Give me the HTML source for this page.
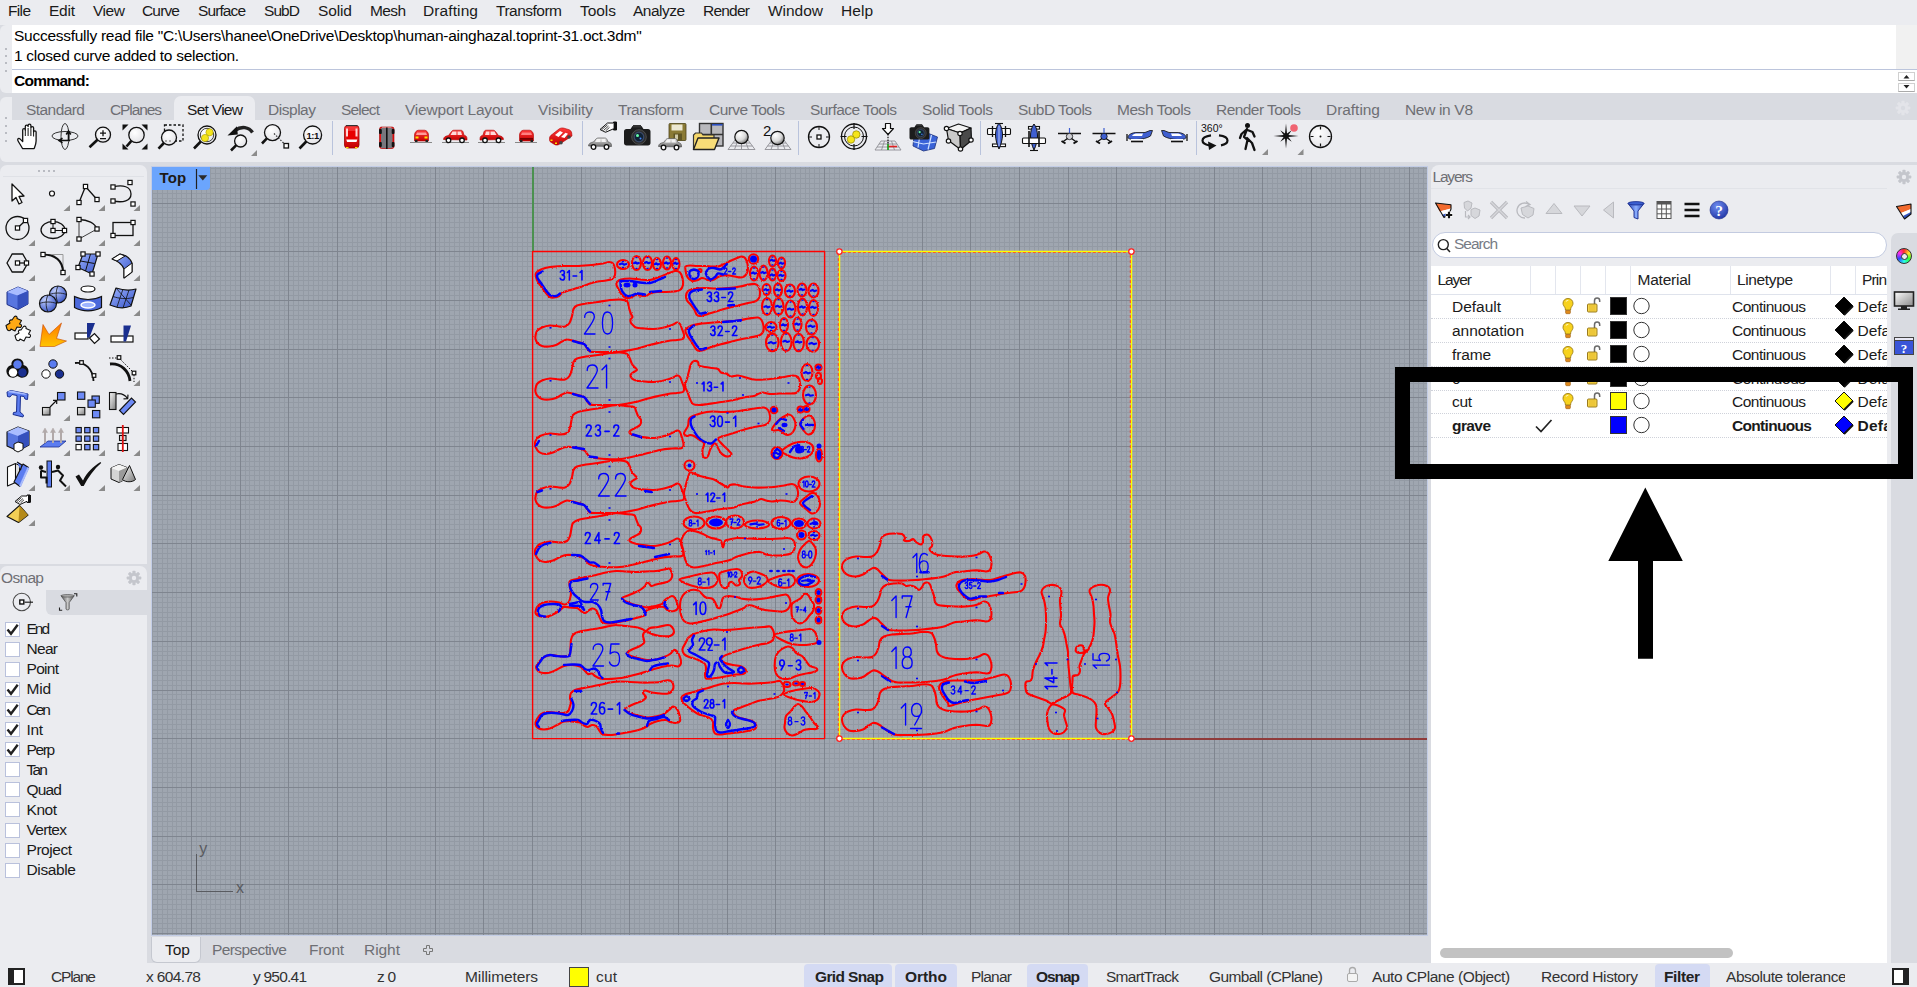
<!DOCTYPE html>
<html><head><meta charset="utf-8"><title>Rhino</title>
<style>
html,body{margin:0;padding:0}
body{width:1917px;height:987px;overflow:hidden;position:relative;background:#d9dbe1;font-family:"Liberation Sans",sans-serif}
.t{position:absolute;white-space:nowrap;display:block}
.b{position:absolute;display:block}
svg{position:absolute;display:block;overflow:visible}
</style></head><body>

<div class="b" style="left:0px;top:0px;width:1917px;height:25px;background:#ebecf0;"></div>
<span class="t" style="left:8.0px;top:2.9px;font-size:15.5px;line-height:15.5px;letter-spacing:-0.66px;color:#1a1a1a;">File</span>
<span class="t" style="left:49.0px;top:2.9px;font-size:15.5px;line-height:15.5px;letter-spacing:-0.24px;color:#1a1a1a;">Edit</span>
<span class="t" style="left:93.0px;top:2.9px;font-size:15.5px;line-height:15.5px;letter-spacing:-0.44px;color:#1a1a1a;">View</span>
<span class="t" style="left:142.0px;top:2.9px;font-size:15.5px;line-height:15.5px;letter-spacing:-0.84px;color:#1a1a1a;">Curve</span>
<span class="t" style="left:198.0px;top:2.9px;font-size:15.5px;line-height:15.5px;letter-spacing:-0.90px;color:#1a1a1a;">Surface</span>
<span class="t" style="left:264.0px;top:2.9px;font-size:15.5px;line-height:15.5px;letter-spacing:-0.92px;color:#1a1a1a;">SubD</span>
<span class="t" style="left:318.0px;top:2.9px;font-size:15.5px;line-height:15.5px;letter-spacing:-0.12px;color:#1a1a1a;">Solid</span>
<span class="t" style="left:370.0px;top:2.9px;font-size:15.5px;line-height:15.5px;letter-spacing:-0.63px;color:#1a1a1a;">Mesh</span>
<span class="t" style="left:423.0px;top:2.9px;font-size:15.5px;line-height:15.5px;letter-spacing:0.10px;color:#1a1a1a;">Drafting</span>
<span class="t" style="left:496.0px;top:2.9px;font-size:15.5px;line-height:15.5px;letter-spacing:-0.51px;color:#1a1a1a;">Transform</span>
<span class="t" style="left:580.0px;top:2.9px;font-size:15.5px;line-height:15.5px;letter-spacing:-0.05px;color:#1a1a1a;">Tools</span>
<span class="t" style="left:633.0px;top:2.9px;font-size:15.5px;line-height:15.5px;letter-spacing:-0.52px;color:#1a1a1a;">Analyze</span>
<span class="t" style="left:703.0px;top:2.9px;font-size:15.5px;line-height:15.5px;letter-spacing:-0.77px;color:#1a1a1a;">Render</span>
<span class="t" style="left:768.0px;top:2.9px;font-size:15.5px;line-height:15.5px;letter-spacing:-0.03px;color:#1a1a1a;">Window</span>
<span class="t" style="left:841.0px;top:2.9px;font-size:15.5px;line-height:15.5px;letter-spacing:0.04px;color:#1a1a1a;">Help</span>
<div class="b" style="left:0px;top:25px;width:12px;height:68px;background:#ebecf0;border-radius:6px 0 0 6px"></div>
<div class="b" style="left:12px;top:25px;width:1884px;height:44px;background:#fff;"></div>
<div class="b" style="left:1896px;top:25px;width:21px;height:44px;background:#f1f1f1;"></div>
<div class="b" style="left:12px;top:69px;width:1905px;height:1px;background:#bcc5dc;"></div>
<div class="b" style="left:12px;top:70px;width:1905px;height:23px;background:#fff;"></div>
<span class="t" style="left:14.0px;top:27.9px;font-size:15.5px;line-height:15.5px;letter-spacing:-0.27px;color:#000;">Successfully read file "C:\Users\hanee\OneDrive\Desktop\human-ainghazal.toprint-31.oct.3dm"</span>
<span class="t" style="left:14.0px;top:47.9px;font-size:15.5px;line-height:15.5px;letter-spacing:-0.28px;color:#000;">1 closed curve added to selection.</span>
<span class="t" style="left:14.0px;top:72.9px;font-size:15.5px;line-height:15.5px;letter-spacing:-0.71px;color:#000;font-weight:bold;">Command:</span>
<div class="b" style="left:5px;top:48px;width:2px;height:2px;background:#a9abb3;border-radius:2px"></div>
<div class="b" style="left:5px;top:55px;width:2px;height:2px;background:#a9abb3;border-radius:2px"></div>
<div class="b" style="left:5px;top:62px;width:2px;height:2px;background:#a9abb3;border-radius:2px"></div>
<div class="b" style="left:5px;top:70px;width:2px;height:2px;background:#a9abb3;border-radius:2px"></div>
<div class="b" style="left:1897.5px;top:72px;width:17px;height:9px;background:#fff;border:1px solid #d0d0d0;border-bottom-color:#aaa;box-sizing:border-box"></div>
<div class="b" style="left:1897.5px;top:82.5px;width:17px;height:9px;background:#fff;border:1px solid #d0d0d0;border-bottom-color:#aaa;box-sizing:border-box"></div>
<svg style="left:1898px;top:72px" width="17" height="20"><path d="M5.5 6.5L8.5 3L11.5 6.5Z M5.5 13L8.5 16.5L11.5 13Z" fill="#222"/></svg>
<div class="b" style="left:0px;top:95px;width:1917px;height:72px;background:#d9dbe1;"></div>
<div class="b" style="left:12px;top:120px;width:1905px;height:42px;background:#ebecf0;"></div>
<div class="b" style="left:0px;top:97px;width:12px;height:65px;background:#ebecf0;border-radius:6px 0 0 6px"></div>
<div class="b" style="left:174px;top:96px;width:81px;height:26px;background:#ebecf0;border-radius:7px 7px 0 0"></div>
<span class="t" style="left:26.0px;top:101.9px;font-size:15.5px;line-height:15.5px;letter-spacing:-0.56px;color:#6e6f74;">Standard</span>
<span class="t" style="left:110.0px;top:101.9px;font-size:15.5px;line-height:15.5px;letter-spacing:-1.10px;color:#6e6f74;">CPlanes</span>
<span class="t" style="left:187.0px;top:101.9px;font-size:15.5px;line-height:15.5px;letter-spacing:-0.70px;color:#1a1a1a;">Set View</span>
<span class="t" style="left:268.0px;top:101.9px;font-size:15.5px;line-height:15.5px;letter-spacing:-0.47px;color:#6e6f74;">Display</span>
<span class="t" style="left:341.0px;top:101.9px;font-size:15.5px;line-height:15.5px;letter-spacing:-0.82px;color:#6e6f74;">Select</span>
<span class="t" style="left:405.0px;top:101.9px;font-size:15.5px;line-height:15.5px;letter-spacing:-0.20px;color:#6e6f74;">Viewport Layout</span>
<span class="t" style="left:538.0px;top:101.9px;font-size:15.5px;line-height:15.5px;letter-spacing:-0.08px;color:#6e6f74;">Visibility</span>
<span class="t" style="left:618.0px;top:101.9px;font-size:15.5px;line-height:15.5px;letter-spacing:-0.51px;color:#6e6f74;">Transform</span>
<span class="t" style="left:709.0px;top:101.9px;font-size:15.5px;line-height:15.5px;letter-spacing:-0.56px;color:#6e6f74;">Curve Tools</span>
<span class="t" style="left:810.0px;top:101.9px;font-size:15.5px;line-height:15.5px;letter-spacing:-0.55px;color:#6e6f74;">Surface Tools</span>
<span class="t" style="left:922.0px;top:101.9px;font-size:15.5px;line-height:15.5px;letter-spacing:-0.37px;color:#6e6f74;">Solid Tools</span>
<span class="t" style="left:1018.0px;top:101.9px;font-size:15.5px;line-height:15.5px;letter-spacing:-0.55px;color:#6e6f74;">SubD Tools</span>
<span class="t" style="left:1117.0px;top:101.9px;font-size:15.5px;line-height:15.5px;letter-spacing:-0.46px;color:#6e6f74;">Mesh Tools</span>
<span class="t" style="left:1216.0px;top:101.9px;font-size:15.5px;line-height:15.5px;letter-spacing:-0.55px;color:#6e6f74;">Render Tools</span>
<span class="t" style="left:1326.0px;top:101.9px;font-size:15.5px;line-height:15.5px;letter-spacing:-0.04px;color:#6e6f74;">Drafting</span>
<span class="t" style="left:1405.0px;top:101.9px;font-size:15.5px;line-height:15.5px;letter-spacing:-0.33px;color:#6e6f74;">New in V8</span>
<div class="b" style="left:5px;top:117px;width:2px;height:2px;background:#a9abb3;border-radius:2px"></div>
<div class="b" style="left:5px;top:125px;width:2px;height:2px;background:#a9abb3;border-radius:2px"></div>
<div class="b" style="left:5px;top:132px;width:2px;height:2px;background:#a9abb3;border-radius:2px"></div>
<div class="b" style="left:5px;top:140px;width:2px;height:2px;background:#a9abb3;border-radius:2px"></div>
<div class="b" style="left:332px;top:121px;width:1px;height:34px;background:#b9c3dc;"></div>
<div class="b" style="left:582px;top:121px;width:1px;height:34px;background:#b9c3dc;"></div>
<div class="b" style="left:798px;top:121px;width:1px;height:34px;background:#b9c3dc;"></div>
<div class="b" style="left:980px;top:121px;width:1px;height:34px;background:#b9c3dc;"></div>
<div class="b" style="left:1196px;top:121px;width:1px;height:34px;background:#b9c3dc;"></div>
<svg style="left:0;top:118px" width="1400" height="42" viewBox="0 118 1400 42">
<defs><radialGradient id="gsph" cx=".35" cy=".3" r=".75"><stop offset="0" stop-color="#fff"/><stop offset=".6" stop-color="#d8d8d8"/><stop offset="1" stop-color="#6f6f6f"/></radialGradient><linearGradient id="gred" x1="0" y1="0" x2="0" y2="1"><stop offset="0" stop-color="#ff3b3b"/><stop offset="1" stop-color="#c40000"/></linearGradient><linearGradient id="ggray" x1="0" y1="0" x2="0" y2="1"><stop offset="0" stop-color="#e4e4e4"/><stop offset="1" stop-color="#6d6d6d"/></linearGradient><radialGradient id="glens" cx=".4" cy=".35" r=".7"><stop offset="0" stop-color="#fff"/><stop offset="1" stop-color="#e2e2e6"/></radialGradient></defs>
<path d="M22.500 148.500c-1.500-3-3.800-6-4.700-8.300-.5-1.400 1-2.300 2.200-1.300l2.700 2.700v-11.500c0-2 2.600-2 2.600 0v-3.500c0-2 2.800-2 2.800 0v-1c0-2 2.800-2 2.800 0v2.500c0-2 2.700-2 2.700 0v4c0-1.700 2.500-1.700 2.500 0v9c0 3-1 5-2 7.500z" fill="#fff" stroke="#111" stroke-width="1.300" stroke-linejoin="round"/><path d="M25.300 130v6M28.100 128v8M30.900 128.500v7.500M33.600 131v5.500" stroke="#111" stroke-width="1"/>
<g fill="none" stroke="#333" stroke-width="1"><ellipse cx="65" cy="136" rx="13" ry="4.500"/><ellipse cx="65" cy="136.500" rx="4" ry="13"/></g><path d="M68.500 141v-9M66.200 134.500l2.300-3.500 2.300 3.500M70 140.500h-10M62.500 138.200l-3.500 2.300 3.500 2.300" fill="none" stroke="#111" stroke-width="1.600"/>
<path d="M97.5 139.8L89.5 147.3" stroke="#111" stroke-width="2.600" stroke-linecap="butt"/>
<circle cx="103.0" cy="134.7" r="7.5" fill="url(#glens)" stroke="#111" stroke-width="1.300"/>
<path d="M100 133.200h6M103 130.200v6M100 138.600h6" stroke="#111" stroke-width="1.300"/>
<path d="M131.4 140.8L126.5 146.5" stroke="#111" stroke-width="2.600" stroke-linecap="butt"/>
<circle cx="136.5" cy="135.0" r="7.7" fill="url(#glens)" stroke="#111" stroke-width="1.300"/>

<path d="M122.500 124.500h6l-6 6zM147.500 124.500v6l-6-6zM122.500 149.500v-6l6 6zM147.500 149.500h-6l6-6z" fill="#111"/>
<rect x="164.500" y="125" width="18.500" height="16" fill="none" stroke="#111" stroke-width="1.300" stroke-dasharray="2.500 2"/>
<path d="M163.9 143.0L158.5 148.7" stroke="#111" stroke-width="2.600" stroke-linecap="butt"/>
<circle cx="169.0" cy="137.5" r="7.5" fill="url(#glens)" stroke="#111" stroke-width="1.300"/>

<path d="M165 141h8" stroke="#666" stroke-width="1" stroke-dasharray="2 2"/>
<path d="M200.8 141.5L194.0 148.5" stroke="#111" stroke-width="2.600" stroke-linecap="butt"/>
<circle cx="207.0" cy="135.0" r="9.0" fill="url(#glens)" stroke="#111" stroke-width="1.300"/>
<circle cx="207" cy="135" r="6.700" fill="none" stroke="#111" stroke-width=".8"/><circle cx="209.500" cy="132.300" r="3.600" fill="#f5e51b" stroke="#a89b00" stroke-width=".6"/><circle cx="205" cy="138" r="3.600" fill="#f5e51b" stroke="#a89b00" stroke-width=".6"/>
<path d="M236.3 145.2L231.0 150.5" stroke="#111" stroke-width="2.600" stroke-linecap="butt"/>
<circle cx="240.6" cy="141.0" r="6.0" fill="url(#glens)" stroke="#111" stroke-width="1.300"/>

<path d="M252.500 132.500c-3.500-5.500-11-7-17.500-2" fill="none" stroke="#222" stroke-width="3.400"/><path d="M227.500 135.500l9.500-9.300.8 8.300z" fill="#111"/><path d="M257 150v6h-6z" fill="#8c8c8c"/>
<path d="M266.9 138.4L262.0 143.5" stroke="#111" stroke-width="2.600" stroke-linecap="butt"/>
<circle cx="272.5" cy="132.6" r="8.0" fill="url(#glens)" stroke="#111" stroke-width="1.300"/>

<path d="M274 133.500l10 10" stroke="#333" stroke-width="1.200" stroke-dasharray="1.500 1.500"/><rect x="284" y="143.500" width="4.500" height="4.500" fill="#fff" stroke="#111" stroke-width="1.300"/>
<path d="M306.3 141.5L299.5 148.5" stroke="#111" stroke-width="2.600" stroke-linecap="butt"/>
<circle cx="312.6" cy="135.0" r="9.0" fill="url(#glens)" stroke="#111" stroke-width="1.300"/>
<text x="312.600" y="139" text-anchor="middle" font-family="Liberation Sans" font-weight="bold" font-size="9.500" fill="#111" letter-spacing="-.5">1:1</text>
<rect x="344.500" y="125.500" width="14.500" height="22.500" rx="3" fill="url(#gred)" stroke="#a00000" stroke-width=".8"/><path d="M346 131h11.500l-1 9h-9.500z" fill="#e80000"/><path d="M346.300 139.500h11l-.8 2.500h-9.400z" fill="#fff"/><path d="M346 128.500h2v8h-2zM355.500 128.500h2v8h-2z" fill="#ffd5d5"/><rect x="346" y="147" width="2.500" height="1.300" fill="#ffe000"/><rect x="355" y="147" width="2.500" height="1.300" fill="#ffe000"/><rect x="346" y="125" width="11.500" height="1.200" fill="#333"/>
<rect x="379.500" y="127" width="14.500" height="21.500" rx="2" fill="#e81010" stroke="#a00000" stroke-width=".6"/><rect x="382" y="127.500" width="9.500" height="20.500" fill="url(#ggray)"/><rect x="381" y="128" width="11.500" height="20" fill="#77777d"/><rect x="386" y="127.500" width="1.600" height="21.500" fill="#111"/><rect x="379" y="129" width="2.800" height="5" rx="1" fill="#111"/><rect x="391.700" y="129" width="2.800" height="5" rx="1" fill="#111"/><rect x="379" y="142" width="2.800" height="5" rx="1" fill="#111"/><rect x="391.700" y="142" width="2.800" height="5" rx="1" fill="#111"/>
<path d="M410 142.500h22" stroke="#888" stroke-width="1"/><path d="M414.500 141v-6c0-2.500 2-4.800 4-4.800h6c2 0 4 2.300 4 4.800v6z" fill="url(#gred)" stroke="#b00000" stroke-width=".6"/><path d="M417 132.500h9l1 2.500h-11z" fill="#ff9a9a"/><rect x="415.500" y="136.500" width="3" height="2" fill="#ffe000"/><rect x="424.500" y="136.500" width="3" height="2" fill="#ffe000"/><rect x="415" y="140" width="2.500" height="2" fill="#222"/><rect x="425.500" y="140" width="2.500" height="2" fill="#222"/>
<g transform="translate(443 0)"><path d="M-1 142.500h27" stroke="#888" stroke-width="1"/><path d="M.5 139.500c0-2.500 2-3.500 5-4l3-4c.7-1 1.500-1.300 3-1.300h6c1.500 0 2 .5 2.500 1.500l1 3.500c2 .3 3 1.500 3 3.500v1.300z" fill="url(#gred)" stroke="#b00000" stroke-width=".6"/><path d="M9.500 131.500h4v3.500h-6zM14.500 131.500h3.500l1 3.500h-4.500z" fill="#ffd9d9"/><circle cx="5.500" cy="140.300" r="2.300" fill="#fff" stroke="#111" stroke-width="1.300"/><circle cx="19" cy="140.300" r="2.300" fill="#fff" stroke="#111" stroke-width="1.300"/></g>
<g transform="translate(504 0) scale(-1 1)"><path d="M-1 142.500h27" stroke="#888" stroke-width="1"/><path d="M.5 139.500c0-2.500 2-3.500 5-4l3-4c.7-1 1.500-1.300 3-1.300h6c1.500 0 2 .5 2.500 1.500l1 3.500c2 .3 3 1.500 3 3.500v1.300z" fill="url(#gred)" stroke="#b00000" stroke-width=".6"/><path d="M9.500 131.500h4v3.500h-6zM14.500 131.500h3.500l1 3.500h-4.500z" fill="#ffd9d9"/><circle cx="5.500" cy="140.300" r="2.300" fill="#fff" stroke="#111" stroke-width="1.300"/><circle cx="19" cy="140.300" r="2.300" fill="#fff" stroke="#111" stroke-width="1.300"/></g>
<path d="M515 142.500h22" stroke="#888" stroke-width="1"/><path d="M519.500 141v-6c0-2.500 2-4.800 4-4.800h6c2 0 4 2.300 4 4.800v6z" fill="url(#gred)" stroke="#b00000" stroke-width=".6"/><path d="M522 132.500h9l1 2.500h-11z" fill="#ff8080"/><rect x="520" y="138" width="13" height="1.800" fill="#700"/><rect x="520" y="140" width="2.500" height="2" fill="#222"/><rect x="530.500" y="140" width="2.500" height="2" fill="#222"/>
<path d="M549.500 138.500c0-2 1-3 2.500-4l7-5.500c1.500-1 3-1.300 5-.8l5 1.500c1.500.5 2.500 1.800 2.700 3.300l.3 3-13 8.500c-1.500.8-3 .8-4.500 0l-4-2.500c-.8-.5-1-1.500-1-3.500z" fill="url(#gred)" stroke="#b00000" stroke-width=".6"/><path d="M555 135l5-4 3 1.500-4.500 4.500zM561 137l4.500-4.300 2.500 1-3.500 4.300z" fill="#fff"/><circle cx="561" cy="142.800" r="1.800" fill="#444"/><circle cx="569" cy="137" r="1.800" fill="#444"/><rect x="550.500" y="139.500" width="2" height="1.500" fill="#ffe000"/><rect x="555" y="142.500" width="2" height="1.500" fill="#ffe000"/>
<g transform="translate(588 138)"><path d="M.5 8c0-2.500 2-3.500 5-4l2.500-3c.7-.8 1.500-1 3-1h5.500c1.500 0 2 .5 2.500 1.500l1 2.500c2.500.3 3.500 1.500 3.500 3.500v1z" fill="url(#ggray)" stroke="#444" stroke-width=".6"/><path d="M9 1h3.500v3h-5.500zM13.500 1h3.500l1 3h-4.500z" fill="#f2f2f2"/><circle cx="5.500" cy="9" r="2.300" fill="#fff" stroke="#111" stroke-width="1.300"/><circle cx="18.500" cy="9" r="2.300" fill="#fff" stroke="#111" stroke-width="1.300"/></g>
<path d="M600 129.500l7.500-6.500h6v-1h3v8h-3v-1.200l-8 3.500z" fill="#fff" stroke="#111" stroke-width="1"/><path d="M601.500 129.800l6-5M603.500 130.500l5-4.500M605.500 131l4-3.700M614 122v7.500" stroke="#111" stroke-width=".8"/><rect x="614" y="122" width="3" height="8" fill="#111"/>
<g transform="translate(624 125.5) scale(1)"><path d="M0 6c0-1.500 1-2.500 2.500-2.500h4l2-3h9l2 3h4.500c1.500 0 2.500 1 2.500 2.500v11.500c0 1.500-1 2.500-2.500 2.500h-21.500c-1.500 0-2.500-1-2.500-2.500z" fill="#1c1c1c"/><rect x="9" y="-.5" width="8" height="2.500" fill="#333"/><circle cx="15" cy="11.500" r="7.300" fill="#2e2e2e" stroke="#555" stroke-width=".8"/><circle cx="15" cy="11.500" r="4.800" fill="#123" stroke="#3b4a6a" stroke-width="1.200"/><circle cx="13.500" cy="10" r="1.500" fill="#6fa"/><circle cx="16.500" cy="13" r="1" fill="#48f"/></g>
<rect x="669" y="123.500" width="17" height="17" rx="1" fill="#8a7a35" stroke="#4b4216" stroke-width=".8"/><rect x="671.500" y="124.500" width="11" height="6" fill="#ece8d2"/><rect x="673.500" y="133.500" width="8.500" height="7" fill="#5e5424"/><rect x="675" y="134.500" width="3" height="5" fill="#cfc9a6"/>
<g transform="translate(658 138.5)"><path d="M.5 8c0-2.500 2-3.500 5-4l2.500-3c.7-.8 1.500-1 3-1h5.500c1.500 0 2 .5 2.500 1.500l1 2.500c2.500.3 3.500 1.500 3.500 3.500v1z" fill="url(#ggray)" stroke="#444" stroke-width=".6"/><path d="M9 1h3.500v3h-5.500zM13.500 1h3.500l1 3h-4.500z" fill="#f2f2f2"/><circle cx="5.500" cy="9" r="2.300" fill="#fff" stroke="#111" stroke-width="1.300"/><circle cx="18.500" cy="9" r="2.300" fill="#fff" stroke="#111" stroke-width="1.300"/></g>
<rect x="699.500" y="123.500" width="23.500" height="22.500" fill="#b9b9bd" stroke="#333" stroke-width="1.400"/><path d="M711.300 123.500v22.500M699.500 134.500h23.500" stroke="#333" stroke-width="1.600"/><rect x="712" y="124" width="10.500" height="1.600" fill="#2b4fc0"/><path d="M693.500 149.500v-14.500l2-2h6l1.500 2h11v3" fill="#f5d76a" stroke="#333" stroke-width="1.200"/><path d="M693.500 149.500l4.500-11.500h21l-4.500 11.500z" fill="#f7dc78" stroke="#222" stroke-width="1.400" stroke-linejoin="round"/>
<g fill="none" stroke="#8e8e94" stroke-width=".9"><path d="M735 140L728 149.500H755L748 140Z"/><path d="M733 143h17M730.5 146h22"/><path d="M738 140L734.5 149.500M741.5 140V149.500M745 140L748.5 149.500"/></g>
<circle cx="741.5" cy="137" r="6.700" fill="url(#gsph)" stroke="#111" stroke-width="1.200"/>
<g fill="none" stroke="#8e8e94" stroke-width=".9"><path d="M772 140L765 149.500H791L784 140Z"/><path d="M770 143h16M767.5 146h21"/><path d="M774.5 140L771 149.500M778 140V149.500M781.5 140L785 149.500"/></g>
<circle cx="777.5" cy="138" r="6.700" fill="url(#gsph)" stroke="#111" stroke-width="1.200"/>
<text x="763" y="135.500" font-family="Liberation Sans" font-size="15" fill="#111">2</text>
<g fill="none" stroke="#111" stroke-width="1.300"><circle cx="819" cy="137" r="10.500"/><path d="M819 126.500v3.500M819 144v3.500M808.500 137h3.500M826 137h3.500" stroke-width="1"/><rect x="817" y="135" width="4" height="4" fill="#fff"/></g>
<g fill="none" stroke="#111" stroke-width="1.300"><circle cx="854" cy="136.500" r="12.500"/><circle cx="854" cy="136.500" r="9.500" stroke-width="1"/><path d="M854 123v6M854 144v6M840.500 136.500h6M861.500 136.500h6" stroke-width="1.200"/></g><circle cx="856.300" cy="134.500" r="3.700" fill="#f5e51b" stroke="#8f8400" stroke-width=".7"/><circle cx="851" cy="139.500" r="3.700" fill="#f5e51b" stroke="#8f8400" stroke-width=".7"/>
<g fill="none" stroke="#8e8e94" stroke-width=".9"><path d="M881 141L875 150H901L895 141Z"/><path d="M879 144h18M877 147h22M884.500 141L881.500 150M888 141V150M891.500 141L894.500 150"/></g><path d="M888 146.500h9" stroke="#e02020" stroke-width="1.600"/><path d="M888 144v6" stroke="#18a018" stroke-width="1.600"/><path d="M888 134v10" stroke="#111" stroke-width="1.200" stroke-dasharray="1.500 1.200"/><path d="M885.500 123.500h5v5h3l-5.500 6-5.500-6h3z" fill="#fff" stroke="#111" stroke-width="1.200" stroke-linejoin="round"/>
<path d="M914 136l12-3.500 11.500 4.500-3 11.500-11 2.500-10.500-5z" fill="#3a63d8" stroke="#1b2f7a" stroke-width=".8"/><path d="M920 134.500l-2 13M931.500 135l-3.500 14.500M912.500 141.500l11 2.500 12.500-2" fill="none" stroke="#cfe0ff" stroke-width="1.200"/>
<g transform="translate(909.5 124.5) scale(0.75)"><path d="M0 6c0-1.500 1-2.500 2.500-2.500h4l2-3h9l2 3h4.500c1.500 0 2.500 1 2.500 2.500v11.500c0 1.500-1 2.500-2.500 2.500h-21.500c-1.500 0-2.500-1-2.500-2.500z" fill="#1c1c1c"/><rect x="9" y="-.5" width="8" height="2.500" fill="#333"/><circle cx="15" cy="11.500" r="7.300" fill="#2e2e2e" stroke="#555" stroke-width=".8"/><circle cx="15" cy="11.500" r="4.800" fill="#123" stroke="#3b4a6a" stroke-width="1.200"/><circle cx="13.500" cy="10" r="1.500" fill="#6fa"/><circle cx="16.500" cy="13" r="1" fill="#48f"/></g>
<path d="M946.500 128.500l12-4.500 12.500 4-11 5z" fill="#f2f2f2" stroke="#111" stroke-width="1.200" stroke-linejoin="round"/><path d="M946.500 128.500l13.500 4.500.5 16.500-12-9z" fill="#c9c9c9" stroke="#111" stroke-width="1.200" stroke-linejoin="round"/><path d="M960 133l11-5 .5 12.500-11 9z" fill="#4a4a4a" stroke="#111" stroke-width="1.200" stroke-linejoin="round"/><g fill="#fff" stroke="#111" stroke-width="1.200"><circle cx="946.500" cy="128.500" r="2.200"/><circle cx="960" cy="133.500" r="2.200"/><circle cx="948.500" cy="141" r="2.200"/><circle cx="960.500" cy="149" r="2.200"/><circle cx="971" cy="140" r="2.200"/></g>
<g stroke="#111" stroke-width="1.100" fill="#fff"><rect x="987.500" y="128.500" width="23" height="6" rx="1"/><rect x="992.500" y="144" width="13" height="2.600"/><path d="M995 123.500h8" /><path d="M992.500 126v11M1005.500 126v11" stroke-width="1.300"/></g><path d="M999 123c2.500 3 3.500 8 3.500 12s-1.500 10-3.500 14c-2-4-3.500-10-3.500-14s1-9 3.500-12z" fill="#3f5fd0" stroke="#111" stroke-width="1"/><path d="M999 126v20" stroke="#b8c8ff" stroke-width="1"/>
<g stroke="#111" stroke-width="1.100" fill="#fff"><rect x="1028.500" y="126.500" width="11" height="2.600"/><path d="M1030 150.500h8" /></g><path d="M1034 124c2.500 3 3.500 8 3.500 12s-1.500 10-3.500 14c-2-4-3.500-10-3.500-14s1-9 3.500-12z" fill="#3f5fd0" stroke="#111" stroke-width="1"/><rect x="1022.500" y="138" width="23" height="5.500" rx="1" fill="#fff" stroke="#111" stroke-width="1.100"/><path d="M1029 131v16M1039 131v16" stroke="#111" stroke-width="1.600"/>
<path d="M1058 133.500h23" stroke="#111" stroke-width="1.500"/><path d="M1069.5 128v5" stroke="#3f5fd0" stroke-width="1.200"/><circle cx="1069.5" cy="136.500" r="3.200" fill="#cfcfd4" stroke="#111" stroke-width=".8"/><path d="M1067.5 138.500l-5 3.500M1071.5 138.500l5 3.500" stroke="#111" stroke-width="1.400"/><path d="M1061.5 141l4 2.500M1077.5 141l-4 2.500" stroke="#111" stroke-width="2"/>
<path d="M1092.5 133.500h23" stroke="#111" stroke-width="1.500"/><path d="M1104 128v5" stroke="#3f5fd0" stroke-width="1.200"/><circle cx="1104" cy="136.500" r="3.200" fill="#3f5fd0" stroke="#111" stroke-width=".8"/><path d="M1102 138.500l-5 3.500M1106 138.500l5 3.500" stroke="#111" stroke-width="1.400"/><path d="M1096 141l4 2.500M1112 141l-4 2.500" stroke="#111" stroke-width="2"/>
<g transform="translate(1126 0)"><path d="M1 134v7" stroke="#111" stroke-width="1.300"/><path d="M2 137.500c0-3 4-5 9-5h8l5-2h2.500l-2 5.500c-3 2-9 3.500-14 3.500s-8.500-.5-8.500-2z" fill="#3f5fd0" stroke="#111" stroke-width=".8"/><path d="M6 136c1-2 3-2.500 6-2.500h5l-1 2.500z" fill="#fff"/><path d="M5 141.500h12" stroke="#111" stroke-width="1.600"/><path d="M5 139.500h12" stroke="#fff" stroke-width="1"/></g>
<g transform="translate(1188 0) scale(-1 1)"><path d="M1 134v7" stroke="#111" stroke-width="1.300"/><path d="M2 137.500c0-3 4-5 9-5h8l5-2h2.500l-2 5.500c-3 2-9 3.500-14 3.500s-8.500-.5-8.500-2z" fill="#3f5fd0" stroke="#111" stroke-width=".8"/><path d="M6 136c1-2 3-2.500 6-2.500h5l-1 2.500z" fill="#fff"/><path d="M5 141.500h12" stroke="#111" stroke-width="1.600"/><path d="M5 139.500h12" stroke="#fff" stroke-width="1"/></g>
<text x="1201" y="131.500" font-family="Liberation Sans" font-size="10.500" fill="#111">360°</text><path d="M1219 135.300c5 .5 8.500 2.500 8.500 5.200 0 2-2.500 4-6.500 4.800M1211 135.300c-5 .7-8.500 2.700-8.500 5.200 0 2.300 3 4.200 7 5" fill="none" stroke="#111" stroke-width="2.200"/><path d="M1208 141.500l8.500 4-7.500 4.500z" fill="#111"/>
<circle cx="1247.500" cy="125.500" r="2.500" fill="#111"/><path d="M1247 129l-3 8 3.500 3-2 9M1247 138l5 5 2.500 7M1247.500 130l5 2 2 4.500M1246 130l-4.500 4-1.500 4" fill="none" stroke="#111" stroke-width="2.300" stroke-linecap="round" stroke-linejoin="round"/><path d="M1268 149v6h-6z" fill="#8c8c8c"/>
<path d="M1286.0 123.5L1287.0 133.6L1291.7 130.3L1288.4 135.0L1298.5 136.0L1288.4 137.0L1291.7 141.7L1287.0 138.4L1286.0 148.5L1285.0 138.4L1280.3 141.7L1283.6 137.0L1273.5 136.0L1283.6 135.0L1280.3 130.3L1285.0 133.6Z" fill="#111"/>
<circle cx="1294" cy="128" r="3.800" fill="#f06472"/><path d="M1303.500 149v6h-6z" fill="#8c8c8c"/>
<circle cx="1320.500" cy="136.500" r="11" fill="url(#glens)" stroke="#111" stroke-width="1.300"/><path d="M1320.500 126.500v3M1320.500 143.500v3M1310.500 136.500h3M1327.500 136.500h3" stroke="#111" stroke-width="1.200"/><circle cx="1320.500" cy="136.500" r="1" fill="#111"/>
</svg>
<svg style="left:1895.4px;top:100px" width="16" height="16" viewBox="-8 -8 16 16"><g fill="#e3e4e9"><rect x="-1.600" y="-7.300" width="3.200" height="14.600" rx=".8" transform="rotate(0)"/><rect x="-1.600" y="-7.300" width="3.200" height="14.600" rx=".8" transform="rotate(45)"/><rect x="-1.600" y="-7.300" width="3.200" height="14.600" rx=".8" transform="rotate(90)"/><rect x="-1.600" y="-7.300" width="3.200" height="14.600" rx=".8" transform="rotate(135)"/><circle r="5"/></g><circle r="2.200" fill="#d9dbe1"/></svg>
<div class="b" style="left:0px;top:165px;width:147px;height:399px;background:#ebecf0;border-radius:7px 7px 0 0"></div>
<div class="b" style="left:38px;top:170px;width:2px;height:2px;background:#a9abb3;border-radius:2px"></div>
<div class="b" style="left:43px;top:170px;width:2px;height:2px;background:#a9abb3;border-radius:2px"></div>
<div class="b" style="left:48px;top:170px;width:2px;height:2px;background:#a9abb3;border-radius:2px"></div>
<div class="b" style="left:53px;top:170px;width:2px;height:2px;background:#a9abb3;border-radius:2px"></div>
<svg style="left:0;top:165px" width="148" height="400" viewBox="0 165 148 400">
<defs><linearGradient id="lb" x1="0" y1="0" x2="1" y2="1"><stop offset="0" stop-color="#9db4ff"/><stop offset="1" stop-color="#3552c8"/></linearGradient><radialGradient id="lsph" cx=".35" cy=".3" r=".8"><stop offset="0" stop-color="#c4d2ff"/><stop offset="1" stop-color="#2f4cc0"/></radialGradient><linearGradient id="lor" x1="0" y1="0" x2="0" y2="1"><stop offset="0" stop-color="#ff7a00"/><stop offset="1" stop-color="#ffc400"/></linearGradient><linearGradient id="lgr" x1="0" y1="0" x2="1" y2="1"><stop offset="0" stop-color="#fafafa"/><stop offset="1" stop-color="#7c7c7c"/></linearGradient></defs>
<path d="M3 176.500h141" stroke="#dfe1e6" stroke-width="1"/>
<path d="M12 184v17l4-3.500 3 6.500 3-1.500-3-6 5-.500z" fill="#fff" stroke="#111" stroke-width="1.300" stroke-linejoin="round"/>
<circle cx="52" cy="193.500" r="2.500" fill="#fff" stroke="#111" stroke-width="1.200"/>
<path d="M70 211v-6l-6.500 6z" fill="#8a8a8a"/>
<path d="M79 202.500L85.500 186.500L97 199.500" fill="none" stroke="#111" stroke-width="1.300"/>
<rect x="76.9" y="200.4" width="4.2" height="4.2" fill="#fff" stroke="#111" stroke-width="1.200"/>
<rect x="83.4" y="184.4" width="4.2" height="4.2" fill="#fff" stroke="#111" stroke-width="1.200"/>
<rect x="94.9" y="197.4" width="4.2" height="4.2" fill="#fff" stroke="#111" stroke-width="1.200"/>
<path d="M105 211v-6l-6.500 6z" fill="#8a8a8a"/>
<path d="M113 187c10-3 18 0 18 7s-8 9-18 7" fill="none" stroke="#111" stroke-width="1.300"/>
<rect x="110.9" y="184.9" width="4.2" height="4.2" fill="#fff" stroke="#111" stroke-width="1.200"/>
<rect x="127.9" y="180.4" width="4.2" height="4.2" fill="#fff" stroke="#111" stroke-width="1.200"/>
<rect x="110.9" y="198.9" width="4.2" height="4.2" fill="#fff" stroke="#111" stroke-width="1.200"/>
<rect x="130.9" y="201.9" width="4.2" height="4.2" fill="#fff" stroke="#111" stroke-width="1.200"/>
<path d="M140 211v-6l-6.500 6z" fill="#8a8a8a"/>
<circle cx="17.500" cy="228" r="11.500" fill="none" stroke="#111" stroke-width="1.300"/><path d="M17.500 228L25.500 220.500" fill="none" stroke="#111" stroke-width="1.300"/>
<rect x="15.4" y="225.9" width="4.2" height="4.2" fill="#fff" stroke="#111" stroke-width="1.200"/>
<rect x="23.4" y="218.4" width="4.2" height="4.2" fill="#fff" stroke="#111" stroke-width="1.200"/>
<path d="M35 246v-6l-6.500 6z" fill="#8a8a8a"/>
<ellipse cx="53" cy="230" rx="12" ry="8.500" fill="none" stroke="#111" stroke-width="1.300"/><path d="M53 221.500V230.500H64.500" stroke="#111" stroke-width="1" fill="none"/>
<rect x="50.9" y="219.4" width="4.2" height="4.2" fill="#fff" stroke="#111" stroke-width="1.200"/>
<rect x="50.9" y="228.4" width="4.2" height="4.2" fill="#fff" stroke="#111" stroke-width="1.200"/>
<rect x="62.4" y="228.4" width="4.2" height="4.2" fill="#fff" stroke="#111" stroke-width="1.200"/>
<path d="M70 246v-6l-6.500 6z" fill="#8a8a8a"/>
<path d="M79 219.500c9 0 16 4 18 9.500" fill="none" stroke="#111" stroke-width="1.300"/><path d="M79 219.500V239L97 229" stroke="#111" stroke-width=".8" fill="none"/>
<rect x="76.9" y="217.4" width="4.2" height="4.2" fill="#fff" stroke="#111" stroke-width="1.200"/>
<rect x="76.9" y="236.9" width="4.2" height="4.2" fill="#fff" stroke="#111" stroke-width="1.200"/>
<rect x="94.9" y="226.9" width="4.2" height="4.2" fill="#fff" stroke="#111" stroke-width="1.200"/>
<path d="M105 246v-6l-6.500 6z" fill="#8a8a8a"/>
<rect x="113" y="222.500" width="20" height="13" fill="none" stroke="#111" stroke-width="1.300"/>
<rect x="130.9" y="220.4" width="4.2" height="4.2" fill="#fff" stroke="#111" stroke-width="1.200"/>
<rect x="110.9" y="233.4" width="4.2" height="4.2" fill="#fff" stroke="#111" stroke-width="1.200"/>
<path d="M140 246v-6l-6.500 6z" fill="#8a8a8a"/>
<path d="M7 263l5.200-9h10.500l5.200 9-5.200 9h-10.500z" fill="none" stroke="#111" stroke-width="1.300"/><path d="M17.500 263h9" fill="none" stroke="#111" stroke-width="1.300"/>
<rect x="15.4" y="260.9" width="4.2" height="4.2" fill="#fff" stroke="#111" stroke-width="1.200"/>
<rect x="24.4" y="260.9" width="4.2" height="4.2" fill="#fff" stroke="#111" stroke-width="1.200"/>
<path d="M35 281v-6l-6.500 6z" fill="#8a8a8a"/>
<path d="M43 254.500h20v18" stroke="#999" stroke-width="1" fill="none"/><path d="M43 254.500c12 0 20 6 20 18" fill="none" stroke="#111" stroke-width="2.200"/>
<rect x="40.9" y="252.4" width="4.2" height="4.2" fill="#fff" stroke="#111" stroke-width="1.200"/>
<rect x="60.9" y="270.4" width="4.2" height="4.2" fill="#fff" stroke="#111" stroke-width="1.200"/>
<path d="M70 281v-6l-6.500 6z" fill="#8a8a8a"/>
<path d="M83 254h15l-6 20-14-6.500z" fill="url(#lb)" stroke="#111" stroke-width="1.200"/><path d="M90.500 254l-5 17M80.500 261l14 2.500" stroke="#111" stroke-width="1"/>
<rect x="80.9" y="251.9" width="4.2" height="4.2" fill="#fff" stroke="#111" stroke-width="1.200"/>
<rect x="95.9" y="251.9" width="4.2" height="4.2" fill="#fff" stroke="#111" stroke-width="1.200"/>
<rect x="89.9" y="271.9" width="4.2" height="4.2" fill="#fff" stroke="#111" stroke-width="1.200"/>
<rect x="75.9" y="265.4" width="4.2" height="4.2" fill="#fff" stroke="#111" stroke-width="1.200"/>
<path d="M105 281v-6l-6.500 6z" fill="#8a8a8a"/>
<path d="M112 259l8-5c6 1 10 4 12 9v9l-8 6v-9c-2-5-6-8-12-10z" fill="url(#lb)" stroke="#111" stroke-width="1.200" stroke-linejoin="round"/><path d="M112 259l8-5 5 2-8 5zM124 269l8-6v9l-8 6z" fill="#fff" stroke="#111" stroke-width="1"/>
<path d="M140 281v-6l-6.500 6z" fill="#8a8a8a"/>
<path d="M7 292l11-5 10 4v13l-10 5.500-11-5z" fill="#5876e0" stroke="#1d2f85" stroke-width="1"/><path d="M7 292l11-5 10 4-10.500 4.500z" fill="#a9bcff"/><path d="M17.500 295.500L28 291v13l-10.500 5.500z" fill="#3550bd"/>
<path d="M35 316v-6l-6.500 6z" fill="#8a8a8a"/>
<circle cx="58" cy="294.500" r="8.500" fill="url(#lsph)" stroke="#111" stroke-width="1.200"/><circle cx="48" cy="303.500" r="8.500" fill="url(#lsph)" stroke="#111" stroke-width="1.200"/><path d="M49.500 294.500c5-2 12-2 17 0M58 286c-2.500 5-2.500 12 0 17M39.500 303.500c5-2 12-2 17 0M48 295c-2.500 5-2.500 12 0 17" fill="none" stroke="#111" stroke-width=".8"/>
<path d="M70 316v-6l-6.500 6z" fill="#8a8a8a"/>
<ellipse cx="88" cy="289" rx="7" ry="3" fill="#fff" stroke="#111" stroke-width="1.200"/><path d="M74.500 296.500c8 4 19 4 27 0v11c-8 4.500-19 4.500-27 0z" fill="#4b69dc" stroke="#111" stroke-width="1.200"/><ellipse cx="88" cy="305" rx="7" ry="3" fill="#9db4ff" stroke="#fff" stroke-width="1.500"/>
<path d="M105 316v-6l-6.500 6z" fill="#8a8a8a"/>
<path d="M110 305l6-17c6 2 13 3 20 1l-5 17c-7 3-14 2-21-1z" fill="url(#lb)" stroke="#111" stroke-width="1.200" stroke-linejoin="round"/><path d="M113 296.500c6 2 13 3 20 1M123 289l-6 18M129 290l-6 18M116 288l15 17" fill="none" stroke="#111" stroke-width=".8"/>
<path d="M140 316v-6l-6.500 6z" fill="#8a8a8a"/>
<path d="M6 325.500l4-2.500c-1.500-2 0-3.500 2-3l2.500-3.500c2-1 3 .5 2.500 2l4.500 2-2 3.500c2 0 3 2 1 3.500l-3.500-.500-2 4-4-2c-.500 2-3 2.500-4 0z" fill="#ffa914" stroke="#111" stroke-width="1.100" stroke-linejoin="round"/><path d="M15 335.500l4-2.500c-1.500-2 0-3.500 2-3l2.500-3.500c2-1 3 .5 2.500 2l4.500 2-2 3.500c2 0 3 2 1 3.500l-3.500-.500-2 4-4-2c-.500 2-3 2.500-4 0z" fill="#fff" stroke="#111" stroke-width="1.100" stroke-linejoin="round"/>
<path d="M35 351v-6l-6.500 6z" fill="#8a8a8a"/>
<path d="M40 346.500l3-22 6 10 12.500-11.500-5 15.500 10 2.500-12 5.500z" fill="url(#lor)" stroke="#c84800" stroke-width=".6" stroke-linejoin="round"/>
<rect x="75" y="333" width="13" height="6" fill="#fff" stroke="#111" stroke-width="1.200"/><path d="M89.500 338l5-4.500 5 5.500-5 4.500z" fill="#fff" stroke="#111" stroke-width="1.200"/><path d="M87 323h8l-5.500 14.500h-2.500z" fill="#1a2f8f"/>
<rect x="111" y="336" width="22" height="6" fill="#fff" stroke="#111" stroke-width="1.200"/><path d="M123.500 325.500h7.500l-5 16h-2.500z" fill="#1a2f8f"/>
<path d="M17.500 358.500c4 0 6.500 3 6 6.500 3.500 1 5.500 4 5 7-.5 4-4 6.500-8 5.500l-3-1.500-3 1.500c-4 1-7.500-1.500-8-5.500-.5-3 1.500-6 5-7-.500-3.500 2-6.500 6-6.500z" fill="#111"/><circle cx="17.500" cy="364.500" r="4.200" fill="#5b7cf0"/><circle cx="13" cy="372.500" r="4.200" fill="#fff"/><circle cx="22.500" cy="372.500" r="4.200" fill="#1a2f8f"/>
<path d="M35 386v-6l-6.500 6z" fill="#8a8a8a"/>
<circle cx="53" cy="364" r="4.200" fill="#5b7cf0" stroke="#111" stroke-width="1"/><circle cx="46" cy="374" r="4.200" fill="#fff" stroke="#111" stroke-width="1"/><circle cx="59.500" cy="374" r="4.200" fill="#1a2f8f" stroke="#111" stroke-width="1"/>
<path d="M75 363c10-1.500 18 6 18.500 18" fill="none" stroke="#111" stroke-width="1.800"/>
<rect x="79.7" y="360.7" width="3.6" height="3.6" fill="#fff" stroke="#111" stroke-width="1.200"/>
<rect x="92.2" y="373.7" width="3.6" height="3.6" fill="#fff" stroke="#111" stroke-width="1.200"/>
<path d="M110 364c11-1 19 7 20 17" fill="none" stroke="#111" stroke-width="2.800"/><path d="M109 358h10l15 15v9" fill="none" stroke="#111" stroke-width="1" stroke-dasharray="1.500 1.500"/>
<rect x="117.2" y="355.7" width="3.6" height="3.6" fill="#fff" stroke="#111" stroke-width="1.200"/>
<rect x="132.2" y="371.2" width="3.6" height="3.6" fill="#fff" stroke="#111" stroke-width="1.200"/>
<path d="M140 386v-6l-6.500 6z" fill="#8a8a8a"/>
<path d="M7 392l4-1.500 17 3.500-.500 5.500-2.500-.500-1-2.500-3.500-.500-.5 16 3.500 3-.500 2-10-2.500.5-2 3-.500.500-16.500-5-1-2 2.500-2.500-.500z" fill="#5b7cf0" stroke="#1a2f8f" stroke-width="1" stroke-linejoin="round"/><path d="M7 392l4-1.500 17 3.500-3 .8z" fill="#a9bcff"/>
<rect x="42.500" y="407.500" width="7.500" height="7.500" fill="url(#lgr)" stroke="#111" stroke-width="1.100"/><rect x="57.500" y="392.500" width="7.500" height="7.500" fill="#6d8af5" stroke="#111" stroke-width="1.100"/><path d="M50 407l6.500-6.500M53 400.300h3.700v3.700" fill="none" stroke="#111" stroke-width="1.200"/>
<path d="M70 421v-6l-6.500 6z" fill="#8a8a8a"/>
<rect x="77.5" y="392" width="7.300" height="7.300" fill="#6d8af5" stroke="#111" stroke-width="1.100"/>
<rect x="92" y="396" width="7.300" height="7.300" fill="#6d8af5" stroke="#111" stroke-width="1.100"/>
<rect x="88" y="400" width="7.300" height="7.300" fill="#6d8af5" stroke="#111" stroke-width="1.100"/>
<rect x="77.5" y="407.5" width="7.300" height="7.300" fill="url(#lgr)" stroke="#111" stroke-width="1.100"/>
<rect x="92.5" y="410.5" width="7.300" height="7.300" fill="#6d8af5" stroke="#111" stroke-width="1.100"/>
<rect x="109.500" y="392.500" width="6.500" height="17" fill="url(#lgr)" stroke="#111" stroke-width="1.100"/><path d="M119.500 410.500l12-12.500 4 4-12 12.500z" fill="#6d8af5" stroke="#111" stroke-width="1.100"/><path d="M116 394c5-1 9 1 11.500 4.500M123.500 398.800l4.200-.2.300-4" fill="none" stroke="#111" stroke-width="1.200"/>
<path d="M7 432l11-5 11 4v14l-11 6-11-5z" fill="#5876e0" stroke="#111" stroke-width="1.100" stroke-linejoin="round"/><path d="M7 432l11-5 11 4-11 5z" fill="#a9bcff"/><path d="M18 436l11-5v14l-11 6z" fill="#3550bd"/><path d="M14 444l4-2 5 1.500v6l-5 2.500-4-2z" fill="#fff" stroke="#111" stroke-width="1"/>
<path d="M35 456v-6l-6.500 6z" fill="#8a8a8a"/>
<path d="M40 447l8-6h18l-7 6z" fill="#5b7cf0" stroke="#1a2f8f" stroke-width=".8"/><g stroke="#b1a9a9" stroke-width="2" fill="#b1a9a9"><path d="M45 443v-12M53 443v-12M61 443v-12"/><path d="M42.500 432.500l2.500-4.500 2.500 4.500zM50.500 432.500l2.500-4.500 2.500 4.500zM58.500 432.500l2.500-4.500 2.500 4.500z" stroke-width=".5"/></g>
<path d="M70 456v-6l-6.500 6z" fill="#8a8a8a"/>
<rect x="76" y="427.5" width="5.300" height="5.300" fill="#6d8af5" stroke="#111" stroke-width="1.100"/>
<rect x="76" y="436" width="5.300" height="5.300" fill="#6d8af5" stroke="#111" stroke-width="1.100"/>
<rect x="76" y="444.5" width="5.300" height="5.300" fill="#fff" stroke="#111" stroke-width="1.100"/>
<rect x="84.7" y="427.5" width="5.300" height="5.300" fill="#6d8af5" stroke="#111" stroke-width="1.100"/>
<rect x="84.7" y="436" width="5.300" height="5.300" fill="#6d8af5" stroke="#111" stroke-width="1.100"/>
<rect x="84.7" y="444.5" width="5.300" height="5.300" fill="#6d8af5" stroke="#111" stroke-width="1.100"/>
<rect x="93.4" y="427.5" width="5.300" height="5.300" fill="#6d8af5" stroke="#111" stroke-width="1.100"/>
<rect x="93.4" y="436" width="5.300" height="5.300" fill="#6d8af5" stroke="#111" stroke-width="1.100"/>
<rect x="93.4" y="444.5" width="5.300" height="5.300" fill="#6d8af5" stroke="#111" stroke-width="1.100"/>
<path d="M105 456v-6l-6.500 6z" fill="#8a8a8a"/>
<rect x="117" y="427.500" width="11.500" height="5.500" fill="#fff" stroke="#111" stroke-width="1.100"/><rect x="119.500" y="435.500" width="6.500" height="5" fill="#ddd" stroke="#111" stroke-width="1.100"/><rect x="118" y="443.500" width="9.500" height="7" fill="#fff" stroke="#111" stroke-width="1.100"/><path d="M122.800 425v27" stroke="#e01010" stroke-width="1.800"/>
<path d="M140 456v-6l-6.500 6z" fill="#8a8a8a"/>
<path d="M7.500 467l8-3.500v19l-8 3.500z" fill="#fff" stroke="#111" stroke-width="1.100" stroke-linejoin="round"/><path d="M15.500 463.500l4 2v19.500l-4 -2.500z" fill="#ddd" stroke="#111" stroke-width="1"/><path d="M17 462l5 3-1.500 5M14 482l6 4.500 8.500-19-5.500-3.500z" fill="#5b7cf0" stroke="#111" stroke-width="1.100" stroke-linejoin="round"/><path d="M20 486.500l8.500-19" stroke="#a9bcff" stroke-width="2"/>
<path d="M35 491v-6l-6.500 6z" fill="#8a8a8a"/>
<rect x="47" y="461" width="4.500" height="26" fill="#5b7cf0" stroke="#111" stroke-width="1"/><circle cx="41" cy="467.500" r="2.200" fill="#111"/><circle cx="58" cy="467" r="2.200" fill="#111"/><path d="M40.500 470.500l5.500 1.500M41 471v6.500h5.500v6M52 472l6-1.500 5 5-3 5 6 6" fill="none" stroke="#111" stroke-width="2" stroke-linejoin="round"/>
<path d="M70 491v-6l-6.500 6z" fill="#8a8a8a"/>
<path d="M75.500 476.500l3.500-2 4 6c4-8 10-14 17.500-18.500l.7 1c-7 6-13 14-17.500 23h-2.500z" fill="#111"/>
<path d="M105 491v-6l-6.500 6z" fill="#8a8a8a"/>
<path d="M111 468l8-3.500 8 3v11l-8 4-8-3.500z" fill="#d4d4d4" stroke="#111" stroke-width="1"/><path d="M111 468l8-3.500 8 3-8 3.500z" fill="#f4f4f4"/><path d="M119 471l8-3.500v11l-8 4z" fill="#9a9a9a"/><path d="M129.500 465.500l6 14c-3 3-10 3-13 0z" fill="url(#lgr)" stroke="#111" stroke-width="1"/>
<path d="M140 491v-6l-6.500 6z" fill="#8a8a8a"/>
<path d="M7 516.500l12.500-11 8.500 9.500-9.500 7.500z" fill="#f2cf55" stroke="#111" stroke-width="1.100" stroke-linejoin="round"/><path d="M19.500 505.500l8.500 9.500-9.500 7.500z" fill="#b48a1a"/><path d="M15 501.500l6.500-5.500h5.500v-1h3v7.500h-3v-1.200l-7 3.200z" fill="#fff" stroke="#111" stroke-width="1"/><path d="M16.500 502l5-4.500M18.500 502.500l4.500-4M20.500 503l3.500-3.200" stroke="#111" stroke-width=".8"/><rect x="28" y="495" width="3" height="7.500" fill="#111"/>
<path d="M35 526v-6l-6.500 6z" fill="#8a8a8a"/>
</svg>
<div class="b" style="left:0px;top:566px;width:147px;height:398px;background:#ebecf0;border-radius:7px 7px 0 0"></div>
<div class="b" style="left:46px;top:590px;width:101px;height:25px;background:#d9dbe1;border-radius:0 0 0 6px"></div>
<span class="t" style="left:1.0px;top:569.9px;font-size:15.5px;line-height:15.5px;letter-spacing:-0.67px;color:#6e6f74;">Osnap</span>
<div class="b" style="left:4.5px;top:622px;width:15px;height:15px;background:#fff;border:1px solid #b9c1dc;box-sizing:border-box"></div>
<svg style="left:4.5px;top:622px" width="15" height="15"><path d="M2.5 7.5L6 11.8L12.7 2.8" fill="none" stroke="#222" stroke-width="2.4"/></svg>
<span class="t" style="left:26.5px;top:621.3px;font-size:15.5px;line-height:15.5px;letter-spacing:-2.04px;color:#1a1a1a;">End</span>
<div class="b" style="left:4.5px;top:642.05px;width:15px;height:15px;background:#fff;border:1px solid #b9c1dc;box-sizing:border-box"></div>
<span class="t" style="left:26.5px;top:641.3px;font-size:15.5px;line-height:15.5px;letter-spacing:-0.70px;color:#1a1a1a;">Near</span>
<div class="b" style="left:4.5px;top:662.1px;width:15px;height:15px;background:#fff;border:1px solid #b9c1dc;box-sizing:border-box"></div>
<span class="t" style="left:26.5px;top:661.4px;font-size:15.5px;line-height:15.5px;letter-spacing:-0.71px;color:#1a1a1a;">Point</span>
<div class="b" style="left:4.5px;top:682.15px;width:15px;height:15px;background:#fff;border:1px solid #b9c1dc;box-sizing:border-box"></div>
<svg style="left:4.5px;top:682.15px" width="15" height="15"><path d="M2.5 7.5L6 11.8L12.7 2.8" fill="none" stroke="#222" stroke-width="2.4"/></svg>
<span class="t" style="left:26.5px;top:681.4px;font-size:15.5px;line-height:15.5px;letter-spacing:-0.24px;color:#1a1a1a;">Mid</span>
<div class="b" style="left:4.5px;top:702.2px;width:15px;height:15px;background:#fff;border:1px solid #b9c1dc;box-sizing:border-box"></div>
<svg style="left:4.5px;top:702.2px" width="15" height="15"><path d="M2.5 7.5L6 11.8L12.7 2.8" fill="none" stroke="#222" stroke-width="2.4"/></svg>
<span class="t" style="left:26.5px;top:701.5px;font-size:15.5px;line-height:15.5px;letter-spacing:-1.97px;color:#1a1a1a;">Cen</span>
<div class="b" style="left:4.5px;top:722.25px;width:15px;height:15px;background:#fff;border:1px solid #b9c1dc;box-sizing:border-box"></div>
<svg style="left:4.5px;top:722.25px" width="15" height="15"><path d="M2.5 7.5L6 11.8L12.7 2.8" fill="none" stroke="#222" stroke-width="2.4"/></svg>
<span class="t" style="left:26.5px;top:721.5px;font-size:15.5px;line-height:15.5px;letter-spacing:-0.37px;color:#1a1a1a;">Int</span>
<div class="b" style="left:4.5px;top:742.3px;width:15px;height:15px;background:#fff;border:1px solid #b9c1dc;box-sizing:border-box"></div>
<svg style="left:4.5px;top:742.3px" width="15" height="15"><path d="M2.5 7.5L6 11.8L12.7 2.8" fill="none" stroke="#222" stroke-width="2.4"/></svg>
<span class="t" style="left:26.5px;top:741.6px;font-size:15.5px;line-height:15.5px;letter-spacing:-1.41px;color:#1a1a1a;">Perp</span>
<div class="b" style="left:4.5px;top:762.35px;width:15px;height:15px;background:#fff;border:1px solid #b9c1dc;box-sizing:border-box"></div>
<span class="t" style="left:26.5px;top:761.6px;font-size:15.5px;line-height:15.5px;letter-spacing:-1.75px;color:#1a1a1a;">Tan</span>
<div class="b" style="left:4.5px;top:782.4px;width:15px;height:15px;background:#fff;border:1px solid #b9c1dc;box-sizing:border-box"></div>
<span class="t" style="left:26.5px;top:781.7px;font-size:15.5px;line-height:15.5px;letter-spacing:-0.81px;color:#1a1a1a;">Quad</span>
<div class="b" style="left:4.5px;top:802.45px;width:15px;height:15px;background:#fff;border:1px solid #b9c1dc;box-sizing:border-box"></div>
<span class="t" style="left:26.5px;top:801.7px;font-size:15.5px;line-height:15.5px;letter-spacing:-0.46px;color:#1a1a1a;">Knot</span>
<div class="b" style="left:4.5px;top:822.5px;width:15px;height:15px;background:#fff;border:1px solid #b9c1dc;box-sizing:border-box"></div>
<span class="t" style="left:26.5px;top:821.8px;font-size:15.5px;line-height:15.5px;letter-spacing:-0.69px;color:#1a1a1a;">Vertex</span>
<div class="b" style="left:4.5px;top:842.55px;width:15px;height:15px;background:#fff;border:1px solid #b9c1dc;box-sizing:border-box"></div>
<span class="t" style="left:26.5px;top:841.8px;font-size:15.5px;line-height:15.5px;letter-spacing:-0.46px;color:#1a1a1a;">Project</span>
<div class="b" style="left:4.5px;top:862.6px;width:15px;height:15px;background:#fff;border:1px solid #b9c1dc;box-sizing:border-box"></div>
<span class="t" style="left:26.5px;top:861.9px;font-size:15.5px;line-height:15.5px;letter-spacing:-0.37px;color:#1a1a1a;">Disable</span>
<svg style="left:0px;top:590px" width="90" height="25"><defs><linearGradient id="ofun" x1="0" x2="1"><stop offset="0" stop-color="#555"/><stop offset=".5" stop-color="#c9c9c9"/><stop offset="1" stop-color="#555"/></linearGradient></defs><circle cx="21.800" cy="12" r="8.700" fill="none" stroke="#4a4a4a" stroke-width="1.100"/><rect x="19.800" y="10" width="4" height="4" fill="#fff" stroke="#111" stroke-width="1.400"/><path d="M24.500 12.200h8.500" stroke="#222" stroke-width="1.200"/><path d="M61 5.800h13.200l-5 6.800v6.400c0 1.200-3.200 1.200-3.200 0v-6.400z" fill="url(#ofun)" stroke="#444" stroke-width=".7" stroke-linejoin="round"/><ellipse cx="67.600" cy="5.800" rx="6.600" ry="1.300" fill="#aaa" stroke="#444" stroke-width=".6"/><path d="M59.500 17.500v2.700h2.700M74 3.800h2.800v2.800" fill="none" stroke="#222" stroke-width="1.100"/></svg>
<svg style="left:126px;top:570px" width="16" height="16" viewBox="-8 -8 16 16"><g fill="#c4c6cc"><rect x="-1.600" y="-7.300" width="3.200" height="14.600" rx=".8" transform="rotate(0)"/><rect x="-1.600" y="-7.300" width="3.200" height="14.600" rx=".8" transform="rotate(45)"/><rect x="-1.600" y="-7.300" width="3.200" height="14.600" rx=".8" transform="rotate(90)"/><rect x="-1.600" y="-7.300" width="3.200" height="14.600" rx=".8" transform="rotate(135)"/><circle r="5"/></g><circle r="2.200" fill="#ebecf0"/></svg>
<div class="b" style="left:151px;top:166px;width:1277px;height:770px;background:#c3cde6"></div>
<svg style="left:0;top:0" width="1917" height="987" viewBox="0 0 1917 987">
<rect x="152" y="167" width="1275" height="768" fill="#9fa6b0"/>
<g shape-rendering="crispEdges" fill="none" stroke-width="1">
<path stroke="#939aa4" d="M152.5 167V935M157.5 167V935M162.5 167V935M167.5 167V935M172.5 167V935M176.5 167V935M181.5 167V935M186.5 167V935M196.5 167V935M201.5 167V935M206.5 167V935M210.5 167V935M215.5 167V935M220.5 167V935M225.5 167V935M230.5 167V935M235.5 167V935M245.5 167V935M249.5 167V935M254.5 167V935M259.5 167V935M264.5 167V935M269.5 167V935M274.5 167V935M279.5 167V935M284.5 167V935M293.5 167V935M298.5 167V935M303.5 167V935M308.5 167V935M313.5 167V935M318.5 167V935M322.5 167V935M327.5 167V935M332.5 167V935M342.5 167V935M347.5 167V935M352.5 167V935M357.5 167V935M361.5 167V935M366.5 167V935M371.5 167V935M376.5 167V935M381.5 167V935M391.5 167V935M396.5 167V935M400.5 167V935M405.5 167V935M410.5 167V935M415.5 167V935M420.5 167V935M425.5 167V935M430.5 167V935M439.5 167V935M444.5 167V935M449.5 167V935M454.5 167V935M459.5 167V935M464.5 167V935M469.5 167V935M473.5 167V935M478.5 167V935M488.5 167V935M493.5 167V935M498.5 167V935M503.5 167V935M508.5 167V935M512.5 167V935M517.5 167V935M522.5 167V935M527.5 167V935M537.5 167V935M542.5 167V935M547.5 167V935M551.5 167V935M556.5 167V935M561.5 167V935M566.5 167V935M571.5 167V935M576.5 167V935M585.5 167V935M590.5 167V935M595.5 167V935M600.5 167V935M605.5 167V935M610.5 167V935M615.5 167V935M620.5 167V935M624.5 167V935M634.5 167V935M639.5 167V935M644.5 167V935M649.5 167V935M654.5 167V935M659.5 167V935M663.5 167V935M668.5 167V935M673.5 167V935M683.5 167V935M688.5 167V935M693.5 167V935M697.5 167V935M702.5 167V935M707.5 167V935M712.5 167V935M717.5 167V935M722.5 167V935M732.5 167V935M736.5 167V935M741.5 167V935M746.5 167V935M751.5 167V935M756.5 167V935M761.5 167V935M766.5 167V935M771.5 167V935M780.5 167V935M785.5 167V935M790.5 167V935M795.5 167V935M800.5 167V935M805.5 167V935M809.5 167V935M814.5 167V935M819.5 167V935M829.5 167V935M834.5 167V935M839.5 167V935M844.5 167V935M848.5 167V935M853.5 167V935M858.5 167V935M863.5 167V935M868.5 167V935M878.5 167V935M883.5 167V935M887.5 167V935M892.5 167V935M897.5 167V935M902.5 167V935M907.5 167V935M912.5 167V935M917.5 167V935M926.5 167V935M931.5 167V935M936.5 167V935M941.5 167V935M946.5 167V935M951.5 167V935M956.5 167V935M960.5 167V935M965.5 167V935M975.5 167V935M980.5 167V935M985.5 167V935M990.5 167V935M995.5 167V935M999.5 167V935M1004.5 167V935M1009.5 167V935M1014.5 167V935M1024.5 167V935M1029.5 167V935M1034.5 167V935M1038.5 167V935M1043.5 167V935M1048.5 167V935M1053.5 167V935M1058.5 167V935M1063.5 167V935M1072.5 167V935M1077.5 167V935M1082.5 167V935M1087.5 167V935M1092.5 167V935M1097.5 167V935M1102.5 167V935M1107.5 167V935M1111.5 167V935M1121.5 167V935M1126.5 167V935M1131.5 167V935M1136.5 167V935M1141.5 167V935M1146.5 167V935M1150.5 167V935M1155.5 167V935M1160.5 167V935M1170.5 167V935M1175.5 167V935M1180.5 167V935M1184.5 167V935M1189.5 167V935M1194.5 167V935M1199.5 167V935M1204.5 167V935M1209.5 167V935M1219.5 167V935M1223.5 167V935M1228.5 167V935M1233.5 167V935M1238.5 167V935M1243.5 167V935M1248.5 167V935M1253.5 167V935M1258.5 167V935M1267.5 167V935M1272.5 167V935M1277.5 167V935M1282.5 167V935M1287.5 167V935M1292.5 167V935M1296.5 167V935M1301.5 167V935M1306.5 167V935M1316.5 167V935M1321.5 167V935M1326.5 167V935M1331.5 167V935M1335.5 167V935M1340.5 167V935M1345.5 167V935M1350.5 167V935M1355.5 167V935M1365.5 167V935M1370.5 167V935M1374.5 167V935M1379.5 167V935M1384.5 167V935M1389.5 167V935M1394.5 167V935M1399.5 167V935M1404.5 167V935M1413.5 167V935M1418.5 167V935M1423.5 167V935M152 168.5H1427M152 173.5H1427M152 178.5H1427M152 183.5H1427M152 188.5H1427M152 193.5H1427M152 198.5H1427M152 207.5H1427M152 212.5H1427M152 217.5H1427M152 222.5H1427M152 227.5H1427M152 232.5H1427M152 237.5H1427M152 242.5H1427M152 246.5H1427M152 256.5H1427M152 261.5H1427M152 266.5H1427M152 271.5H1427M152 276.5H1427M152 280.5H1427M152 285.5H1427M152 290.5H1427M152 295.5H1427M152 305.5H1427M152 310.5H1427M152 315.5H1427M152 319.5H1427M152 324.5H1427M152 329.5H1427M152 334.5H1427M152 339.5H1427M152 344.5H1427M152 354.5H1427M152 358.5H1427M152 363.5H1427M152 368.5H1427M152 373.5H1427M152 378.5H1427M152 383.5H1427M152 388.5H1427M152 392.5H1427M152 402.5H1427M152 407.5H1427M152 412.5H1427M152 417.5H1427M152 422.5H1427M152 427.5H1427M152 431.5H1427M152 436.5H1427M152 441.5H1427M152 451.5H1427M152 456.5H1427M152 461.5H1427M152 466.5H1427M152 470.5H1427M152 475.5H1427M152 480.5H1427M152 485.5H1427M152 490.5H1427M152 500.5H1427M152 504.5H1427M152 509.5H1427M152 514.5H1427M152 519.5H1427M152 524.5H1427M152 529.5H1427M152 534.5H1427M152 539.5H1427M152 548.5H1427M152 553.5H1427M152 558.5H1427M152 563.5H1427M152 568.5H1427M152 573.5H1427M152 578.5H1427M152 582.5H1427M152 587.5H1427M152 597.5H1427M152 602.5H1427M152 607.5H1427M152 612.5H1427M152 617.5H1427M152 621.5H1427M152 626.5H1427M152 631.5H1427M152 636.5H1427M152 646.5H1427M152 651.5H1427M152 655.5H1427M152 660.5H1427M152 665.5H1427M152 670.5H1427M152 675.5H1427M152 680.5H1427M152 685.5H1427M152 694.5H1427M152 699.5H1427M152 704.5H1427M152 709.5H1427M152 714.5H1427M152 719.5H1427M152 724.5H1427M152 729.5H1427M152 733.5H1427M152 743.5H1427M152 748.5H1427M152 753.5H1427M152 758.5H1427M152 763.5H1427M152 767.5H1427M152 772.5H1427M152 777.5H1427M152 782.5H1427M152 792.5H1427M152 797.5H1427M152 802.5H1427M152 806.5H1427M152 811.5H1427M152 816.5H1427M152 821.5H1427M152 826.5H1427M152 831.5H1427M152 841.5H1427M152 845.5H1427M152 850.5H1427M152 855.5H1427M152 860.5H1427M152 865.5H1427M152 870.5H1427M152 875.5H1427M152 879.5H1427M152 889.5H1427M152 894.5H1427M152 899.5H1427M152 904.5H1427M152 909.5H1427M152 914.5H1427M152 918.5H1427M152 923.5H1427M152 928.5H1427"/>
<path stroke="#7f858f" d="M191.5 167V935M240.5 167V935M288.5 167V935M337.5 167V935M386.5 167V935M435.5 167V935M483.5 167V935M532.5 167V935M581.5 167V935M629.5 167V935M678.5 167V935M727.5 167V935M775.5 167V935M824.5 167V935M873.5 167V935M922.5 167V935M970.5 167V935M1019.5 167V935M1068.5 167V935M1116.5 167V935M1165.5 167V935M1214.5 167V935M1262.5 167V935M1311.5 167V935M1360.5 167V935M1409.5 167V935M152 203.5H1427M152 251.5H1427M152 300.5H1427M152 349.5H1427M152 397.5H1427M152 446.5H1427M152 495.5H1427M152 543.5H1427M152 592.5H1427M152 641.5H1427M152 690.5H1427M152 738.5H1427M152 787.5H1427M152 836.5H1427M152 884.5H1427M152 933.5H1427"/>
<path stroke="#4b9150" stroke-width="2" d="M533 167V251"/>
<path stroke="#8f3b3b" stroke-width="2" d="M1134 739H1427"/>
</g>
<g fill="none" stroke-linejoin="round" stroke-linecap="round">
<filter id="rough" x="520" y="240" width="620" height="510" filterUnits="userSpaceOnUse"><feTurbulence type="fractalNoise" baseFrequency="0.8" numOctaves="1" seed="4"/><feDisplacementMap in="SourceGraphic" scale="2.4" xChannelSelector="R" yChannelSelector="G"/></filter>
<g stroke="#ff0000" stroke-width="2.1" filter="url(#rough)">
<path d="M536 273C536.8 271.8 538.7 270.5 541 269.5C543.3 268.5 546.3 267.6 550 267C553.7 266.4 558.3 266.2 563 266C567.7 265.8 573.2 266.2 578 266C582.8 265.8 587.8 265.4 592 265C596.2 264.6 600.2 264 603 263.5C605.8 263 607.3 262 609 262C610.7 262 612 262.3 613 263.5C614 264.7 614.7 267.1 615 269C615.3 270.9 615.5 273.3 615 275C614.5 276.7 613.5 278.1 612 279C610.5 279.9 608.3 280.1 606 280.5C603.7 280.9 600.7 281 598 281.5C595.3 282 592.7 282.7 590 283.5C587.3 284.3 584.7 285.6 582 286.5C579.3 287.4 576.5 288.2 574 289C571.5 289.8 569 290.3 567 291C565 291.7 563.3 292.2 562 293C560.7 293.8 560.3 295.2 559 296C557.7 296.8 555.5 297.3 554 297.5C552.5 297.7 551.3 297.8 550 297C548.7 296.2 547.3 294.5 546 293C544.7 291.5 543.3 289.8 542 288C540.7 286.2 539 283.8 538 282C537 280.2 536.3 278.5 536 277C535.7 275.5 535.2 274.2 536 273Z"/>
<path d="M617 282C617.8 281.1 618.8 280.1 621 279.5C623.2 278.9 626.8 278.5 630 278.5C633.2 278.5 636.7 279.2 640 279.5C643.3 279.8 646.8 280.4 650 280C653.2 279.6 656 278.1 659 277C662 275.9 665.3 274.5 668 273.5C670.7 272.5 673 271.2 675 271C677 270.8 678.8 271.3 680 272.5C681.2 273.7 682 275.9 682.5 278C683 280.1 683.4 283 683 285C682.6 287 681.5 288.9 680 290C678.5 291.1 676.5 291.2 674 291.5C671.5 291.8 667.8 291.9 665 292C662.2 292.1 659.5 291.8 657 292C654.5 292.2 651.8 292.8 650 293.5C648.2 294.2 647.7 295.7 646 296C644.3 296.3 641.7 295.7 640 295.5C638.3 295.3 637.5 294.7 636 295C634.5 295.3 632.7 297 631 297.5C629.3 298 627.5 298.4 626 298C624.5 297.6 623.2 296.3 622 295C620.8 293.7 619.9 291.7 619 290C618.1 288.3 616.8 286.3 616.5 285C616.2 283.7 616.2 282.9 617 282Z"/>
<path d="M685.5 266.5C686.2 265.8 688.1 265.6 690 265.5C691.9 265.4 694.5 265.9 697 266C699.5 266.1 702.5 265.9 705 266C707.5 266.1 709.8 266.4 712 266.5C714.2 266.6 716.2 266.8 718 266.5C719.8 266.2 721 265.4 723 264.5C725 263.6 727.7 262.1 730 261C732.3 259.9 735 258.8 737 258C739 257.2 740.7 256.5 742 256.5C743.3 256.5 744.2 257.1 745 258C745.8 258.9 746.5 260.3 747 262C747.5 263.7 748 266.2 748 268C748 269.8 747.7 271.6 747 273C746.3 274.4 745.2 275.8 744 276.5C742.8 277.2 741.5 277.5 740 277.5C738.5 277.5 736.8 276.8 735 276.5C733.2 276.2 731 275.7 729 275.5C727 275.3 724.8 275.2 723 275.5C721.2 275.8 719.5 276.3 718 277C716.5 277.7 715.3 278.9 714 279.5C712.7 280.1 711.3 280.6 710 280.5C708.7 280.4 707.3 279.4 706 279C704.7 278.6 703.3 277.8 702 278C700.7 278.2 699.5 279.5 698 280C696.5 280.5 694.5 281.2 693 281C691.5 280.8 690.1 280 689 279C687.9 278 687.1 276.5 686.5 275C685.9 273.5 685.7 271.4 685.5 270C685.3 268.6 684.8 267.2 685.5 266.5Z"/>
<path d="M688 291C689.3 289.8 691.3 289.5 694 289C696.7 288.5 700.3 288.1 704 288C707.7 287.9 712 288.5 716 288.5C720 288.5 724 288.3 728 288C732 287.7 736.5 287.1 740 286.5C743.5 285.9 746.5 284.9 749 284.5C751.5 284.1 753.4 283.7 755 284C756.6 284.3 757.7 285.2 758.5 286.5C759.3 287.8 759.9 290.1 760 292C760.1 293.9 759.8 296.4 759 298C758.2 299.6 756.8 300.7 755 301.5C753.2 302.3 750.5 302.4 748 303C745.5 303.6 742.7 304.3 740 305C737.3 305.7 734.7 306.3 732 307C729.3 307.7 726.7 308.2 724 309C721.3 309.8 718.7 310.7 716 311.5C713.3 312.3 710.5 313.2 708 314C705.5 314.8 702.8 315.8 701 316C699.2 316.2 698.1 316 697 315C695.9 314 695.5 311.7 694.5 310C693.5 308.3 692.2 306.6 691 305C689.8 303.4 687.8 302 687 300.5C686.2 299 685.8 297.6 686 296C686.2 294.4 686.7 292.2 688 291Z"/>
<path d="M535.5 389C535.8 387.7 535.9 385.4 537 384C538.1 382.6 539.8 381.4 542 380.5C544.2 379.6 547.2 378.7 550 378.5C552.8 378.3 556.5 379.3 559 379.5C561.5 379.7 563.2 380.1 565 379.5C566.8 378.9 568.3 377.8 569.5 376C570.7 374.2 571.3 371.3 572 369C572.7 366.7 572.7 363.8 573.5 362C574.3 360.2 574.9 359.4 577 358.5C579.1 357.6 582.5 357.1 586 356.5C589.5 355.9 594 355.6 598 355C602 354.4 606.3 353.4 610 353C613.7 352.6 617.2 352.3 620 352.5C622.8 352.7 625.3 352.9 627 354C628.7 355.1 629.2 357.3 630 359C630.8 360.7 631.2 362.6 632 364C632.8 365.4 634.2 366.5 635 367.5C635.8 368.5 637.3 369.2 637 370C636.7 370.8 634.1 371.7 633 372.5C631.9 373.3 630.7 374 630.5 375C630.3 376 631.1 377.6 632 378.5C632.9 379.4 634 380 636 380.5C638 381 641 381.2 644 381.5C647 381.8 650.7 382.2 654 382C657.3 381.8 661 381.2 664 380.5C667 379.8 669.8 378.8 672 378C674.2 377.2 675.7 375.7 677 375.5C678.3 375.3 679.2 375.9 680 377C680.8 378.1 681.3 380.2 682 382C682.7 383.8 683.8 386.3 684 388C684.2 389.7 684.2 391.2 683 392C681.8 392.8 679.5 392.7 677 393C674.5 393.3 671.2 393.5 668 394C664.8 394.5 661.3 395.2 658 396C654.7 396.8 651.3 397.6 648 398.5C644.7 399.4 641.3 400.7 638 401.5C634.7 402.3 631.3 402.9 628 403.5C624.7 404.1 621.3 404.8 618 405C614.7 405.2 611.3 405 608 405C604.7 405 601 405.1 598 405C595 404.9 591.8 405.2 590 404.5C588.2 403.8 588 402.2 587 401C586 399.8 585.5 398 584 397C582.5 396 580 395.6 578 395C576 394.4 573.8 393.9 572 393.5C570.2 393.1 568.7 392.3 567 392.5C565.3 392.7 563.8 393.6 562 394.5C560.2 395.4 558.2 397.2 556 398C553.8 398.8 551.3 399.3 549 399.5C546.7 399.7 543.9 399.6 542 399C540.1 398.4 538.6 397.2 537.5 396C536.4 394.8 535.8 393.2 535.5 392C535.2 390.8 535.2 390.3 535.5 389Z"/>
<path d="M535.5 497C535.8 495.7 535.9 493.4 537 492C538.1 490.6 539.8 489.4 542 488.5C544.2 487.6 547.2 486.7 550 486.5C552.8 486.3 556.5 487.3 559 487.5C561.5 487.7 563.2 488.1 565 487.5C566.8 486.9 568.3 485.8 569.5 484C570.7 482.2 571.3 479.3 572 477C572.7 474.7 572.7 471.8 573.5 470C574.3 468.2 574.9 467.4 577 466.5C579.1 465.6 582.5 465.1 586 464.5C589.5 463.9 594 463.6 598 463C602 462.4 606.3 461.4 610 461C613.7 460.6 617.2 460.3 620 460.5C622.8 460.7 625.3 460.9 627 462C628.7 463.1 629.2 465.3 630 467C630.8 468.7 631.2 470.6 632 472C632.8 473.4 634.2 474.5 635 475.5C635.8 476.5 637.3 477.2 637 478C636.7 478.8 634.1 479.7 633 480.5C631.9 481.3 630.7 482 630.5 483C630.3 484 631.1 485.6 632 486.5C632.9 487.4 634 488 636 488.5C638 489 641 489.2 644 489.5C647 489.8 650.7 490.2 654 490C657.3 489.8 661 489.2 664 488.5C667 487.8 669.8 486.8 672 486C674.2 485.2 675.7 483.7 677 483.5C678.3 483.3 679.2 483.9 680 485C680.8 486.1 681.3 488.2 682 490C682.7 491.8 683.8 494.3 684 496C684.2 497.7 684.2 499.2 683 500C681.8 500.8 679.5 500.7 677 501C674.5 501.3 671.2 501.5 668 502C664.8 502.5 661.3 503.2 658 504C654.7 504.8 651.3 505.6 648 506.5C644.7 507.4 641.3 508.7 638 509.5C634.7 510.3 631.3 510.9 628 511.5C624.7 512.1 621.3 512.8 618 513C614.7 513.2 611.3 513 608 513C604.7 513 601 513.1 598 513C595 512.9 591.8 513.2 590 512.5C588.2 511.8 588 510.2 587 509C586 507.8 585.5 506 584 505C582.5 504 580 503.6 578 503C576 502.4 573.8 501.9 572 501.5C570.2 501.1 568.7 500.3 567 500.5C565.3 500.7 563.8 501.6 562 502.5C560.2 503.4 558.2 505.2 556 506C553.8 506.8 551.3 507.3 549 507.5C546.7 507.7 543.9 507.6 542 507C540.1 506.4 538.6 505.2 537.5 504C536.4 502.8 535.8 501.2 535.5 500C535.2 498.8 535.2 498.3 535.5 497Z"/>
<path d="M535.5 336C535.8 334.7 535.9 332.4 537 331C538.1 329.6 539.8 328.4 542 327.5C544.2 326.6 547.2 325.7 550 325.5C552.8 325.3 556.5 326.3 559 326.5C561.5 326.7 563.2 327.1 565 326.5C566.8 325.9 568.3 324.8 569.5 323C570.7 321.2 571.3 318.3 572 316C572.7 313.7 572.7 310.8 573.5 309C574.3 307.2 574.9 306.4 577 305.5C579.1 304.6 582.5 304.1 586 303.5C589.5 302.9 594 302.6 598 302C602 301.4 606.3 300.4 610 300C613.7 299.6 617.2 299.3 620 299.5C622.8 299.7 625.5 299.6 627 301C628.5 302.4 628.3 305.8 629 308C629.7 310.2 630.4 312.5 631 314C631.6 315.5 632.6 316.1 632.5 317C632.4 317.9 630.8 318.5 630.5 319.5C630.2 320.5 630.4 321.9 631 323C631.6 324.1 633.2 325.2 634 326C634.8 326.8 634.3 327.1 636 327.5C637.7 327.9 641 328.2 644 328.5C647 328.8 650.7 329.2 654 329C657.3 328.8 661 328.2 664 327.5C667 326.8 669.8 325.8 672 325C674.2 324.2 675.7 322.7 677 322.5C678.3 322.3 679.2 322.9 680 324C680.8 325.1 681.3 327.2 682 329C682.7 330.8 683.8 333.3 684 335C684.2 336.7 684.2 338.2 683 339C681.8 339.8 679.5 339.7 677 340C674.5 340.3 671.2 340.5 668 341C664.8 341.5 661.3 342.2 658 343C654.7 343.8 651.3 344.6 648 345.5C644.7 346.4 641.3 347.7 638 348.5C634.7 349.3 631.3 349.9 628 350.5C624.7 351.1 621.3 351.8 618 352C614.7 352.2 611.3 352 608 352C604.7 352 601 352.1 598 352C595 351.9 591.8 352.2 590 351.5C588.2 350.8 588 349.2 587 348C586 346.8 585.5 345 584 344C582.5 343 580 342.6 578 342C576 341.4 573.8 340.9 572 340.5C570.2 340.1 568.7 339.3 567 339.5C565.3 339.7 563.8 340.6 562 341.5C560.2 342.4 558.2 344.2 556 345C553.8 345.8 551.3 346.3 549 346.5C546.7 346.7 543.9 346.6 542 346C540.1 345.4 538.6 344.2 537.5 343C536.4 341.8 535.8 340.2 535.5 339C535.2 337.8 535.2 337.3 535.5 336Z"/>
<path d="M535 444C535 443 534.7 442.3 535.5 441C536.3 439.7 537.6 437.2 540 436C542.4 434.8 546.7 433.8 550 433.5C553.3 433.2 557.2 434.6 560 434.5C562.8 434.4 565.3 434.1 567 433C568.7 431.9 569.2 430.2 570 428C570.8 425.8 571 422.2 571.5 420C572 417.8 571.9 416.3 573 415C574.1 413.7 575.5 412.8 578 412C580.5 411.2 584.3 410.7 588 410C591.7 409.3 596.3 408.7 600 408C603.7 407.3 607.3 406.5 610 406C612.7 405.5 613.5 405 616 405C618.5 405 622 405.7 625 406C628 406.3 632.2 406.2 634 407C635.8 407.8 635.3 409.5 636 411C636.7 412.5 637.2 414.5 638 416C638.8 417.5 640.7 418.5 641 420C641.3 421.5 641 423.7 640 425C639 426.3 636.7 427 635 428C633.3 429 630.8 430.1 630 431C629.2 431.9 629.2 432.8 630 433.5C630.8 434.2 633 434.9 635 435.5C637 436.1 639.5 436.6 642 437C644.5 437.4 647.3 437.9 650 438C652.7 438.1 655.3 437.9 658 437.5C660.7 437.1 663.7 436.2 666 435.5C668.3 434.8 670.2 433.8 672 433C673.8 432.2 675.7 430.7 677 430.5C678.3 430.3 679.2 430.8 680 432C680.8 433.2 681.4 436 682 438C682.6 440 683.5 442.3 683.5 444C683.5 445.7 683.9 447.2 682 448C680.1 448.8 675.7 448.2 672 448.5C668.3 448.8 665.3 448.9 660 450C654.7 451.1 646.7 453.5 640 455C633.3 456.5 625.8 458.3 620 459C614.2 459.7 609.2 459.2 605 459C600.8 458.8 597.7 458.5 595 458C592.3 457.5 590.7 457.2 589 456C587.3 454.8 586.5 452.2 585 451C583.5 449.8 582.2 449.2 580 448.5C577.8 447.8 574.3 447.2 572 447C569.7 446.8 568 446.7 566 447C564 447.3 562.2 448.1 560 449C557.8 449.9 555.5 451.7 553 452.5C550.5 453.3 547.3 454.1 545 454C542.7 453.9 540.6 453.2 539 452C537.4 450.8 536.2 448.3 535.5 447C534.8 445.7 535 445 535 444Z"/>
<path d="M535 552C535 551 534.7 550.3 535.5 549C536.3 547.7 537.6 545.2 540 544C542.4 542.8 546.7 541.8 550 541.5C553.3 541.2 557.2 542.6 560 542.5C562.8 542.4 565.3 542.1 567 541C568.7 539.9 569.2 538.2 570 536C570.8 533.8 571 530.2 571.5 528C572 525.8 571.9 524.3 573 523C574.1 521.7 575.5 520.8 578 520C580.5 519.2 584.3 518.7 588 518C591.7 517.3 596.3 516.7 600 516C603.7 515.3 607.3 514.5 610 514C612.7 513.5 613.5 513 616 513C618.5 513 622 513.7 625 514C628 514.3 632.2 514.2 634 515C635.8 515.8 635.3 517.5 636 519C636.7 520.5 637.2 522.5 638 524C638.8 525.5 640.7 526.5 641 528C641.3 529.5 641 531.7 640 533C639 534.3 636.7 535 635 536C633.3 537 630.8 538.1 630 539C629.2 539.9 629.2 540.8 630 541.5C630.8 542.2 633 542.9 635 543.5C637 544.1 639.5 544.6 642 545C644.5 545.4 647.3 545.9 650 546C652.7 546.1 655.3 545.9 658 545.5C660.7 545.1 663.7 544.2 666 543.5C668.3 542.8 670.2 541.8 672 541C673.8 540.2 675.7 538.7 677 538.5C678.3 538.3 679.2 538.8 680 540C680.8 541.2 681.4 544 682 546C682.6 548 683.5 550.3 683.5 552C683.5 553.7 683.9 555.2 682 556C680.1 556.8 675.7 556.2 672 556.5C668.3 556.8 665.3 556.9 660 558C654.7 559.1 646.7 561.5 640 563C633.3 564.5 625.8 566.3 620 567C614.2 567.7 609.2 567.2 605 567C600.8 566.8 597.7 566.5 595 566C592.3 565.5 590.7 565.2 589 564C587.3 562.8 586.5 560.2 585 559C583.5 557.8 582.2 557.2 580 556.5C577.8 555.8 574.3 555.2 572 555C569.7 554.8 568 554.7 566 555C564 555.3 562.2 556.1 560 557C557.8 557.9 555.5 559.7 553 560.5C550.5 561.3 547.3 562.1 545 562C542.7 561.9 540.6 561.2 539 560C537.4 558.8 536.2 556.3 535.5 555C534.8 553.7 535 553 535 552Z"/>
<path d="M685.5 330C686.2 328.2 689.2 326.6 692 325.5C694.8 324.4 698.3 324 702 323.5C705.7 323 710 322.8 714 322.5C718 322.2 722 321.8 726 321.5C730 321.2 734.2 321 738 320.5C741.8 320 745.7 319 749 318.5C752.3 318 755.9 317.2 758 317.5C760.1 317.8 760.6 318.6 761.5 320C762.4 321.4 763.2 324 763.5 326C763.8 328 763.8 330.4 763 332C762.2 333.6 761.2 334.6 759 335.5C756.8 336.4 753.2 336.8 750 337.5C746.8 338.2 743.3 338.8 740 339.5C736.7 340.2 733.3 341.2 730 342C726.7 342.8 723.3 343.6 720 344.5C716.7 345.4 713 346.5 710 347.5C707 348.5 704.2 350.1 702 350.5C699.8 350.9 698.3 350.8 697 350C695.7 349.2 695 347.5 694 346C693 344.5 692.1 342.7 691 341C689.9 339.3 688.4 337.8 687.5 336C686.6 334.2 684.8 331.8 685.5 330Z"/>
<path d="M694 361C695.2 360.7 697.2 361.2 698 362C698.8 362.8 697.8 364.7 699 365.5C700.2 366.3 702.8 366.6 705 367C707.2 367.4 709.8 367.7 712 368C714.2 368.3 716.5 368.2 718 369C719.5 369.8 719.5 371.7 721 372.5C722.5 373.3 725.3 373.3 727 374C728.7 374.7 729.2 376.2 731 376.5C732.8 376.8 735.5 375.3 738 375.5C740.5 375.7 743.3 376.8 746 377.5C748.7 378.2 751 379.2 754 379.5C757 379.8 760.7 379.7 764 379.5C767.3 379.3 770.7 378.9 774 378.5C777.3 378.1 780.8 377.5 784 377C787.2 376.5 790.7 375.5 793 375.5C795.3 375.5 796.8 375.8 798 377C799.2 378.2 799.8 381 800 383C800.2 385 800.2 387.3 799.5 389C798.8 390.7 797.9 392.2 796 393C794.1 393.8 790.7 393.4 788 393.5C785.3 393.6 783 393.4 780 393.5C777 393.6 772.8 394.2 770 394C767.2 393.8 765 392.5 763 392.5C761 392.5 759.5 393.4 758 394C756.5 394.6 756 395.5 754 396C752 396.5 748.7 396.5 746 397C743.3 397.5 741 398.3 738 399C735 399.7 731.3 400.4 728 401C724.7 401.6 721.3 402 718 402.5C714.7 403 711.2 403.6 708 404C704.8 404.4 701.5 405 699 405C696.5 405 694.5 405 693 404C691.5 403 690.9 401 690 399C689.1 397 688.3 394.2 687.5 392C686.7 389.8 685.1 388.2 685 386C684.9 383.8 686.3 381.5 687 379C687.7 376.5 688.3 373.5 689 371C689.7 368.5 690.2 365.7 691 364C691.8 362.3 692.8 361.3 694 361Z"/>
<path d="M772 429C772.5 427.6 775.2 424 777 422C778.8 420 781 418.2 783 417C785 415.8 787.2 414.3 789 414.5C790.8 414.7 792.4 416.2 793.5 418C794.6 419.8 795.6 422.7 795.5 425C795.4 427.3 794.2 430.3 793 432C791.8 433.7 789.7 434.8 788 435C786.3 435.2 784.5 433.8 783 433C781.5 432.2 780.5 430.4 779 430C777.5 429.6 775.2 430.7 774 430.5C772.8 430.3 771.5 430.4 772 429Z"/>
<path d="M800 424C800 421.8 802.5 419.4 804 418C805.5 416.6 807.5 415.5 809 415.5C810.5 415.5 812 416.4 813 418C814 419.6 815 422.7 815 425C815 427.3 814.2 430.4 813 432C811.8 433.6 809.5 434.7 808 434.5C806.5 434.3 805.3 432.8 804 431C802.7 429.2 800 426.2 800 424Z"/>
<path d="M684 433C684.2 431.3 687.2 428.3 688 426C688.8 423.7 688.2 420.7 689 419C689.8 417.3 690.8 417 693 416C695.2 415 698.8 413.8 702 413C705.2 412.2 708.5 411.7 712 411.5C715.5 411.3 719.3 412 723 412C726.7 412 730.3 411.8 734 411.5C737.7 411.2 741.5 410.5 745 410C748.5 409.5 751.8 408.9 755 408.5C758.2 408.1 761.8 407.2 764 407.5C766.2 407.8 767 408.6 768 410C769 411.4 769.8 414 770 416C770.2 418 769.8 420.5 769 422C768.2 423.5 767 424.2 765 425C763 425.8 759.8 425.9 757 426.5C754.2 427.1 750.8 427.8 748 428.5C745.2 429.2 742.7 430.2 740 431C737.3 431.8 734.7 432.7 732 433.5C729.3 434.3 726.3 435.2 724 436C721.7 436.8 718.5 437.3 718 438.5C717.5 439.7 719.8 441.6 721 443C722.2 444.4 723.7 445.7 725 447C726.3 448.3 727.9 449.8 729 451C730.1 452.2 731.5 453.1 731.5 454C731.5 454.9 730.1 456 729 456.3C727.9 456.6 726.3 456.6 725 456C723.7 455.4 722.2 454.3 721 453C719.8 451.7 718.9 449.6 718 448C717.1 446.4 716.3 444.1 715.5 443.5C714.7 442.9 713.9 443.4 713 444.5C712.1 445.6 710.8 448.1 710 450C709.2 451.9 708.8 454.7 708 456C707.2 457.3 705.8 458 705 458C704.2 458 703.4 457.3 703 456C702.6 454.7 702.3 452.2 702.5 450C702.7 447.8 704.8 444.8 704 443C703.2 441.2 699.7 440.2 698 439C696.3 437.8 695.3 436.7 694 436C692.7 435.3 691.2 435 690 435C688.8 435 688 436.3 687 436C686 435.7 683.8 434.7 684 433Z"/>
<path d="M690 472.5C691.1 471.6 692.3 472.9 694 473.5C695.7 474.1 697.7 475.2 700 476C702.3 476.8 705.7 477.4 708 478C710.3 478.6 712.2 478.8 714 479.5C715.8 480.2 717.2 481.4 719 482.5C720.8 483.6 723.5 485.2 725 486C726.5 486.8 727.2 487.7 728 487.5C728.8 487.3 728.7 485.5 730 485C731.3 484.5 733.7 484.2 736 484.5C738.3 484.8 741 486 744 486.5C747 487 750.7 487.3 754 487.5C757.3 487.7 760.7 487.6 764 487.5C767.3 487.4 770.7 487.3 774 487C777.3 486.7 781 486 784 485.5C787 485 790 483.9 792 484C794 484.1 795 484.7 796 486C797 487.3 797.8 489.9 798 492C798.2 494.1 797.8 496.8 797 498.5C796.2 500.2 794.7 501.6 793 502C791.3 502.4 789.2 501.2 787 501C784.8 500.8 782.5 500.4 780 500.5C777.5 500.6 774.3 501.5 772 501.5C769.7 501.5 767.8 500.9 766 500.5C764.2 500.1 762.8 498.8 761 499C759.2 499.2 757.2 500.8 755 501.5C752.8 502.2 750.5 502.4 748 503C745.5 503.6 742.3 504.2 740 505C737.7 505.8 736.3 506.9 734 507.5C731.7 508.1 728.7 508.2 726 508.5C723.3 508.8 720.7 509.1 718 509.5C715.3 509.9 712.7 510.5 710 511C707.3 511.5 704.5 512.2 702 512.5C699.5 512.8 697 513.4 695 513C693 512.6 691.3 511.5 690 510C688.7 508.5 687.8 506 687 504C686.2 502 685.5 499.8 685 498C684.5 496.2 683.9 495 684 493C684.1 491 684.9 488.3 685.5 486C686.1 483.7 686.8 481.2 687.5 479C688.2 476.8 688.9 473.4 690 472.5Z"/>
<path d="M782 451C782.2 449.5 785.7 447.4 788 446C790.3 444.6 793 443.2 796 442.5C799 441.8 803.3 441.6 806 442C808.7 442.4 810.8 443.5 812 445C813.2 446.5 813.5 449.2 813 451C812.5 452.8 811 454.8 809 456C807 457.2 803.7 458.2 801 458.5C798.3 458.8 795.3 458.1 793 457.5C790.7 456.9 788.8 456.1 787 455C785.2 453.9 781.8 452.5 782 451Z"/>
<path d="M800 503C800 501 804 498.7 806 497C808 495.3 810.2 493.3 812 493C813.8 492.7 815.7 493.3 817 495C818.3 496.7 819.8 500.5 820 503C820.2 505.5 819.3 508.2 818 510C816.7 511.8 814 513.7 812 513.5C810 513.3 808 510.8 806 509C804 507.2 800 505 800 503Z"/>
<path d="M687 531.5C688.2 530.6 688.5 530.5 690 530.5C691.5 530.5 693.8 530.9 696 531.5C698.2 532.1 700.7 533 703 534C705.3 535 707.8 536.7 710 537.5C712.2 538.3 714.2 538.4 716 539C717.8 539.6 719.8 539.6 721 541C722.2 542.4 722.3 547.5 723 547.5C723.7 547.5 724 542.3 725 541C726 539.7 727 540 729 539.5C731 539 733.5 538.2 737 538C740.5 537.8 745.3 538.3 750 538.5C754.7 538.7 760 539 765 539C770 539 776.2 538.7 780 538.5C783.8 538.3 785.8 537.8 788 538C790.2 538.2 791.8 538.8 793 540C794.2 541.2 794.8 543.3 795 545C795.2 546.7 794.7 548.6 794 550C793.3 551.4 792.7 552.7 791 553.5C789.3 554.3 786.8 554.7 784 555C781.2 555.3 777 555.6 774 555.5C771 555.4 768.3 555.1 766 554.5C763.7 553.9 762.3 552.3 760 552C757.7 551.7 754.7 552.1 752 552.5C749.3 552.9 746.7 553.8 744 554.5C741.3 555.2 738.3 556.1 736 557C733.7 557.9 732 559.2 730 560C728 560.8 726.7 560.9 724 561.5C721.3 562.1 717.3 562.8 714 563.5C710.7 564.2 707.3 565.3 704 566C700.7 566.7 696.7 567.7 694 567.5C691.3 567.3 689.5 566.4 688 565C686.5 563.6 685.8 561.3 685 559C684.2 556.7 683.7 553.7 683 551C682.3 548.3 681 545.5 681 543C681 540.5 682 537.9 683 536C684 534.1 685.8 532.4 687 531.5Z"/>
<path d="M800 550C801 547.8 802.5 546.5 804 545C805.5 543.5 807.5 541.2 809 541C810.5 540.8 811.8 542.5 813 544C814.2 545.5 815.7 547.7 816 550C816.3 552.3 815.8 555.5 815 558C814.2 560.5 812.5 563.4 811 565C809.5 566.6 807.7 567.5 806 567.5C804.3 567.5 802.3 566.6 801 565C799.7 563.4 798.2 560.5 798 558C797.8 555.5 799 552.2 800 550Z"/>
<path d="M535.5 612C535.7 610.8 535.9 608.5 537 607C538.1 605.5 539.8 603.9 542 603C544.2 602.1 547.2 601.6 550 601.5C552.8 601.4 556.7 602 559 602.5C561.3 603 562.5 604.4 564 604.5C565.5 604.6 567 603.9 568 603C569 602.1 569.5 600.8 570 599C570.5 597.2 571.1 594.3 571 592C570.9 589.7 569.7 586.8 569.5 585C569.3 583.2 568.8 582 570 581C571.2 580 574.3 579.7 577 579C579.7 578.3 582.8 577.7 586 577C589.2 576.3 592.7 575.8 596 575C599.3 574.2 602.7 573.2 606 572.5C609.3 571.8 612.7 571.2 616 571C619.3 570.8 622.7 571.3 626 571.5C629.3 571.7 632.7 572 636 572C639.3 572 642.7 571.7 646 571.5C649.3 571.3 653 571.3 656 571C659 570.7 661.8 569.9 664 569.5C666.2 569.1 667.8 568.1 669 568.5C670.2 568.9 671 570.6 671.5 572C672 573.4 672.4 575.5 672 577C671.6 578.5 670.5 580 669 581C667.5 582 665.2 582.4 663 583C660.8 583.6 657.9 584 656 584.5C654.1 585 652.6 586.1 651.5 586C650.4 585.9 650.2 584.6 649.5 584C648.8 583.4 647.8 582.2 647 582.5C646.2 582.8 646.2 584.8 645 586C643.8 587.2 641.8 588.8 640 590C638.2 591.2 636 592.1 634 593C632 593.9 630 594.7 628 595.5C626 596.3 622.5 597.1 622 598C621.5 598.9 623.3 600 625 601C626.7 602 629.5 603.2 632 604C634.5 604.8 637.5 605.4 640 606C642.5 606.6 644.5 607.5 647 607.5C649.5 607.5 652.5 606.6 655 606C657.5 605.4 660.5 604.8 662 604C663.5 603.2 663 602 664 601C665 600 666.7 598.8 668 598C669.3 597.2 670.8 596 672 596C673.2 596 674.2 596.8 675 598C675.8 599.2 676.5 601.3 677 603C677.5 604.7 678.5 606.7 678 608C677.5 609.3 675.7 610.6 674 611C672.3 611.4 669.7 611.2 668 610.5C666.3 609.8 665.7 607.6 664 607C662.3 606.4 660.3 606.7 658 607C655.7 607.3 652 608.3 650 609C648 609.7 646.8 610 646 611C645.2 612 646 614 645 615C644 616 642.2 616.3 640 617C637.8 617.7 634.7 618.3 632 619C629.3 619.7 626.7 620.4 624 621C621.3 621.6 618.7 622.1 616 622.5C613.3 622.9 610.3 623.6 608 623.5C605.7 623.4 603.3 622.9 602 622C600.7 621.1 600.7 619.3 600 618C599.3 616.7 598.7 615.3 598 614C597.3 612.7 597 610.9 596 610C595 609.1 593.3 608.3 592 608.5C590.7 608.7 589.2 610.2 588 611C586.8 611.8 586.2 613 585 613C583.8 613 582.3 611.8 581 611C579.7 610.2 578.8 608.6 577 608C575.2 607.4 572.2 607.7 570 607.5C567.8 607.3 565.8 606.4 564 607C562.2 607.6 561 609.7 559 611C557 612.3 554.3 614 552 615C549.7 616 547.2 616.8 545 617C542.8 617.2 540.5 616.5 539 616C537.5 615.5 536.6 614.7 536 614C535.4 613.3 535.3 613.2 535.5 612Z"/>
<path d="M679.5 579.5C679.8 578.4 684.6 577.9 688 577C691.4 576.1 696 574.8 700 574C704 573.2 709.2 572.2 712 572.5C714.8 572.8 715.6 574.6 716.5 576C717.4 577.4 718.1 579.2 717.5 581C716.9 582.8 715.1 585.3 713 586.5C710.9 587.7 708 588 705 588C702 588 698.2 587.2 695 586.5C691.8 585.8 688.6 584.7 686 583.5C683.4 582.3 679.2 580.6 679.5 579.5Z"/>
<path d="M720 573C721.4 571.6 725.2 571.2 728 570.5C730.8 569.8 734.8 568.9 737 569C739.2 569.1 740.2 569.8 741 571C741.8 572.2 742.3 574.5 742 576C741.7 577.5 739.3 578.7 739 580C738.7 581.3 740.5 583.1 740 584C739.5 584.9 737.3 585.8 736 585.5C734.7 585.2 733.2 582.4 732 582C730.8 581.6 729.7 582.2 729 583C728.3 583.8 728.8 586.2 728 587C727.2 587.8 725.2 588.3 724 588C722.8 587.7 721.8 586.5 721 585C720.2 583.5 719.7 581 719.5 579C719.3 577 718.6 574.4 720 573Z"/>
<path d="M744 579C744.3 577.3 745.5 575.2 747 574C748.5 572.8 750.8 571.6 753 571.5C755.2 571.4 757.8 572.7 760 573.5C762.2 574.3 764.8 575.3 766 576.5C767.2 577.7 768 579.1 767.5 580.5C767 581.9 764.9 583.8 763 585C761.1 586.2 758.3 587.1 756 587.5C753.7 587.9 750.8 588.1 749 587.5C747.2 586.9 745.8 585.4 745 584C744.2 582.6 743.7 580.7 744 579Z"/>
<path d="M768 581C768 579.8 771.7 578.9 774 578C776.3 577.1 779.3 576.1 782 575.5C784.7 574.9 787.9 574.1 790 574.5C792.1 574.9 793.8 576.6 794.5 578C795.2 579.4 795.2 581.5 794.5 583C793.8 584.5 792.1 586.2 790 587C787.9 587.8 784.7 587.8 782 587.5C779.3 587.2 776.3 586.1 774 585C771.7 583.9 768 582.2 768 581Z"/>
<path d="M680 606C680 603.3 680.2 601.2 681 599C681.8 596.8 683.3 594.5 685 593C686.7 591.5 688.8 590.4 691 590C693.2 589.6 696.2 589.8 698 590.5C699.8 591.2 700.7 592.8 702 594C703.3 595.2 704.3 596.8 706 597.5C707.7 598.2 710.5 597.8 712 598.5C713.5 599.2 714.2 600.6 715 602C715.8 603.4 716.2 606 717 607C717.8 608 719.2 608.7 720 608C720.8 607.3 721 604.7 721.5 603C722 601.3 721.9 599.2 723 598C724.1 596.8 725.8 596.2 728 596C730.2 595.8 733.3 596.5 736 597C738.7 597.5 741.3 598.6 744 599C746.7 599.4 749.3 599.5 752 599.5C754.7 599.5 757 599.3 760 599C763 598.7 766.7 598.1 770 597.5C773.3 596.9 777.3 596 780 595.5C782.7 595 784.4 594.1 786 594.5C787.6 594.9 788.8 596.4 789.5 598C790.2 599.6 790.8 602.2 790.5 604C790.2 605.8 789.2 607.8 788 609C786.8 610.2 785.3 611.2 783 611.5C780.7 611.8 777 611.2 774 611C771 610.8 767.7 610.5 765 610C762.3 609.5 760.2 608.8 758 608C755.8 607.2 753.8 605.9 752 605.5C750.2 605.1 748.3 605.1 747 605.5C745.7 605.9 745.5 607.2 744 608C742.5 608.8 740.3 609.6 738 610.5C735.7 611.4 732.7 612.6 730 613.5C727.3 614.4 724.7 615.2 722 616C719.3 616.8 716.7 617.8 714 618.5C711.3 619.2 708.7 619.8 706 620.5C703.3 621.2 700.7 622 698 622.5C695.3 623 692.3 623.8 690 623.5C687.7 623.2 685.5 622.4 684 621C682.5 619.6 681.7 617.5 681 615C680.3 612.5 680 608.7 680 606Z"/>
<path d="M792 604C792.8 602.5 794.5 602 796 601C797.5 600 799.7 599.2 801 598C802.3 596.8 802.8 594.5 804 594C805.2 593.5 806.8 594 808 595C809.2 596 810 598.3 811 600C812 601.7 813.7 603.2 814 605C814.3 606.8 813.8 609.2 813 611C812.2 612.8 810.3 614.3 809 616C807.7 617.7 806.5 619.8 805 621C803.5 622.2 801.7 623.5 800 623.5C798.3 623.5 796.3 622.2 795 621C793.7 619.8 792.6 617.8 792 616C791.4 614.2 791.5 612 791.5 610C791.5 608 791.2 605.5 792 604Z"/>
<path d="M571 640C571.4 637.8 571.8 636.3 573 635C574.2 633.7 575.5 632.8 578 632C580.5 631.2 584.3 630.7 588 630C591.7 629.3 596.3 628.7 600 628C603.7 627.3 607.3 626.5 610 626C612.7 625.5 613.5 625 616 625C618.5 625 621.8 625.7 625 626C628.2 626.3 632.2 626.5 635 627C637.8 627.5 640.2 628.3 642 629C643.8 629.7 644.7 631.2 646 631C647.3 630.8 648 628.7 650 628C652 627.3 655 627.5 658 627C661 626.5 665.7 625 668 625C670.3 625 671 625.8 672 627C673 628.2 674.3 630.5 674 632C673.7 633.5 672.3 635.3 670 636C667.7 636.7 663 636.3 660 636C657 635.7 654.3 634.8 652 634C649.7 633.2 647.5 631.3 646 631.5C644.5 631.7 643.3 633.6 643 635C642.7 636.4 643.8 638.7 644 640C644.2 641.3 644.7 642 644 643C643.3 644 642 644.9 640 646C638 647.1 634.2 648.3 632 649.5C629.8 650.7 627.2 651.9 627 653C626.8 654.1 629.2 655.2 631 656C632.8 656.8 635.3 657.3 638 658C640.7 658.7 644 659.8 647 660C650 660.2 653.2 660 656 659.5C658.8 659 661.7 657.9 664 657C666.3 656.1 668.3 655.2 670 654C671.7 652.8 672.8 650.4 674 650C675.2 649.6 676 650.3 677 651.5C678 652.7 679.3 655.1 680 657C680.7 658.9 681.3 661.4 681 663C680.7 664.6 679.5 666.1 678 666.5C676.5 666.9 674.3 665.5 672 665.5C669.7 665.5 666.7 666 664 666.5C661.3 667 658.7 667.8 656 668.5C653.3 669.2 650.7 670.2 648 671C645.3 671.8 642.7 672.8 640 673.5C637.3 674.2 634.7 674.8 632 675.5C629.3 676.2 626.7 677 624 677.5C621.3 678 618.7 678.2 616 678.5C613.3 678.8 610.7 679 608 679C605.3 679 602.2 679 600 678.5C597.8 678 596.3 676.8 595 676C593.7 675.2 593.2 673.8 592 673.5C590.8 673.2 589.3 674.6 588 674C586.7 673.4 585.3 671.2 584 670C582.7 668.8 582 667.3 580 666.5C578 665.7 574.7 665.1 572 665C569.3 664.9 566.5 665.2 564 666C561.5 666.8 559.3 668.4 557 669.5C554.7 670.6 552.3 671.9 550 672.5C547.7 673.1 545 673.2 543 673C541 672.8 539.2 672 538 671C536.8 670 535.8 668.5 536 667C536.2 665.5 537.7 663.7 539 662C540.3 660.3 542 658.2 544 657C546 655.8 548.7 655.2 551 655C553.3 654.8 555.8 655.8 558 656C560.2 656.2 562.1 656.7 564 656.5C565.9 656.3 568.4 656.4 569.5 655C570.6 653.6 570.2 650.5 570.5 648C570.8 645.5 570.6 642.2 571 640Z"/>
<path d="M570 698C570 696.5 570.2 694.3 571 693C571.8 691.7 572.8 690.8 575 690C577.2 689.2 580.8 688.7 584 688C587.2 687.3 590.7 686.7 594 686C597.3 685.3 601.3 684.6 604 684C606.7 683.4 607.3 682.9 610 682.5C612.7 682.1 616.7 681.6 620 681.5C623.3 681.4 626.7 681.8 630 682C633.3 682.2 636.7 682.4 640 682.5C643.3 682.6 646.7 682.6 650 682.5C653.3 682.4 657.3 682.3 660 682C662.7 681.7 664.2 680.7 666 680.5C667.8 680.3 669.8 680.1 671 681C672.2 681.9 673.3 684.3 673.5 686C673.7 687.7 672.9 689.8 672 691C671.1 692.2 670 693.1 668 693.5C666 693.9 662.7 693.7 660 693.5C657.3 693.3 654.5 693 652 692.5C649.5 692 646.5 690.4 645 690.5C643.5 690.6 642.8 691.9 643 693C643.2 694.1 646.2 695.7 646 697C645.8 698.3 644 699.8 642 701C640 702.2 636.3 703 634 704C631.7 705 629.5 706.1 628 707C626.5 707.9 624.7 708.5 625 709.5C625.3 710.5 627.8 712 630 713C632.2 714 635.2 714.8 638 715.5C640.8 716.2 644 717.3 647 717.5C650 717.7 653.3 717 656 716.5C658.7 716 660.8 715.6 663 714.5C665.2 713.4 667.3 711.3 669 710C670.7 708.7 671.7 706.7 673 706.5C674.3 706.3 675.9 707.6 677 709C678.1 710.4 679 713 679.5 715C680 717 680.6 719.7 680 721C679.4 722.3 677.7 722.8 676 723C674.3 723.2 671.7 722.5 670 722C668.3 721.5 668 720.2 666 720C664 719.8 660.7 720.3 658 721C655.3 721.7 652 723 650 724C648 725 647.7 726.1 646 727C644.3 727.9 642.3 728.8 640 729.5C637.7 730.2 634.7 730.9 632 731.5C629.3 732.1 626.7 732.5 624 733C621.3 733.5 618.7 734.2 616 734.5C613.3 734.8 610.3 735.1 608 735C605.7 734.9 603.5 734.8 602 734C600.5 733.2 600 731.3 599 730C598 728.7 597.2 726.8 596 726C594.8 725.2 593.3 724.8 592 725C590.7 725.2 589.3 726.9 588 727C586.7 727.1 585.3 726.2 584 725.5C582.7 724.8 582 723.2 580 722.5C578 721.8 574.7 721.7 572 721.5C569.3 721.3 566.3 721 564 721.5C561.7 722 560.2 723.4 558 724.5C555.8 725.6 553.3 727.2 551 728C548.7 728.8 546.2 729.5 544 729.5C541.8 729.5 539.4 728.9 538 728C536.6 727.1 535.7 725.5 535.5 724C535.3 722.5 536.1 720.7 537 719C537.9 717.3 539.3 715.2 541 714C542.7 712.8 544.7 712.2 547 712C549.3 711.8 552.3 712.3 555 712.5C557.7 712.7 560.8 713.2 563 713C565.2 712.8 566.8 712.7 568 711.5C569.2 710.3 569.5 707.6 570 706C570.5 704.4 571 703.3 571 702C571 700.7 570 699.5 570 698Z"/>
<path d="M688 638C689.2 637 691.3 635.2 694 634C696.7 632.8 700.7 631.8 704 631C707.3 630.2 710.7 629.7 714 629.5C717.3 629.3 720.7 630 724 630C727.3 630 730.7 629.8 734 629.5C737.3 629.2 740.7 628.8 744 628.5C747.3 628.2 750.7 627.8 754 627.5C757.3 627.2 761.3 627.2 764 627C766.7 626.8 768.5 626 770 626.5C771.5 627 772.3 628.6 773 630C773.7 631.4 774 633.3 774 635C774 636.7 774 638.7 773 640C772 641.3 770.2 642.2 768 643C765.8 643.8 763 643.8 760 644.5C757 645.2 753.3 646.1 750 647C746.7 647.9 743.3 648.9 740 650C736.7 651.1 732.7 652.5 730 653.5C727.3 654.5 725.5 655 724 656C722.5 657 720.8 658.3 721 659.5C721.2 660.7 723 662.1 725 663C727 663.9 730.5 664.5 733 665C735.5 665.5 738.2 665.5 740 666C741.8 666.5 743 667.2 744 668C745 668.8 746.2 670 746 671C745.8 672 744.7 673.4 743 674C741.3 674.6 738.5 674.2 736 674.5C733.5 674.8 730.7 675.5 728 676C725.3 676.5 722.7 677.1 720 677.5C717.3 677.9 714.3 678.3 712 678.5C709.7 678.7 707.2 679.2 706 678.5C704.8 677.8 705 675.6 705 674C705 672.4 706 670.7 706 669C706 667.3 705.8 665.2 705 664C704.2 662.8 702.5 662.3 701 661.5C699.5 660.7 698 659.8 696 659C694 658.2 691 657.8 689 657C687 656.2 685.1 655.3 684 654C682.9 652.7 682.3 650.7 682.5 649C682.7 647.3 684.2 645.5 685 644C685.8 642.5 686.5 641 687 640C687.5 639 686.8 639 688 638Z"/>
<path d="M774 635C774 633.8 779 633.2 782 632.5C785 631.8 788.7 631.4 792 631C795.3 630.6 799 630.3 802 630C805 629.7 807.8 628.7 810 629C812.2 629.3 813.8 630.5 815 632C816.2 633.5 816.7 636.2 817 638C817.3 639.8 818.2 641.4 817 642.5C815.8 643.6 812.8 644.1 810 644.5C807.2 644.9 803.3 645.2 800 645C796.7 644.8 793 644.3 790 643.5C787 642.7 784.7 641.4 782 640C779.3 638.6 774 636.2 774 635Z"/>
<path d="M681.5 697.5C681.8 696.2 683.2 695.3 685 694.5C686.8 693.7 689.5 693.2 692 692.5C694.5 691.8 697.3 690.8 700 690C702.7 689.2 705.3 688.8 708 688C710.7 687.2 713.3 686.2 716 685.5C718.7 684.8 721 683.9 724 683.5C727 683.1 730.7 683 734 683C737.3 683 740.7 683.4 744 683.5C747.3 683.6 750.7 683.6 754 683.5C757.3 683.4 760.7 683.2 764 683C767.3 682.8 771.3 682.3 774 682C776.7 681.7 778.5 680.5 780 681C781.5 681.5 782.3 683.3 783 685C783.7 686.7 784.5 689.2 784 691C783.5 692.8 781.7 694.8 780 696C778.3 697.2 776.3 697.4 774 698C771.7 698.6 768.7 699 766 699.5C763.3 700 760.7 700.2 758 701C755.3 701.8 752.7 703 750 704C747.3 705 744.5 706.1 742 707C739.5 707.9 736.5 708.7 735 709.5C733.5 710.3 732.8 710.9 733 712C733.2 713.1 734.2 714.8 736 716C737.8 717.2 741.3 718.2 744 719C746.7 719.8 750 720 752 721C754 722 755.5 723.7 756 725C756.5 726.3 756.3 728 755 729C753.7 730 750.8 730.4 748 731C745.2 731.6 741.3 732.1 738 732.5C734.7 732.9 731 733.2 728 733.5C725 733.8 722.2 734.5 720 734.5C717.8 734.5 716.2 734.6 715 733.5C713.8 732.4 713.3 729.9 713 728C712.7 726.1 713.5 723.7 713 722C712.5 720.3 711.5 719 710 718C708.5 717 706 716.7 704 716C702 715.3 700 715 698 714C696 713 693.8 711.3 692 710C690.2 708.7 688.5 707.3 687 706C685.5 704.7 683.9 703.4 683 702C682.1 700.6 681.2 698.8 681.5 697.5Z"/>
<path d="M775 660C775.3 657.3 775.8 655.8 777 654C778.2 652.2 780.2 650.2 782 649C783.8 647.8 786.2 646.6 788 646.5C789.8 646.4 791.7 647.4 793 648.5C794.3 649.6 794.5 651.8 796 653C797.5 654.2 800.3 654.7 802 656C803.7 657.3 804.7 659.3 806 661C807.3 662.7 808.3 664.8 810 666C811.7 667.2 814.8 667.2 816 668C817.2 668.8 817.7 669.8 817 670.5C816.3 671.2 814.2 671.9 812 672.5C809.8 673.1 806.7 673.4 804 674C801.3 674.6 798.3 675.2 796 676C793.7 676.8 792 678 790 678.5C788 679 786 679.3 784 679C782 678.7 779.5 678 778 676.5C776.5 675 775.5 672.8 775 670C774.5 667.2 774.7 662.7 775 660Z"/>
<path d="M784 694.5C784.2 693.3 789 691.9 792 691C795 690.1 798.7 689.5 802 689C805.3 688.5 809.3 687.7 812 688C814.7 688.3 816.8 689.8 818 691C819.2 692.2 819.7 693.5 819.5 695C819.3 696.5 818.6 698.8 817 700C815.4 701.2 812.8 701.9 810 702C807.2 702.1 803.2 701.2 800 700.5C796.8 699.8 793.7 699 791 698C788.3 697 783.8 695.7 784 694.5Z"/>
<path d="M785 723C785.2 721 785.2 717.8 786 716C786.8 714.2 788.7 713.5 790 712C791.3 710.5 792.7 708.3 794 707C795.3 705.7 796.7 704.1 798 704C799.3 703.9 800.7 705.2 802 706.5C803.3 707.8 804.7 710.2 806 712C807.3 713.8 808.7 715.2 810 717C811.3 718.8 812.7 721.3 814 723C815.3 724.7 817.7 726 818 727C818.3 728 817.3 728.7 816 729C814.7 729.3 812 728.8 810 729C808 729.2 806 729.2 804 730C802 730.8 800 732.6 798 733.5C796 734.4 793.8 735.6 792 735.5C790.2 735.4 788.2 734.2 787 733C785.8 731.8 784.8 729.7 784.5 728C784.2 726.3 784.8 725 785 723Z"/>
<path d="M938 555C940.3 555.6 943 555.8 946 556C949 556.2 952.7 556.4 956 556.5C959.3 556.6 963 556.7 966 556.5C969 556.3 971.7 556 974 555.5C976.3 555 978.3 554.2 980 553.5C981.7 552.8 982.7 551.6 984 551.5C985.3 551.4 986.9 551.9 988 553C989.1 554.1 989.9 556.2 990.5 558C991.1 559.8 991.6 562 991.5 564C991.4 566 990.9 568.8 990 570C989.1 571.2 987.7 571.4 986 571.5C984.3 571.6 982.3 570.7 980 570.5C977.7 570.3 974.7 570.3 972 570.5C969.3 570.7 966.7 571.2 964 571.5C961.3 571.8 958.3 571.6 956 572C953.7 572.4 952 573.2 950 574C948 574.8 946.3 575.8 944 576.5C941.7 577.2 939 577.6 936 578C933 578.4 929.3 578.7 926 579C922.7 579.3 919.3 579.8 916 580C912.7 580.2 909.3 580.4 906 580.5C902.7 580.6 898.8 580.6 896 580.5C893.2 580.4 890.8 580.6 889 580C887.2 579.4 886.3 578.2 885 577C883.7 575.8 882.3 574.3 881 573C879.7 571.7 878.3 569.8 877 569C875.7 568.2 874.5 567.7 873 568C871.5 568.3 869.7 569.9 868 571C866.3 572.1 865 573.6 863 574.5C861 575.4 858.3 576.3 856 576.5C853.7 576.7 851 576.2 849 575.5C847 574.8 845.2 573.4 844 572C842.8 570.6 842.1 568.7 842 567C841.9 565.3 842.5 563.4 843.5 562C844.5 560.6 845.9 559.4 848 558.5C850.1 557.6 853.2 556.8 856 556.5C858.8 556.2 862.3 557 865 557C867.7 557 870 557.3 872 556.5C874 555.7 875.7 553.9 877 552C878.3 550.1 879.2 547.3 880 545C880.8 542.7 880.5 539.8 881.5 538C882.5 536.2 883.9 535.2 886 534.5C888.1 533.8 891.3 533.6 894 533.5C896.7 533.4 900.2 533.2 902 534C903.8 534.8 904.7 536.9 905 538C905.3 539.1 903.3 540 904 540.5C904.7 541 907.5 541.2 909 541C910.5 540.8 911.8 538.8 913 539C914.2 539.2 914.7 541.1 916 542C917.3 542.9 919.8 544.7 921 544.5C922.2 544.3 922.7 542.3 923 541C923.3 539.7 922.3 537.6 923 536.5C923.7 535.4 925.8 534.5 927 534.5C928.2 534.5 929.2 535.4 930 536.5C930.8 537.6 931.7 539.4 932 541C932.3 542.6 932.4 544.7 932 546C931.6 547.3 929.5 547.9 929.5 549C929.5 550.1 930.6 551.5 932 552.5C933.4 553.5 935.7 554.4 938 555Z"/>
<path d="M938 605C939.8 605.7 943 605.8 946 606C949 606.2 952.7 606.4 956 606.5C959.3 606.6 963 606.7 966 606.5C969 606.3 971.7 606 974 605.5C976.3 605 978.3 604.2 980 603.5C981.7 602.8 982.7 601.6 984 601.5C985.3 601.4 986.9 601.9 988 603C989.1 604.1 989.9 606.2 990.5 608C991.1 609.8 991.6 612 991.5 614C991.4 616 990.9 618.8 990 620C989.1 621.2 987.7 621.4 986 621.5C984.3 621.6 982.3 620.7 980 620.5C977.7 620.3 974.7 620.3 972 620.5C969.3 620.7 966.7 621.2 964 621.5C961.3 621.8 958.3 621.6 956 622C953.7 622.4 952 623.2 950 624C948 624.8 946.3 625.8 944 626.5C941.7 627.2 939 627.6 936 628C933 628.4 929.3 628.7 926 629C922.7 629.3 919.3 629.8 916 630C912.7 630.2 909.3 630.4 906 630.5C902.7 630.6 898.8 630.6 896 630.5C893.2 630.4 890.8 630.6 889 630C887.2 629.4 886.3 628.2 885 627C883.7 625.8 882.3 624.3 881 623C879.7 621.7 878.3 619.8 877 619C875.7 618.2 874.5 617.7 873 618C871.5 618.3 869.7 619.9 868 621C866.3 622.1 865 623.6 863 624.5C861 625.4 858.3 626.3 856 626.5C853.7 626.7 851 626.2 849 625.5C847 624.8 845.2 623.4 844 622C842.8 620.6 842.1 618.7 842 617C841.9 615.3 842.5 613.4 843.5 612C844.5 610.6 845.9 609.4 848 608.5C850.1 607.6 853.2 606.8 856 606.5C858.8 606.2 862.3 607 865 607C867.7 607 870 607.3 872 606.5C874 605.7 875.7 603.9 877 602C878.3 600.1 879.2 597.2 880 595C880.8 592.8 880.5 590.7 881.5 589C882.5 587.3 883.9 585.9 886 585C888.1 584.1 891.3 583.8 894 583.5C896.7 583.2 900 583.1 902 583.5C904 583.9 904.7 585.7 906 586C907.3 586.3 908.5 585.3 910 585.5C911.5 585.7 913.5 586.2 915 587C916.5 587.8 917.8 590 919 590C920.2 590 921.2 588.1 922 587C922.8 585.9 923.2 584.2 924 583.5C924.8 582.8 926 582.3 927 582.5C928 582.7 929.2 583.2 930 584.5C930.8 585.8 931.3 588.1 932 590C932.7 591.9 933.5 594 934 596C934.5 598 934.3 600.5 935 602C935.7 603.5 936.2 604.3 938 605Z"/>
<path d="M842 720C841.9 718.2 842.5 716.4 843.5 715C844.5 713.6 845.9 712.4 848 711.5C850.1 710.6 853.2 709.8 856 709.5C858.8 709.2 862.3 710 865 710C867.7 710 870.2 710.2 872 709.5C873.8 708.8 874.9 707.6 876 706C877.1 704.4 877.8 702.2 878.5 700C879.2 697.8 879.1 694.8 880 693C880.9 691.2 882 690 884 689C886 688 889 687.4 892 687C895 686.6 898.7 686.7 902 686.5C905.3 686.3 908.8 686.3 912 686C915.2 685.7 918.3 684.8 921 684.5C923.7 684.2 926.2 684.2 928 684.5C929.8 684.8 930.9 684.9 932 686C933.1 687.1 933.8 689.2 934.5 691C935.2 692.8 935.6 694.8 936 697C936.4 699.2 936.3 702.2 937 704C937.7 705.8 938.5 706.9 940 708C941.5 709.1 943.3 709.9 946 710.5C948.7 711.1 952.7 711.3 956 711.5C959.3 711.7 963 711.7 966 711.5C969 711.3 971.7 711 974 710.5C976.3 710 978.3 709.2 980 708.5C981.7 707.8 982.7 706.6 984 706.5C985.3 706.4 986.9 706.9 988 708C989.1 709.1 989.9 711.2 990.5 713C991.1 714.8 991.6 717 991.5 719C991.4 721 990.9 723.8 990 725C989.1 726.2 987.7 726 986 726C984.3 726 982.3 725.2 980 725C977.7 724.8 974.7 724.8 972 725C969.3 725.2 966.7 725.6 964 726C961.3 726.4 958.3 726.9 956 727.5C953.7 728.1 952 728.8 950 729.5C948 730.2 946.3 731.3 944 732C941.7 732.7 939 733.1 936 733.5C933 733.9 929.3 734.2 926 734.5C922.7 734.8 919.3 734.9 916 735C912.7 735.1 909 735 906 735C903 735 900.2 735.2 898 735C895.8 734.8 894.8 734.8 893 734C891.2 733.2 889 731.8 887 730.5C885 729.2 882.7 727.2 881 726C879.3 724.8 878.3 724 877 723.5C875.7 723 874.5 722.6 873 723C871.5 723.4 869.7 724.9 868 726C866.3 727.1 865 728.7 863 729.5C861 730.3 858.3 730.8 856 731C853.7 731.2 851 731.3 849 730.5C847 729.7 845.2 727.8 844 726C842.8 724.2 842.1 721.8 842 720Z"/>
<path d="M842 667.5C841.9 665.7 842.5 663.9 843.5 662.5C844.5 661.1 845.9 659.9 848 659C850.1 658.1 853.2 657.2 856 657C858.8 656.8 862.3 657.5 865 657.5C867.7 657.5 870.2 657.7 872 657C873.8 656.3 874.9 655.1 876 653.5C877.1 651.9 877.8 649.7 878.5 647.5C879.2 645.3 879.1 642.3 880 640.5C880.9 638.7 882 637.5 884 636.5C886 635.5 889 634.9 892 634.5C895 634.1 898.7 634.2 902 634C905.3 633.8 908.8 633.8 912 633.5C915.2 633.2 918.3 632.2 921 632C923.7 631.8 926.2 631.8 928 632C929.8 632.2 930.9 632.4 932 633.5C933.1 634.6 933.8 636.7 934.5 638.5C935.2 640.3 935.6 642.3 936 644.5C936.4 646.7 936.3 649.7 937 651.5C937.7 653.3 938.5 654.4 940 655.5C941.5 656.6 943.3 657.4 946 658C948.7 658.6 952.7 658.8 956 659C959.3 659.2 963 659.2 966 659C969 658.8 971.7 658.5 974 658C976.3 657.5 978.3 656.7 980 656C981.7 655.3 982.7 654.1 984 654C985.3 653.9 986.9 654.4 988 655.5C989.1 656.6 989.9 658.7 990.5 660.5C991.1 662.3 991.6 664.5 991.5 666.5C991.4 668.5 990.9 671.3 990 672.5C989.1 673.7 987.7 673.5 986 673.5C984.3 673.5 982.3 672.7 980 672.5C977.7 672.3 974.7 672.3 972 672.5C969.3 672.7 966.7 673.1 964 673.5C961.3 673.9 958.3 674.4 956 675C953.7 675.6 952 676.2 950 677C948 677.8 946.3 678.8 944 679.5C941.7 680.2 939 680.6 936 681C933 681.4 929.3 681.8 926 682C922.7 682.2 919.3 682.4 916 682.5C912.7 682.6 909 682.5 906 682.5C903 682.5 900.2 682.7 898 682.5C895.8 682.3 894.8 682.2 893 681.5C891.2 680.8 889 679.3 887 678C885 676.7 882.7 674.7 881 673.5C879.3 672.3 878.3 671.5 877 671C875.7 670.5 874.5 670.1 873 670.5C871.5 670.9 869.7 672.4 868 673.5C866.3 674.6 865 676.2 863 677C861 677.8 858.3 678.3 856 678.5C853.7 678.7 851 678.8 849 678C847 677.2 845.2 675.2 844 673.5C842.8 671.8 842.1 669.3 842 667.5Z"/>
<path d="M956.5 585C956.8 583.8 957.6 582.4 959 581.5C960.4 580.6 962.5 579.9 965 579.5C967.5 579.1 970.8 578.9 974 579C977.2 579.1 980.8 579.9 984 580C987.2 580.1 990.2 580 993 579.5C995.8 579 998.5 577.8 1001 577C1003.5 576.2 1005.7 575.7 1008 575C1010.3 574.3 1012.8 573.4 1015 573C1017.2 572.6 1019.3 572 1021 572.5C1022.7 573 1024.2 574.4 1025 576C1025.8 577.6 1025.7 580 1025.5 582C1025.3 584 1024.9 586.4 1024 588C1023.1 589.6 1022 590.8 1020 591.5C1018 592.2 1014.7 592.2 1012 592.5C1009.3 592.8 1006.7 593.1 1004 593.5C1001.3 593.9 998.7 594.5 996 595C993.3 595.5 990.7 596.1 988 596.5C985.3 596.9 982.2 597 980 597.5C977.8 598 976.7 599.1 975 599.5C973.3 599.9 971.7 600.3 970 600C968.3 599.7 966.5 598.7 965 597.5C963.5 596.3 962.2 594.4 961 593C959.8 591.6 958.2 590.3 957.5 589C956.8 587.7 956.2 586.2 956.5 585Z"/>
<path d="M939 688C939 686.4 939.7 684.7 941 683.5C942.3 682.3 944.5 681.5 947 681C949.5 680.5 952.8 680.6 956 680.5C959.2 680.4 962.7 680.5 966 680.5C969.3 680.5 972.7 680.8 976 680.5C979.3 680.2 982.7 679.7 986 679C989.3 678.3 993 677.2 996 676.5C999 675.8 1002 674.6 1004 674.5C1006 674.4 1006.9 674.9 1008 676C1009.1 677.1 1010 679.2 1010.5 681C1011 682.8 1011.2 685.2 1011 687C1010.8 688.8 1010.2 690.8 1009 692C1007.8 693.2 1006.2 693.4 1004 694C1001.8 694.6 998.7 695 996 695.5C993.3 696 990.7 696.5 988 697C985.3 697.5 982.7 698 980 698.5C977.3 699 974.7 699.4 972 700C969.3 700.6 966.7 701.3 964 702C961.3 702.7 958.5 703.3 956 704C953.5 704.7 950.3 706.2 949 706C947.7 705.8 948.8 704.3 948 703C947.2 701.7 945.2 699.7 944 698C942.8 696.3 941.8 694.7 941 693C940.2 691.3 939 689.6 939 688Z"/>
<path d="M1041.5 592C1041.5 589.9 1042.6 588.7 1044 587.5C1045.4 586.3 1048 585.3 1050 585C1052 584.7 1054.2 584.9 1056 585.5C1057.8 586.1 1059.6 587.2 1060.5 588.5C1061.4 589.8 1061.6 591.1 1061.5 593C1061.4 594.9 1060.2 597.5 1060 600C1059.8 602.5 1060.3 605.3 1060.5 608C1060.7 610.7 1061.1 613.3 1061 616C1060.9 618.7 1059.7 621.7 1060 624C1060.3 626.3 1062.2 628 1063 630C1063.8 632 1064.4 633.7 1065 636C1065.6 638.3 1066 641.3 1066.5 644C1067 646.7 1067.8 650 1068 652C1068.2 654 1067.9 653.7 1068 656C1068.1 658.3 1068.2 662.7 1068.5 666C1068.8 669.3 1069.2 672.7 1069.5 676C1069.8 679.3 1070.2 683.2 1070.5 686C1070.8 688.8 1071.8 691.2 1071 693C1070.2 694.8 1068 695.3 1066 696.5C1064 697.7 1061.2 698.8 1059 700C1056.8 701.2 1054.7 702.2 1053 703.5C1051.3 704.8 1050 706.2 1049 708C1048 709.8 1047.2 711.7 1047 714C1046.8 716.3 1047.2 719.5 1047.5 722C1047.8 724.5 1048.1 727.2 1049 729C1049.9 730.8 1051.3 732.2 1053 733C1054.7 733.8 1057.2 734.2 1059 734C1060.8 733.8 1062.7 733.2 1064 732C1065.3 730.8 1066.8 728.8 1067 727C1067.2 725.2 1066 723 1065.5 721C1065 719 1064.1 716.8 1064 715C1063.9 713.2 1065.8 711.5 1065 710C1064.2 708.5 1061.3 707.1 1059 706C1056.7 704.9 1053.2 704.4 1051 703.5C1048.8 702.6 1048 701.4 1046 700.5C1044 699.6 1041.3 698.8 1039 698C1036.7 697.2 1034 696.3 1032 695.5C1030 694.7 1028.1 694.2 1027 693C1025.9 691.8 1025.7 689.8 1025.5 688C1025.3 686.2 1025.2 683.2 1026 682C1026.8 680.8 1029 681.7 1030 681C1031 680.3 1031.5 679.8 1032 678C1032.5 676.2 1032.3 672.7 1033 670C1033.7 667.3 1034.8 664.7 1036 662C1037.2 659.3 1038.8 656.7 1040 654C1041.2 651.3 1042.3 648.3 1043 646C1043.7 643.7 1043.6 642.3 1044 640C1044.4 637.7 1045.2 634.7 1045.5 632C1045.8 629.3 1045.9 626.7 1046 624C1046.1 621.3 1046.1 618.7 1046 616C1045.9 613.3 1045.8 610.7 1045.5 608C1045.2 605.3 1044.7 602.7 1044 600C1043.3 597.3 1041.5 594.1 1041.5 592Z"/>
<path d="M1089.5 591C1089.5 589.2 1090.6 588.5 1092 587.5C1093.4 586.5 1096 585.4 1098 585C1100 584.6 1102.2 584.6 1104 585C1105.8 585.4 1108 586.5 1109 587.5C1110 588.5 1110.2 589.2 1110 591C1109.8 592.8 1108.2 595.5 1108 598C1107.8 600.5 1108.6 603.3 1109 606C1109.4 608.7 1110.3 611.3 1110.5 614C1110.7 616.7 1109.8 619.7 1110 622C1110.2 624.3 1111.2 626 1112 628C1112.8 630 1113.8 631.7 1114.5 634C1115.2 636.3 1115.6 639.3 1116 642C1116.4 644.7 1116.7 647.7 1117 650C1117.3 652.3 1117.5 653.3 1118 656C1118.5 658.7 1119.6 662.7 1120 666C1120.4 669.3 1120.5 672.7 1120.5 676C1120.5 679.3 1120.4 683.3 1120 686C1119.6 688.7 1119.3 690.2 1118 692C1116.7 693.8 1114.2 695.2 1112 697C1109.8 698.8 1105.7 701.2 1105 703C1104.3 704.8 1106.8 706.2 1108 708C1109.2 709.8 1111 711.8 1112 714C1113 716.2 1113.5 718.7 1114 721C1114.5 723.3 1115.3 726.2 1115 728C1114.7 729.8 1113.5 731 1112 732C1110.5 733 1108 733.8 1106 734C1104 734.2 1101.7 734 1100 733C1098.3 732 1096.7 730.2 1096 728C1095.3 725.8 1095.9 722.7 1096 720C1096.1 717.3 1096.5 714.5 1096.5 712C1096.5 709.5 1096.8 707 1096 705C1095.2 703 1093.7 701.3 1092 700C1090.3 698.7 1088.3 697.9 1086 697C1083.7 696.1 1080.2 695.2 1078 694.5C1075.8 693.8 1074 694.1 1073 693C1072 691.9 1072.1 690 1072 688C1071.9 686 1072.3 683 1072.5 681C1072.7 679 1072.1 677 1073 676C1073.9 675 1076.8 675.8 1078 675C1079.2 674.2 1079.8 672.5 1080 671C1080.2 669.5 1079.2 667.8 1079.5 666C1079.8 664.2 1080.8 662 1081.5 660C1082.2 658 1083.2 655.4 1084 654C1084.8 652.6 1086.5 651.7 1086 651.5C1085.5 651.3 1082.6 652.9 1081 653C1079.4 653.1 1077.3 652.8 1076.5 652C1075.7 651.2 1075.6 649.1 1076 648C1076.4 646.9 1077.8 645.8 1079 645.5C1080.2 645.2 1082.2 645.2 1083 646C1083.8 646.8 1083.2 649.3 1084 650C1084.8 650.7 1087.2 650.3 1088 650C1088.8 649.7 1088.5 649 1089 648C1089.5 647 1090.3 645.7 1091 644C1091.7 642.3 1092.5 640.3 1093 638C1093.5 635.7 1093.8 632.7 1094 630C1094.2 627.3 1094.5 624.7 1094.5 622C1094.5 619.3 1094.2 616.7 1094 614C1093.8 611.3 1093.8 608.7 1093.5 606C1093.2 603.3 1092.7 600.5 1092 598C1091.3 595.5 1089.5 592.8 1089.5 591Z"/>
<ellipse cx="623" cy="264.5" rx="6" ry="4.5"/>
<ellipse cx="636.5" cy="263" rx="4.5" ry="7"/>
<ellipse cx="647.5" cy="263" rx="4.5" ry="7"/>
<ellipse cx="657" cy="264" rx="4" ry="6"/>
<ellipse cx="667" cy="263" rx="4" ry="6.5"/>
<ellipse cx="676" cy="264" rx="3.5" ry="6"/>
<ellipse cx="700" cy="270.5" rx="1.5" ry="1.5"/>
<ellipse cx="753.5" cy="259" rx="4.7" ry="4.7"/>
<ellipse cx="772.5" cy="261" rx="3.5" ry="5.5"/>
<ellipse cx="781.5" cy="263" rx="3.5" ry="5.5"/>
<ellipse cx="754" cy="273.5" rx="4" ry="7"/>
<ellipse cx="763.5" cy="273" rx="4" ry="7.5"/>
<ellipse cx="772.5" cy="274.5" rx="3.5" ry="6"/>
<ellipse cx="781.5" cy="275.5" rx="4" ry="5.5"/>
<ellipse cx="766.5" cy="289.5" rx="4" ry="5.5"/>
<ellipse cx="778" cy="290" rx="4" ry="6.5"/>
<ellipse cx="790" cy="291" rx="5" ry="6.5"/>
<ellipse cx="802" cy="290" rx="4.5" ry="6.5"/>
<ellipse cx="813.5" cy="290.5" rx="5" ry="7"/>
<ellipse cx="767" cy="306.5" rx="5" ry="8.5"/>
<ellipse cx="778.5" cy="306.5" rx="5" ry="8.5"/>
<ellipse cx="790.5" cy="309" rx="5" ry="8.5"/>
<ellipse cx="802.5" cy="307" rx="4.5" ry="8.5"/>
<ellipse cx="813.5" cy="308" rx="4.5" ry="8"/>
<ellipse cx="771" cy="327" rx="5.5" ry="5"/>
<ellipse cx="784" cy="325" rx="4" ry="7"/>
<ellipse cx="797.5" cy="324.5" rx="4" ry="7"/>
<ellipse cx="811.5" cy="327" rx="5.5" ry="7.5"/>
<ellipse cx="807" cy="372.5" rx="5.5" ry="8.5"/>
<ellipse cx="818.5" cy="367.5" rx="3" ry="3"/>
<ellipse cx="818.5" cy="376" rx="2.5" ry="3"/>
<ellipse cx="820" cy="381" rx="2" ry="3"/>
<ellipse cx="809.5" cy="395" rx="6.5" ry="9.5"/>
<ellipse cx="800.5" cy="409.5" rx="3" ry="3"/>
<ellipse cx="806.5" cy="409" rx="3" ry="3"/>
<ellipse cx="774" cy="410" rx="3.3" ry="3.3"/>
<ellipse cx="689.5" cy="465.5" rx="5" ry="5"/>
<ellipse cx="777" cy="453" rx="5.5" ry="6"/>
<ellipse cx="819" cy="455" rx="3" ry="6.5"/>
<ellipse cx="809" cy="484" rx="10.5" ry="7.5"/>
<ellipse cx="694" cy="523" rx="10.5" ry="6.5"/>
<ellipse cx="716" cy="522.5" rx="9.5" ry="6"/>
<ellipse cx="735" cy="522" rx="9" ry="6.5"/>
<ellipse cx="757" cy="524.5" rx="12" ry="4"/>
<ellipse cx="781" cy="523" rx="9.5" ry="6"/>
<ellipse cx="799" cy="523.5" rx="7" ry="5"/>
<ellipse cx="814" cy="523.5" rx="6.5" ry="5"/>
<ellipse cx="801.5" cy="535" rx="4.5" ry="4.5"/>
<ellipse cx="814" cy="535.5" rx="5.5" ry="4.5"/>
<ellipse cx="808" cy="580.5" rx="11" ry="6.5"/>
<ellipse cx="818.5" cy="592.5" rx="2.8" ry="3.5"/>
<ellipse cx="818.5" cy="600" rx="2.8" ry="3.5"/>
<ellipse cx="818.5" cy="610.5" rx="2.8" ry="3.5"/>
<ellipse cx="818.5" cy="620" rx="2.8" ry="3.5"/>
<ellipse cx="787" cy="684.5" rx="3.5" ry="2.5"/>
<ellipse cx="796" cy="683.5" rx="3" ry="2"/>
<ellipse cx="802.5" cy="684" rx="2.5" ry="2"/>
<ellipse cx="772.3" cy="342.4" rx="6.3" ry="8.8"/>
<ellipse cx="786.2" cy="342" rx="5.3" ry="9.3"/>
<ellipse cx="798.6" cy="342.5" rx="5.3" ry="8.8"/>
<ellipse cx="812.8" cy="344" rx="6.3" ry="7.8"/>
</g>
<g stroke="#0000ff" stroke-width="2.4" filter="url(#rough)">
<path d="M542.5 271.5C541.7 272 538.3 273.4 537.5 274.5C536.7 275.6 536.9 276.6 537.5 278C538.1 279.4 539.8 281.2 541 283C542.2 284.8 543.5 287 545 289C546.5 291 548.2 293.8 550 295C551.8 296.2 554.3 296.2 556 296C557.7 295.8 559.3 293.9 560 293.5"/>
<path d="M620.5 281C622.1 281 626.8 280.8 630 281C633.2 281.2 636.7 282.2 640 282.5C643.3 282.8 647 283.4 650 283C653 282.6 655.5 281 658 280C660.5 279 663.8 277.5 665 277"/>
<path d="M620.5 282C620.6 283 620.6 286.2 621 288C621.4 289.8 622 291.2 623 292.5C624 293.8 625.5 295.5 627 296C628.5 296.5 630.3 295.9 632 295.5C633.7 295.1 634.8 293.7 637 293.5C639.2 293.3 643.7 294.3 645 294.5"/>
<path d="M650 292 L661 291"/>
<path d="M694 269.5C694.7 269.8 697.2 270.1 698 271C698.8 271.9 698.8 273.8 698.5 275C698.2 276.2 697.1 277.9 696 278.5C694.9 279.1 693.1 279.1 692 278.5C690.9 277.9 689.8 276.2 689.5 275C689.2 273.8 689.2 271.9 690 271C690.8 270.1 693.3 269.8 694 269.5"/>
<path d="M727 264C726.3 264.7 724.2 267.1 723 268C721.8 268.9 721.5 269.5 720 269.5C718.5 269.5 715.8 268.2 714 268C712.2 267.8 710.3 267.8 709 268.5C707.7 269.2 706.5 271.1 706 272C705.5 272.9 705.7 273.1 706 274C706.3 274.9 707.2 276.6 708 277.5C708.8 278.4 709.8 279.6 711 279.5C712.2 279.4 713.8 278 715 277C716.2 276 716.7 273.9 718 273.5C719.3 273.1 722.2 274.3 723 274.5"/>
<path d="M702 289.5C700.7 289.7 696 289.9 694 290.5C692 291.1 690.8 291.8 690 293C689.2 294.2 689 296.2 689.5 298C690 299.8 691.8 302 693 304C694.2 306 695.8 308.4 697 310C698.2 311.6 698.5 313.1 700 313.5C701.5 313.9 705 312.7 706 312.5"/>
<path d="M717 289.2 L735 288.5"/>
<path d="M728 305.5 L734 305"/>
<path d="M573 394C573.8 394.2 576.2 395 578 395.5C579.8 396 582.5 396.2 584 397C585.5 397.8 586 399.3 587 400.5C588 401.7 589.5 403.4 590 404"/>
<path d="M573 341C573.8 341.2 576.2 342 578 342.5C579.8 343 582.5 343.2 584 344C585.5 344.8 586 346.3 587 347.5C588 348.7 589.5 350.4 590 351"/>
<path d="M573 502C573.8 502.2 576.2 503 578 503.5C579.8 504 582.5 504.2 584 505C585.5 505.8 586 507.3 587 508.5C588 509.7 589.5 511.4 590 512"/>
<path d="M537.5 492 L542 490.5"/>
<path d="M645 491 L651.5 492"/>
<path d="M573 447.5 L584 449"/>
<path d="M589 456.5 L597 457.5"/>
<path d="M536 554C536.5 553 537.7 549.6 539 548C540.3 546.4 542.2 545.3 544 544.5C545.8 543.7 549 543.2 550 543"/>
<path d="M572 555C573.3 555.1 577.7 554.8 580 555.5C582.3 556.2 584.3 558.3 586 559.5C587.7 560.7 588.7 562 590 562.5C591.3 563 592.5 561.9 594 562.5C595.5 563.1 598.2 565.4 599 566"/>
<path d="M655 557 L669 554"/>
<path d="M639 546 L654 548"/>
<path d="M536 446 L539 441"/>
<path d="M633 434.5 L641 437"/>
<path d="M694 325.5C693.2 326.2 689.7 328.4 689 330C688.3 331.6 689.3 333.3 690 335C690.7 336.7 691.8 338.2 693 340C694.2 341.8 695.7 344.4 697 346C698.3 347.6 699.5 349.2 701 349.5C702.5 349.8 705.2 348.2 706 348"/>
<path d="M723 322 L733 321.2"/>
<path d="M735 321 L741 320.3"/>
<path d="M694.5 416.5C693.9 416.9 691.6 417.6 691 419C690.4 420.4 690.5 423 691 425C691.5 427 692.8 429 694 431C695.2 433 696.3 435.2 698 437C699.7 438.8 701.8 440.4 704 441.5C706.2 442.6 709 443.8 711 443.5C713 443.2 715.2 440.2 716 439.5"/>
<path d="M777 449C777.6 449.5 780.2 450.7 780.5 452C780.8 453.3 779.9 456.1 779 457C778.1 457.9 775.9 458.2 775 457.5C774.1 456.8 773.2 454.4 773.5 453C773.8 451.6 776.4 449.7 777 449"/>
<path d="M790 452C790.7 451.1 792.5 447.7 794 446.5C795.5 445.3 798.2 445.2 799 445"/>
<path d="M812 496C810.5 497.2 803.3 500.7 803 503C802.7 505.3 808.8 508.8 810 510"/>
<path d="M559 611C559.3 610.3 561 608.1 561 607C561 605.9 560.5 605 559 604.5C557.5 604 554.5 603.9 552 604C549.5 604.1 546.2 604.3 544 605C541.8 605.7 540 606.8 539 608C538 609.2 537.8 610.8 538 612C538.2 613.2 538.8 614.8 540 615.5C541.2 616.2 544.2 616.3 545 616.5"/>
<path d="M587.5 578.5C585.9 578.8 580.8 579.9 578 580.5C575.2 581.1 572.3 580.9 571 582C569.7 583.1 569.7 585.2 570 587C570.3 588.8 571.8 591.3 573 593C574.2 594.7 575.5 595.7 577 597C578.5 598.3 580.5 600.2 582 601C583.5 601.8 584.2 601.8 586 602C587.8 602.2 591 601.5 593 602C595 602.5 596.7 603.7 598 605C599.3 606.3 600.3 608.2 601 610C601.7 611.8 601.5 614.2 602 616C602.5 617.8 602.7 619.9 604 621C605.3 622.1 607.3 622.5 610 622.5C612.7 622.5 616.5 621.6 620 621C623.5 620.4 629.2 619.3 631 619"/>
<path d="M570 604C570.8 603.8 573.3 603.3 575 603C576.7 602.7 578.8 601.5 580 602C581.2 602.5 581.3 604.7 582 606C582.7 607.3 584.3 610 584 610C583.7 610 581.7 606.7 580 606C578.3 605.3 575.7 606.1 574 606C572.3 605.9 570.7 605.6 570 605.5"/>
<path d="M622 598.5C622.5 599.1 623.2 600.9 625 602C626.8 603.1 630.5 604.2 633 605C635.5 605.8 638.2 605.7 640 606.5C641.8 607.3 643.1 608.6 644 610C644.9 611.4 645.2 614.2 645.5 615"/>
<path d="M665 602C664.9 602.5 664.1 603.9 664.5 605C664.9 606.1 667 607.9 667.5 608.5"/>
<path d="M815 577C813.8 576.8 810.3 575.3 808 575.5C805.7 575.7 802.5 576.9 801 578C799.5 579.1 798.7 580.8 799 582C799.3 583.2 801.3 584.7 803 585C804.7 585.3 807.3 584.7 809 584C810.7 583.3 813.2 581.8 813 581C812.8 580.2 808.8 579.8 808 579.5"/>
<path d="M571.5 644C571.3 645.2 570.9 649 570.5 651C570.1 653 570.2 655.1 569 656C567.8 656.9 565.2 656.5 563 656.5C560.8 656.5 558.2 656.2 556 656C553.8 655.8 552 654.8 550 655C548 655.2 545.7 655.8 544 657C542.3 658.2 541.2 660.3 540 662C538.8 663.7 537.2 665.7 537 667C536.8 668.3 538.2 669.5 538.5 670"/>
<path d="M564 665C565.3 664.9 569.3 664.5 572 664.5C574.7 664.5 577.8 664.2 580 665C582.2 665.8 583.5 668.2 585 669C586.5 669.8 587.5 670.1 589 670C590.5 669.9 592.5 668.3 594 668.5C595.5 668.7 597 669.8 598 671C599 672.2 599.2 674.8 600 676C600.8 677.2 602.1 677.7 602.5 678"/>
<path d="M626.5 653.5C627.1 654.1 628.1 656.1 630 657C631.9 657.9 635.2 658.3 638 659C640.8 659.7 644 660.9 647 661C650 661.1 653.2 660.1 656 659.5C658.8 658.9 662.7 657.8 664 657.5"/>
<path d="M650 670C650.5 669.4 651.3 667.4 653 666.5C654.7 665.6 657.5 665 660 664.5C662.5 664 666.7 663.7 668 663.5"/>
<path d="M575 691 L581.5 691"/>
<path d="M571.5 699C571.8 700 573.4 703 573.5 705C573.6 707 572.9 709.3 572 711C571.1 712.7 569.7 714.5 568 715C566.3 715.5 564.2 714.3 562 714C559.8 713.7 557.3 713.2 555 713C552.7 712.8 550.2 712.7 548 713C545.8 713.3 543.5 713.8 542 715C540.5 716.2 539.8 718.5 539 720C538.2 721.5 537 722.8 537 724C537 725.2 538.7 726.5 539 727"/>
<path d="M562 721C563.3 720.8 567.3 720.2 570 720C572.7 719.8 575.8 719.5 578 720C580.2 720.5 581.5 722.3 583 723C584.5 723.7 585.8 724.5 587 724C588.2 723.5 588.5 720.5 590 720C591.5 719.5 594.3 720.3 596 721C597.7 721.7 599.2 722.7 600 724C600.8 725.3 600.5 727.5 601 729C601.5 730.5 602.7 732.3 603 733"/>
<path d="M624.5 710C625.4 710.7 627.8 712.9 630 714C632.2 715.1 635.2 715.8 638 716.5C640.8 717.2 644 718.3 647 718.5C650 718.7 653.2 718.1 656 717.5C658.8 716.9 662.7 715.4 664 715"/>
<path d="M647 726C647.3 725.2 647.5 722.2 649 721C650.5 719.8 653.5 719.7 656 719C658.5 718.3 661.8 716.8 664 717C666.2 717.2 668.2 719.5 669 720"/>
<path d="M617 733.5 L619 733.5"/>
<path d="M694 635.5C693.7 636.2 692.2 638.4 692 640C691.8 641.6 693.5 643.2 693 645C692.5 646.8 688.5 649.3 689 651C689.5 652.7 693.5 653.6 696 655C698.5 656.4 701.8 658.2 704 659.5C706.2 660.8 708.3 661.2 709 663C709.7 664.8 708.3 668 708 670C707.7 672 706.7 673.9 707 675C707.3 676.1 708.8 677.3 710 676.5C711.2 675.7 713.2 672.1 714 670C714.8 667.9 714.3 665.2 715 664C715.7 662.8 717.2 662 718 662.5C718.8 663 719 665.4 720 667C721 668.6 722.7 671 724 672C725.3 673 726.3 673 728 673C729.7 673 734 672.8 734 672C734 671.2 729.8 669.4 728 668C726.2 666.6 724.3 665 723 663.5C721.7 662 720.2 660.2 720 659C719.8 657.8 721.7 656.5 722 656"/>
<path d="M741 667C741.5 667.5 744 669 744 670C744 671 742 673 741 673C740 673 738 671 738 670C738 669 740.5 667.5 741 667"/>
<path d="M703 690.5C702.2 690.9 699 691.8 698 693C697 694.2 697.8 696.7 697 698C696.2 699.3 693.7 699.7 693 701C692.3 702.3 692.2 704.5 693 706C693.8 707.5 696.2 708.8 698 710C699.8 711.2 702 712.2 704 713C706 713.8 708.2 714.3 710 715C711.8 715.7 714.2 715.7 715 717C715.8 718.3 714.8 720.8 715 723C715.2 725.2 715.2 728.4 716 730C716.8 731.6 717.7 732.3 720 732.5C722.3 732.7 726.7 731.5 730 731C733.3 730.5 736.7 730 740 729.5C743.3 729 747.5 728.6 750 728C752.5 727.4 754.5 727 755 726C755.5 725 754.7 723.1 753 722C751.3 720.9 747.8 720.3 745 719.5C742.2 718.7 738.2 718.1 736 717C733.8 715.9 732.5 714 732 713C731.5 712 732.8 711.3 733 711"/>
<path d="M686.5 696C687 696.4 689.5 697.7 689.5 698.5C689.5 699.3 687.5 701 686.5 701C685.5 701 683.5 699.3 683.5 698.5C683.5 697.7 686 696.4 686.5 696"/>
<path d="M728 720C728.3 720.7 730 722.7 730 724C730 725.3 728.7 728 728 728C727.3 728 726 725.3 726 724C726 722.7 727.7 720.7 728 720"/>
<path d="M882 576 L887 579.5"/>
<path d="M882 626 L888 630"/>
<path d="M882 676 L890 681.5"/>
<path d="M882 727.5 L894 734"/>
<path d="M920.5 572.3 L928.5 572.3"/>
<path d="M1006 577C1004.7 577.5 1000.7 579.2 998 580C995.3 580.8 993 581.4 990 581.5C987 581.6 983.3 580.8 980 580.5C976.7 580.2 972.8 579.9 970 580C967.2 580.1 964.8 580.2 963 581C961.2 581.8 959.5 583.5 959 585C958.5 586.5 959.2 588.3 960 590C960.8 591.7 962.5 593.6 964 595C965.5 596.4 967.3 598 969 598.5C970.7 599 972.2 598.3 974 598C975.8 597.7 978 596.8 980 596.5C982 596.2 985 596.5 986 596.5"/>
<path d="M999 593 L1003 593"/>
<path d="M949 682.5C948 682.8 944.2 683.4 943 684.5C941.8 685.6 941.7 687.2 942 689C942.3 690.8 943.8 693.1 945 695C946.2 696.9 947.5 699.2 949 700.5C950.5 701.8 952 702.8 954 703C956 703.2 958.7 702 961 701.5C963.3 701 966.8 700.2 968 700"/>
<path d="M965 681.5C966.5 681.8 970.5 683.1 974 683C977.5 682.9 984 681.3 986 681"/>
<path d="M776 424C776.8 423.2 779.3 419.7 781 419C782.7 418.3 785.2 419.8 786 420"/>
<path d="M779 428 L784 431"/>
<path d="M803 419.5C802.6 420.3 800.4 422.9 800.5 424.5C800.6 426.1 803 428.2 803.5 429"/>
<path d="M806 425 L813 425"/>
</g>
<g stroke="#0000ff" stroke-width="2.1">
<path d="M619.7 264.2l2.3 -0.8l2 1.3l2.3 -0.6"/>
<path d="M622.4 261.6h1.2M622.4 267.4h1.2" stroke-width="1.1"/>
<path d="M634 263.1l1.7 -0.8l1.5 1.3l1.7 -0.6"/>
<path d="M635.9 257.6h1.2M635.9 268.4h1.2" stroke-width="1.1"/>
<path d="M645 262.8l1.7 -0.8l1.5 1.3l1.7 -0.6"/>
<path d="M646.9 257.6h1.2M646.9 268.4h1.2" stroke-width="1.1"/>
<path d="M654.8 264.1l1.5 -0.8l1.3 1.3l1.5 -0.6"/>
<path d="M656.4 259.6h1.2M656.4 268.4h1.2" stroke-width="1.1"/>
<path d="M664.8 263.2l1.5 -0.8l1.3 1.3l1.5 -0.6"/>
<path d="M666.4 258.1h1.2M666.4 267.9h1.2" stroke-width="1.1"/>
<path d="M674.1 263.5l1.3 -0.8l1.2 1.3l1.3 -0.6"/>
<path d="M675.4 259.6h1.2M675.4 268.4h1.2" stroke-width="1.1"/>
<path d="M770.6 260.4l1.3 -0.8l1.2 1.3l1.3 -0.6"/>
<path d="M771.9 257.1h1.2M771.9 264.9h1.2" stroke-width="1.1"/>
<path d="M779.6 263.4l1.3 -0.8l1.2 1.3l1.3 -0.6"/>
<path d="M780.9 259.1h1.2M780.9 266.9h1.2" stroke-width="1.1"/>
<path d="M751.8 273.2l1.5 -0.8l1.3 1.3l1.5 -0.6"/>
<path d="M753.4 268.1h1.2M753.4 278.9h1.2" stroke-width="1.1"/>
<path d="M761.3 272.7l1.5 -0.8l1.3 1.3l1.5 -0.6"/>
<path d="M762.9 267.1h1.2M762.9 278.9h1.2" stroke-width="1.1"/>
<path d="M770.6 275.1l1.3 -0.8l1.2 1.3l1.3 -0.6"/>
<path d="M771.9 270.1h1.2M771.9 278.9h1.2" stroke-width="1.1"/>
<path d="M779.3 275.5l1.5 -0.8l1.3 1.3l1.5 -0.6"/>
<path d="M780.9 271.6h1.2M780.9 279.4h1.2" stroke-width="1.1"/>
<path d="M764.3 289.9l1.5 -0.8l1.3 1.3l1.5 -0.6"/>
<path d="M765.9 285.6h1.2M765.9 293.4h1.2" stroke-width="1.1"/>
<path d="M775.8 290l1.5 -0.8l1.3 1.3l1.5 -0.6"/>
<path d="M777.4 285.1h1.2M777.4 294.9h1.2" stroke-width="1.1"/>
<path d="M787.2 291.2l1.9 -0.8l1.6 1.3l1.9 -0.6"/>
<path d="M789.4 286.1h1.2M789.4 295.9h1.2" stroke-width="1.1"/>
<path d="M799.5 289.6l1.7 -0.8l1.5 1.3l1.7 -0.6"/>
<path d="M801.4 285.1h1.2M801.4 294.9h1.2" stroke-width="1.1"/>
<path d="M810.8 290.7l1.9 -0.8l1.6 1.3l1.9 -0.6"/>
<path d="M812.9 285.1h1.2M812.9 295.9h1.2" stroke-width="1.1"/>
<path d="M764.2 306.9l1.9 -0.8l1.6 1.3l1.9 -0.6"/>
<path d="M766.4 299.6h1.2M766.4 313.4h1.2" stroke-width="1.1"/>
<path d="M775.8 306.5l1.9 -0.8l1.6 1.3l1.9 -0.6"/>
<path d="M777.9 299.6h1.2M777.9 313.4h1.2" stroke-width="1.1"/>
<path d="M787.8 309.3l1.9 -0.8l1.6 1.3l1.9 -0.6"/>
<path d="M789.9 302.1h1.2M789.9 315.9h1.2" stroke-width="1.1"/>
<path d="M800 307.2l1.7 -0.8l1.5 1.3l1.7 -0.6"/>
<path d="M801.9 300.1h1.2M801.9 313.9h1.2" stroke-width="1.1"/>
<path d="M811 307.5l1.7 -0.8l1.5 1.3l1.7 -0.6"/>
<path d="M812.9 301.6h1.2M812.9 314.4h1.2" stroke-width="1.1"/>
<path d="M768 327.3l2.1 -0.8l1.8 1.3l2.1 -0.6"/>
<path d="M770.4 323.6h1.2M770.4 330.4h1.2" stroke-width="1.1"/>
<path d="M781.8 325.1l1.5 -0.8l1.3 1.3l1.5 -0.6"/>
<path d="M783.4 319.6h1.2M783.4 330.4h1.2" stroke-width="1.1"/>
<path d="M795.3 324.3l1.5 -0.8l1.3 1.3l1.5 -0.6"/>
<path d="M796.9 319.1h1.2M796.9 329.9h1.2" stroke-width="1.1"/>
<path d="M808.5 326.4l2.1 -0.8l1.8 1.3l2.1 -0.6"/>
<path d="M810.9 321.1h1.2M810.9 332.9h1.2" stroke-width="1.1"/>
<path d="M804 372.9l2.1 -0.8l1.8 1.3l2.1 -0.6"/>
<path d="M806.4 365.6h1.2M806.4 379.4h1.2" stroke-width="1.1"/>
<path d="M816.9 367.5l1.2 -0.8l1 1.3l1.2 -0.6"/>
<path d="M817.9 366.1h1.2M817.9 368.9h1.2" stroke-width="1.1"/>
<path d="M805.9 395.3l2.5 -0.8l2.1 1.3l2.5 -0.6"/>
<path d="M808.9 387.1h1.2M808.9 402.9h1.2" stroke-width="1.1"/>
<path d="M798.9 410l1.2 -0.8l1 1.3l1.2 -0.6"/>
<path d="M799.9 408.1h1.2M799.9 410.9h1.2" stroke-width="1.1"/>
<path d="M804.9 409.3l1.2 -0.8l1 1.3l1.2 -0.6"/>
<path d="M805.9 407.6h1.2M805.9 410.4h1.2" stroke-width="1.1"/>
<path d="M774 453.5l2.1 -0.8l1.8 1.3l2.1 -0.6"/>
<path d="M776.4 448.6h1.2M776.4 457.4h1.2" stroke-width="1.1"/>
<path d="M750.4 524.4l4.6 -0.8l4 1.3l4.6 -0.6"/>
<path d="M756.4 522.1h1.2M756.4 526.9h1.2" stroke-width="1.1"/>
<path d="M810.4 523.9l2.5 -0.8l2.1 1.3l2.5 -0.6"/>
<path d="M813.4 520.1h1.2M813.4 526.9h1.2" stroke-width="1.1"/>
<path d="M811 535.4l2.1 -0.8l1.8 1.3l2.1 -0.6"/>
<path d="M813.4 532.6h1.2M813.4 538.4h1.2" stroke-width="1.1"/>
<path d="M802 581l4.2 -0.8l3.6 1.3l4.2 -0.6"/>
<path d="M807.4 575.6h1.2M807.4 585.4h1.2" stroke-width="1.1"/>
<path d="M768.8 342.9l2.4 -0.8l2.1 1.3l2.4 -0.6"/>
<path d="M771.7 335.2h1.2M771.7 349.6h1.2" stroke-width="1.1"/>
<path d="M783.3 341.5l2 -0.8l1.7 1.3l2 -0.6"/>
<path d="M785.6 334.3h1.2M785.6 349.7h1.2" stroke-width="1.1"/>
<path d="M795.7 342.1l2 -0.8l1.7 1.3l2 -0.6"/>
<path d="M798 335.3h1.2M798 349.7h1.2" stroke-width="1.1"/>
<path d="M809.3 343.7l2.4 -0.8l2.1 1.3l2.4 -0.6"/>
<path d="M812.2 337.8h1.2M812.2 350.2h1.2" stroke-width="1.1"/>
</g>
<g fill="#0000ff" stroke="none">
<ellipse cx="627" cy="285" rx="3.5" ry="2.5"/>
<ellipse cx="635" cy="285" rx="2.5" ry="2.5"/>
<ellipse cx="753.5" cy="259" rx="3.5" ry="3.5"/>
<ellipse cx="774" cy="410" rx="2.5" ry="2.5"/>
<ellipse cx="689.5" cy="465.5" rx="2" ry="2"/>
<ellipse cx="799" cy="449.5" rx="4" ry="4"/>
<ellipse cx="819" cy="446" rx="2.5" ry="2.5"/>
<ellipse cx="819" cy="455" rx="2.2" ry="5"/>
<ellipse cx="716" cy="522.5" rx="7" ry="4"/>
<ellipse cx="799" cy="523.5" rx="5" ry="3.5"/>
<ellipse cx="801.5" cy="535" rx="3" ry="3"/>
<ellipse cx="815" cy="523" rx="3" ry="2"/>
<ellipse cx="771" cy="571" rx="2" ry="1.3"/>
<ellipse cx="778" cy="571" rx="2" ry="1.3"/>
<ellipse cx="784" cy="571" rx="2" ry="1.3"/>
<ellipse cx="789" cy="571" rx="2" ry="1.3"/>
<ellipse cx="793" cy="571" rx="2" ry="1.3"/>
<ellipse cx="818.5" cy="592.5" rx="2" ry="2.5"/>
<ellipse cx="818.5" cy="600" rx="2" ry="2.5"/>
<ellipse cx="818.5" cy="610.5" rx="2" ry="2.5"/>
<ellipse cx="818.5" cy="620" rx="2" ry="2.5"/>
<ellipse cx="819" cy="642.5" rx="2.5" ry="2.5"/>
<ellipse cx="787" cy="684.5" rx="1.8" ry="1"/>
<ellipse cx="796" cy="683.5" rx="1.8" ry="1"/>
<ellipse cx="802.5" cy="684" rx="1.8" ry="1"/>
<ellipse cx="784.5" cy="425" rx="3" ry="2.2"/>
<rect x="549.5" y="327" width="2" height="1.6"/>
<rect x="608.5" y="304.7" width="2" height="1.6"/>
<rect x="608.5" y="346.2" width="2" height="1.6"/>
<rect x="669" y="328.2" width="2" height="1.6"/>
<rect x="549.5" y="380" width="2" height="1.6"/>
<rect x="608.5" y="357.7" width="2" height="1.6"/>
<rect x="608.5" y="399.2" width="2" height="1.6"/>
<rect x="669" y="381.2" width="2" height="1.6"/>
<rect x="549.5" y="488" width="2" height="1.6"/>
<rect x="608.5" y="465.7" width="2" height="1.6"/>
<rect x="608.5" y="507.2" width="2" height="1.6"/>
<rect x="669" y="489.2" width="2" height="1.6"/>
<rect x="549.5" y="434.2" width="2" height="1.6"/>
<rect x="608.5" y="411.2" width="2" height="1.6"/>
<rect x="608.5" y="454.2" width="2" height="1.6"/>
<rect x="669" y="435.7" width="2" height="1.6"/>
<rect x="549.5" y="542.2" width="2" height="1.6"/>
<rect x="608.5" y="519.2" width="2" height="1.6"/>
<rect x="608.5" y="562.2" width="2" height="1.6"/>
<rect x="669" y="543.7" width="2" height="1.6"/>
<rect x="857" y="557.7" width="2" height="1.6"/>
<rect x="975.5" y="556.7" width="2" height="1.6"/>
<rect x="916" y="575.7" width="2" height="1.6"/>
<rect x="857" y="607.7" width="2" height="1.6"/>
<rect x="975.5" y="606.7" width="2" height="1.6"/>
<rect x="916" y="625.7" width="2" height="1.6"/>
<rect x="857" y="659.7" width="2" height="1.6"/>
<rect x="975.5" y="658.7" width="2" height="1.6"/>
<rect x="916" y="677.7" width="2" height="1.6"/>
<rect x="857" y="711.7" width="2" height="1.6"/>
<rect x="975.5" y="710.7" width="2" height="1.6"/>
<rect x="916" y="729.7" width="2" height="1.6"/>
<rect x="1048" y="595.7" width="2" height="1.6"/>
<rect x="1095" y="598.7" width="2" height="1.6"/>
<rect x="1035" y="663.2" width="2" height="1.6"/>
<rect x="1066.5" y="658.7" width="2" height="1.6"/>
<rect x="1055" y="711.7" width="2" height="1.6"/>
<rect x="1056" y="730.2" width="2" height="1.6"/>
<rect x="1084" y="663.2" width="2" height="1.6"/>
<rect x="1115" y="658.7" width="2" height="1.6"/>
<rect x="1096.5" y="717.7" width="2" height="1.6"/>
<rect x="1116" y="691.7" width="2" height="1.6"/>
<rect x="1002" y="689.7" width="2" height="1.6"/>
<rect x="1020.5" y="583.2" width="2" height="1.6"/>
<rect x="739" y="377.2" width="2" height="1.6"/>
<rect x="742" y="394.2" width="2" height="1.6"/>
<rect x="726.5" y="412.2" width="2" height="1.6"/>
<rect x="757.5" y="422.7" width="2" height="1.6"/>
<rect x="696" y="382.2" width="2" height="1.6"/>
<rect x="787.5" y="382.2" width="2" height="1.6"/>
<rect x="744" y="537.7" width="2" height="1.6"/>
<rect x="783" y="548.2" width="2" height="1.6"/>
<rect x="734" y="596.2" width="2" height="1.6"/>
<rect x="785" y="602.2" width="2" height="1.6"/>
<rect x="727" y="685.7" width="2" height="1.6"/>
<rect x="773.5" y="693.2" width="2" height="1.6"/>
<rect x="726" y="631.2" width="2" height="1.6"/>
<rect x="696" y="493.2" width="2" height="1.6"/>
<rect x="785.5" y="493.2" width="2" height="1.6"/>
</g>
<g stroke="#0000ff">
<g stroke-width="1.68" vector-effect="non-scaling-stroke"><path transform="translate(560 270.5) scale(0.950)" d="M.4 1.6C.8 .6 1.6 0 2.5 0C3.8 0 4.6 .9 4.6 2.3C4.6 3.7 3.7 4.6 2.3 4.6C3.9 4.6 4.8 5.7 4.8 7.3C4.8 8.9 3.9 10 2.5 10C1.3 10 .5 9.3 .2 8.2"/><path transform="translate(566.2 270.5) scale(0.950)" d="M1.3 2.1L3.3 0L3.3 10"/><path transform="translate(572.5 270.5) scale(0.950)" d="M.6 5.8L4.4 5.8"/><path transform="translate(578.8 270.5) scale(0.950)" d="M1.3 2.1L3.3 0L3.3 10"/></g>
<g stroke-width="2.17" vector-effect="non-scaling-stroke"><path transform="translate(724 268) scale(0.600)" d="M.3 2.4C.3 .9 1.2 0 2.5 0C3.9 0 4.7 .9 4.7 2.3C4.7 3.8 3.7 5 .2 10L5 10"/><path transform="translate(728.2 268) scale(0.600)" d="M.6 5.8L4.4 5.8"/><path transform="translate(732.5 268) scale(0.600)" d="M.3 2.4C.3 .9 1.2 0 2.5 0C3.9 0 4.7 .9 4.7 2.3C4.7 3.8 3.7 5 .2 10L5 10"/></g>
<g stroke-width="1.68" vector-effect="non-scaling-stroke"><path transform="translate(707 292) scale(0.950)" d="M.4 1.6C.8 .6 1.6 0 2.5 0C3.8 0 4.6 .9 4.6 2.3C4.6 3.7 3.7 4.6 2.3 4.6C3.9 4.6 4.8 5.7 4.8 7.3C4.8 8.9 3.9 10 2.5 10C1.3 10 .5 9.3 .2 8.2"/><path transform="translate(714.1 292) scale(0.950)" d="M.4 1.6C.8 .6 1.6 0 2.5 0C3.8 0 4.6 .9 4.6 2.3C4.6 3.7 3.7 4.6 2.3 4.6C3.9 4.6 4.8 5.7 4.8 7.3C4.8 8.9 3.9 10 2.5 10C1.3 10 .5 9.3 .2 8.2"/><path transform="translate(721.2 292) scale(0.950)" d="M.6 5.8L4.4 5.8"/><path transform="translate(728.2 292) scale(0.950)" d="M.3 2.4C.3 .9 1.2 0 2.5 0C3.9 0 4.7 .9 4.7 2.3C4.7 3.8 3.7 5 .2 10L5 10"/></g>
<g stroke-width="0.61" vector-effect="non-scaling-stroke"><path transform="translate(584 312) scale(2.200)" d="M.3 2.4C.3 .9 1.2 0 2.5 0C3.9 0 4.7 .9 4.7 2.3C4.7 3.8 3.7 5 .2 10L5 10"/><path transform="translate(602 312) scale(2.200)" d="M2.5 0C.9 0 .2 1.6 .2 5C.2 8.4 .9 10 2.5 10C4.1 10 4.8 8.4 4.8 5C4.8 1.6 4.1 0 2.5 0Z"/></g>
<g stroke-width="0.59" vector-effect="non-scaling-stroke"><path transform="translate(586.5 365) scale(2.300)" d="M.3 2.4C.3 .9 1.2 0 2.5 0C3.9 0 4.7 .9 4.7 2.3C4.7 3.8 3.7 5 .2 10L5 10"/><path transform="translate(599 365) scale(2.300)" d="M1.3 2.1L3.3 0L3.3 10"/></g>
<g stroke-width="0.60" vector-effect="non-scaling-stroke"><path transform="translate(598 473.5) scale(2.250)" d="M.3 2.4C.3 .9 1.2 0 2.5 0C3.9 0 4.7 .9 4.7 2.3C4.7 3.8 3.7 5 .2 10L5 10"/><path transform="translate(614.8 473.5) scale(2.250)" d="M.3 2.4C.3 .9 1.2 0 2.5 0C3.9 0 4.7 .9 4.7 2.3C4.7 3.8 3.7 5 .2 10L5 10"/></g>
<g stroke-width="1.45" vector-effect="non-scaling-stroke"><path transform="translate(586 425) scale(1.100)" d="M.3 2.4C.3 .9 1.2 0 2.5 0C3.9 0 4.7 .9 4.7 2.3C4.7 3.8 3.7 5 .2 10L5 10"/><path transform="translate(595.2 425) scale(1.100)" d="M.4 1.6C.8 .6 1.6 0 2.5 0C3.8 0 4.6 .9 4.6 2.3C4.6 3.7 3.7 4.6 2.3 4.6C3.9 4.6 4.8 5.7 4.8 7.3C4.8 8.9 3.9 10 2.5 10C1.3 10 .5 9.3 .2 8.2"/><path transform="translate(604.3 425) scale(1.100)" d="M.6 5.8L4.4 5.8"/><path transform="translate(613.5 425) scale(1.100)" d="M.3 2.4C.3 .9 1.2 0 2.5 0C3.9 0 4.7 .9 4.7 2.3C4.7 3.8 3.7 5 .2 10L5 10"/></g>
<g stroke-width="1.45" vector-effect="non-scaling-stroke"><path transform="translate(585 532.5) scale(1.100)" d="M.3 2.4C.3 .9 1.2 0 2.5 0C3.9 0 4.7 .9 4.7 2.3C4.7 3.8 3.7 5 .2 10L5 10"/><path transform="translate(594.7 532.5) scale(1.100)" d="M3.8 10L3.8 0L.1 7.2L5 7.2"/><path transform="translate(604.3 532.5) scale(1.100)" d="M.6 5.8L4.4 5.8"/><path transform="translate(614 532.5) scale(1.100)" d="M.3 2.4C.3 .9 1.2 0 2.5 0C3.9 0 4.7 .9 4.7 2.3C4.7 3.8 3.7 5 .2 10L5 10"/></g>
<g stroke-width="1.68" vector-effect="non-scaling-stroke"><path transform="translate(710.5 326) scale(0.950)" d="M.4 1.6C.8 .6 1.6 0 2.5 0C3.8 0 4.6 .9 4.6 2.3C4.6 3.7 3.7 4.6 2.3 4.6C3.9 4.6 4.8 5.7 4.8 7.3C4.8 8.9 3.9 10 2.5 10C1.3 10 .5 9.3 .2 8.2"/><path transform="translate(717.8 326) scale(0.950)" d="M.3 2.4C.3 .9 1.2 0 2.5 0C3.9 0 4.7 .9 4.7 2.3C4.7 3.8 3.7 5 .2 10L5 10"/><path transform="translate(725 326) scale(0.950)" d="M.6 5.8L4.4 5.8"/><path transform="translate(732.2 326) scale(0.950)" d="M.3 2.4C.3 .9 1.2 0 2.5 0C3.9 0 4.7 .9 4.7 2.3C4.7 3.8 3.7 5 .2 10L5 10"/></g>
<g stroke-width="1.78" vector-effect="non-scaling-stroke"><path transform="translate(701 382) scale(0.900)" d="M1.3 2.1L3.3 0L3.3 10"/><path transform="translate(707.3 382) scale(0.900)" d="M.4 1.6C.8 .6 1.6 0 2.5 0C3.8 0 4.6 .9 4.6 2.3C4.6 3.7 3.7 4.6 2.3 4.6C3.9 4.6 4.8 5.7 4.8 7.3C4.8 8.9 3.9 10 2.5 10C1.3 10 .5 9.3 .2 8.2"/><path transform="translate(713.7 382) scale(0.900)" d="M.6 5.8L4.4 5.8"/><path transform="translate(720 382) scale(0.900)" d="M1.3 2.1L3.3 0L3.3 10"/></g>
<g stroke-width="1.52" vector-effect="non-scaling-stroke"><path transform="translate(710 416) scale(1.050)" d="M.4 1.6C.8 .6 1.6 0 2.5 0C3.8 0 4.6 .9 4.6 2.3C4.6 3.7 3.7 4.6 2.3 4.6C3.9 4.6 4.8 5.7 4.8 7.3C4.8 8.9 3.9 10 2.5 10C1.3 10 .5 9.3 .2 8.2"/><path transform="translate(717.4 416) scale(1.050)" d="M2.5 0C.9 0 .2 1.6 .2 5C.2 8.4 .9 10 2.5 10C4.1 10 4.8 8.4 4.8 5C4.8 1.6 4.1 0 2.5 0Z"/><path transform="translate(724.8 416) scale(1.050)" d="M.6 5.8L4.4 5.8"/><path transform="translate(732.2 416) scale(1.050)" d="M1.3 2.1L3.3 0L3.3 10"/></g>
<g stroke-width="1.88" vector-effect="non-scaling-stroke"><path transform="translate(705 493) scale(0.850)" d="M1.3 2.1L3.3 0L3.3 10"/><path transform="translate(710.6 493) scale(0.850)" d="M.3 2.4C.3 .9 1.2 0 2.5 0C3.9 0 4.7 .9 4.7 2.3C4.7 3.8 3.7 5 .2 10L5 10"/><path transform="translate(716.2 493) scale(0.850)" d="M.6 5.8L4.4 5.8"/><path transform="translate(721.8 493) scale(0.850)" d="M1.3 2.1L3.3 0L3.3 10"/></g>
<g stroke-width="2.36" vector-effect="non-scaling-stroke"><path transform="translate(801 446.5) scale(0.550)" d="M2.5 4.6C1.3 4.6 .6 3.7 .6 2.4C.6 1 1.4 0 2.5 0C3.6 0 4.4 1 4.4 2.4C4.4 3.7 3.7 4.6 2.5 4.6C1.1 4.6 .2 5.7 .2 7.3C.2 9 1.1 10 2.5 10C3.9 10 4.8 9 4.8 7.3C4.8 5.7 3.9 4.6 2.5 4.6Z"/><path transform="translate(804.1 446.5) scale(0.550)" d="M.6 5.8L4.4 5.8"/><path transform="translate(807.2 446.5) scale(0.550)" d="M.3 2.4C.3 .9 1.2 0 2.5 0C3.9 0 4.7 .9 4.7 2.3C4.7 3.8 3.7 5 .2 10L5 10"/></g>
<g stroke-width="2.17" vector-effect="non-scaling-stroke"><path transform="translate(802 481) scale(0.600)" d="M1.3 2.1L3.3 0L3.3 10"/><path transform="translate(805.3 481) scale(0.600)" d="M2.5 0C.9 0 .2 1.6 .2 5C.2 8.4 .9 10 2.5 10C4.1 10 4.8 8.4 4.8 5C4.8 1.6 4.1 0 2.5 0Z"/><path transform="translate(808.7 481) scale(0.600)" d="M.6 5.8L4.4 5.8"/><path transform="translate(812 481) scale(0.600)" d="M.3 2.4C.3 .9 1.2 0 2.5 0C3.9 0 4.7 .9 4.7 2.3C4.7 3.8 3.7 5 .2 10L5 10"/></g>
<g stroke-width="2.17" vector-effect="non-scaling-stroke"><path transform="translate(689 520) scale(0.600)" d="M2.5 4.6C1.3 4.6 .6 3.7 .6 2.4C.6 1 1.4 0 2.5 0C3.6 0 4.4 1 4.4 2.4C4.4 3.7 3.7 4.6 2.5 4.6C1.1 4.6 .2 5.7 .2 7.3C.2 9 1.1 10 2.5 10C3.9 10 4.8 9 4.8 7.3C4.8 5.7 3.9 4.6 2.5 4.6Z"/><path transform="translate(692.5 520) scale(0.600)" d="M.6 5.8L4.4 5.8"/><path transform="translate(696 520) scale(0.600)" d="M1.3 2.1L3.3 0L3.3 10"/></g>
<g stroke-width="2.17" vector-effect="non-scaling-stroke"><path transform="translate(730 519) scale(0.600)" d="M.2 1L.2 0L4.8 0L2 10M1.9 5L4.3 5"/><path transform="translate(733.5 519) scale(0.600)" d="M.6 5.8L4.4 5.8"/><path transform="translate(737 519) scale(0.600)" d="M.3 2.4C.3 .9 1.2 0 2.5 0C3.9 0 4.7 .9 4.7 2.3C4.7 3.8 3.7 5 .2 10L5 10"/></g>
<g stroke-width="2.17" vector-effect="non-scaling-stroke"><path transform="translate(777 520) scale(0.600)" d="M4.4 .8C3.9 .3 3.3 0 2.7 0C1 0 .2 2 .2 5.5C.2 8.6 1 10 2.5 10C3.9 10 4.8 8.7 4.8 6.9C4.8 5.1 3.9 3.9 2.6 3.9C1.4 3.9 .5 4.9 .2 6.3"/><path transform="translate(780.5 520) scale(0.600)" d="M.6 5.8L4.4 5.8"/><path transform="translate(784 520) scale(0.600)" d="M1.3 2.1L3.3 0L3.3 10"/></g>
<g stroke-width="3.25" vector-effect="non-scaling-stroke"><path transform="translate(705 550.5) scale(0.400)" d="M1.3 2.1L3.3 0L3.3 10"/><path transform="translate(707.7 550.5) scale(0.400)" d="M1.3 2.1L3.3 0L3.3 10"/><path transform="translate(710.3 550.5) scale(0.400)" d="M.6 5.8L4.4 5.8"/><path transform="translate(713 550.5) scale(0.400)" d="M1.3 2.1L3.3 0L3.3 10"/></g>
<g stroke-width="1.86" vector-effect="non-scaling-stroke"><path transform="translate(802 551) scale(0.700)" d="M2.5 4.6C1.3 4.6 .6 3.7 .6 2.4C.6 1 1.4 0 2.5 0C3.6 0 4.4 1 4.4 2.4C4.4 3.7 3.7 4.6 2.5 4.6C1.1 4.6 .2 5.7 .2 7.3C.2 9 1.1 10 2.5 10C3.9 10 4.8 9 4.8 7.3C4.8 5.7 3.9 4.6 2.5 4.6Z"/><path transform="translate(805.2 551) scale(0.700)" d="M.6 5.8L4.4 5.8"/><path transform="translate(808.5 551) scale(0.700)" d="M2.5 0C.9 0 .2 1.6 .2 5C.2 8.4 .9 10 2.5 10C4.1 10 4.8 8.4 4.8 5C4.8 1.6 4.1 0 2.5 0Z"/></g>
<g stroke-width="0.82" vector-effect="non-scaling-stroke"><path transform="translate(590 583.5) scale(1.650)" d="M.3 2.4C.3 .9 1.2 0 2.5 0C3.9 0 4.7 .9 4.7 2.3C4.7 3.8 3.7 5 .2 10L5 10"/><path transform="translate(602.8 583.5) scale(1.650)" d="M.2 1L.2 0L4.8 0L2 10M1.9 5L4.3 5"/></g>
<g stroke-width="1.86" vector-effect="non-scaling-stroke"><path transform="translate(698 578) scale(0.700)" d="M2.5 4.6C1.3 4.6 .6 3.7 .6 2.4C.6 1 1.4 0 2.5 0C3.6 0 4.4 1 4.4 2.4C4.4 3.7 3.7 4.6 2.5 4.6C1.1 4.6 .2 5.7 .2 7.3C.2 9 1.1 10 2.5 10C3.9 10 4.8 9 4.8 7.3C4.8 5.7 3.9 4.6 2.5 4.6Z"/><path transform="translate(702.2 578) scale(0.700)" d="M.6 5.8L4.4 5.8"/><path transform="translate(706.5 578) scale(0.700)" d="M1.3 2.1L3.3 0L3.3 10"/></g>
<g stroke-width="2.60" vector-effect="non-scaling-stroke"><path transform="translate(727 572) scale(0.500)" d="M1.3 2.1L3.3 0L3.3 10"/><path transform="translate(729.5 572) scale(0.500)" d="M2.5 0C.9 0 .2 1.6 .2 5C.2 8.4 .9 10 2.5 10C4.1 10 4.8 8.4 4.8 5C4.8 1.6 4.1 0 2.5 0Z"/><path transform="translate(732 572) scale(0.500)" d="M.6 5.8L4.4 5.8"/><path transform="translate(734.5 572) scale(0.500)" d="M.3 2.4C.3 .9 1.2 0 2.5 0C3.9 0 4.7 .9 4.7 2.3C4.7 3.8 3.7 5 .2 10L5 10"/></g>
<g stroke-width="1.86" vector-effect="non-scaling-stroke"><path transform="translate(748.5 577) scale(0.700)" d="M4.8 3C4.8 1.2 3.9 0 2.5 0C1.1 0 .2 1.2 .2 3C.2 4.8 1.1 6 2.5 6C3.9 6 4.8 4.8 4.8 3L4.8 4.2L1.6 10"/><path transform="translate(752.8 577) scale(0.700)" d="M.6 5.8L4.4 5.8"/><path transform="translate(757 577) scale(0.700)" d="M.3 2.4C.3 .9 1.2 0 2.5 0C3.9 0 4.7 .9 4.7 2.3C4.7 3.8 3.7 5 .2 10L5 10"/></g>
<g stroke-width="1.86" vector-effect="non-scaling-stroke"><path transform="translate(778.5 579) scale(0.700)" d="M4.4 .8C3.9 .3 3.3 0 2.7 0C1 0 .2 2 .2 5.5C.2 8.6 1 10 2.5 10C3.9 10 4.8 8.7 4.8 6.9C4.8 5.1 3.9 3.9 2.6 3.9C1.4 3.9 .5 4.9 .2 6.3"/><path transform="translate(782.5 579) scale(0.700)" d="M.6 5.8L4.4 5.8"/><path transform="translate(786.5 579) scale(0.700)" d="M1.3 2.1L3.3 0L3.3 10"/></g>
<g stroke-width="1.28" vector-effect="non-scaling-stroke"><path transform="translate(692 602) scale(1.250)" d="M1.3 2.1L3.3 0L3.3 10"/><path transform="translate(699.8 602) scale(1.250)" d="M2.5 0C.9 0 .2 1.6 .2 5C.2 8.4 .9 10 2.5 10C4.1 10 4.8 8.4 4.8 5C4.8 1.6 4.1 0 2.5 0Z"/></g>
<g stroke-width="2.60" vector-effect="non-scaling-stroke"><path transform="translate(796 607) scale(0.500)" d="M.2 1L.2 0L4.8 0L2 10M1.9 5L4.3 5"/><path transform="translate(799.8 607) scale(0.500)" d="M.6 5.8L4.4 5.8"/><path transform="translate(803.5 607) scale(0.500)" d="M3.8 10L3.8 0L.1 7.2L5 7.2"/></g>
<g stroke-width="0.61" vector-effect="non-scaling-stroke"><path transform="translate(592.5 644) scale(2.200)" d="M.3 2.4C.3 .9 1.2 0 2.5 0C3.9 0 4.7 .9 4.7 2.3C4.7 3.8 3.7 5 .2 10L5 10"/><path transform="translate(609 644) scale(2.200)" d="M4.6 0L.9 0L.5 4.5C1.1 3.9 1.8 3.6 2.6 3.6C4 3.6 4.8 4.9 4.8 6.7C4.8 8.7 3.9 10 2.5 10C1.3 10 .5 9.3 .2 8.2"/></g>
<g stroke-width="1.39" vector-effect="non-scaling-stroke"><path transform="translate(591 702.5) scale(1.150)" d="M.3 2.4C.3 .9 1.2 0 2.5 0C3.9 0 4.7 .9 4.7 2.3C4.7 3.8 3.7 5 .2 10L5 10"/><path transform="translate(599.2 702.5) scale(1.150)" d="M4.4 .8C3.9 .3 3.3 0 2.7 0C1 0 .2 2 .2 5.5C.2 8.6 1 10 2.5 10C3.9 10 4.8 8.7 4.8 6.9C4.8 5.1 3.9 3.9 2.6 3.9C1.4 3.9 .5 4.9 .2 6.3"/><path transform="translate(607.5 702.5) scale(1.150)" d="M.6 5.8L4.4 5.8"/><path transform="translate(615.8 702.5) scale(1.150)" d="M1.3 2.1L3.3 0L3.3 10"/></g>
<g stroke-width="1.33" vector-effect="non-scaling-stroke"><path transform="translate(699 638) scale(1.200)" d="M.3 2.4C.3 .9 1.2 0 2.5 0C3.9 0 4.7 .9 4.7 2.3C4.7 3.8 3.7 5 .2 10L5 10"/><path transform="translate(706.3 638) scale(1.200)" d="M4.8 3C4.8 1.2 3.9 0 2.5 0C1.1 0 .2 1.2 .2 3C.2 4.8 1.1 6 2.5 6C3.9 6 4.8 4.8 4.8 3L4.8 4.2L1.6 10"/><path transform="translate(713.7 638) scale(1.200)" d="M.6 5.8L4.4 5.8"/><path transform="translate(721 638) scale(1.200)" d="M1.3 2.1L3.3 0L3.3 10"/></g>
<g stroke-width="1.86" vector-effect="non-scaling-stroke"><path transform="translate(790 634) scale(0.700)" d="M2.5 4.6C1.3 4.6 .6 3.7 .6 2.4C.6 1 1.4 0 2.5 0C3.6 0 4.4 1 4.4 2.4C4.4 3.7 3.7 4.6 2.5 4.6C1.1 4.6 .2 5.7 .2 7.3C.2 9 1.1 10 2.5 10C3.9 10 4.8 9 4.8 7.3C4.8 5.7 3.9 4.6 2.5 4.6Z"/><path transform="translate(794.2 634) scale(0.700)" d="M.6 5.8L4.4 5.8"/><path transform="translate(798.5 634) scale(0.700)" d="M1.3 2.1L3.3 0L3.3 10"/></g>
<g stroke-width="1.88" vector-effect="non-scaling-stroke"><path transform="translate(704 699.5) scale(0.850)" d="M.3 2.4C.3 .9 1.2 0 2.5 0C3.9 0 4.7 .9 4.7 2.3C4.7 3.8 3.7 5 .2 10L5 10"/><path transform="translate(709.9 699.5) scale(0.850)" d="M2.5 4.6C1.3 4.6 .6 3.7 .6 2.4C.6 1 1.4 0 2.5 0C3.6 0 4.4 1 4.4 2.4C4.4 3.7 3.7 4.6 2.5 4.6C1.1 4.6 .2 5.7 .2 7.3C.2 9 1.1 10 2.5 10C3.9 10 4.8 9 4.8 7.3C4.8 5.7 3.9 4.6 2.5 4.6Z"/><path transform="translate(715.8 699.5) scale(0.850)" d="M.6 5.8L4.4 5.8"/><path transform="translate(721.8 699.5) scale(0.850)" d="M1.3 2.1L3.3 0L3.3 10"/></g>
<g stroke-width="1.60" vector-effect="non-scaling-stroke"><path transform="translate(779.5 660) scale(1.000)" d="M4.8 3C4.8 1.2 3.9 0 2.5 0C1.1 0 .2 1.2 .2 3C.2 4.8 1.1 6 2.5 6C3.9 6 4.8 4.8 4.8 3L4.8 4.2L1.6 10"/><path transform="translate(787.8 660) scale(1.000)" d="M.6 5.8L4.4 5.8"/><path transform="translate(796 660) scale(1.000)" d="M.4 1.6C.8 .6 1.6 0 2.5 0C3.8 0 4.6 .9 4.6 2.3C4.6 3.7 3.7 4.6 2.3 4.6C3.9 4.6 4.8 5.7 4.8 7.3C4.8 8.9 3.9 10 2.5 10C1.3 10 .5 9.3 .2 8.2"/></g>
<g stroke-width="2.17" vector-effect="non-scaling-stroke"><path transform="translate(804.5 692.5) scale(0.600)" d="M.2 1L.2 0L4.8 0L2 10M1.9 5L4.3 5"/><path transform="translate(808.8 692.5) scale(0.600)" d="M.6 5.8L4.4 5.8"/><path transform="translate(813 692.5) scale(0.600)" d="M1.3 2.1L3.3 0L3.3 10"/></g>
<g stroke-width="1.62" vector-effect="non-scaling-stroke"><path transform="translate(788 717) scale(0.800)" d="M2.5 4.6C1.3 4.6 .6 3.7 .6 2.4C.6 1 1.4 0 2.5 0C3.6 0 4.4 1 4.4 2.4C4.4 3.7 3.7 4.6 2.5 4.6C1.1 4.6 .2 5.7 .2 7.3C.2 9 1.1 10 2.5 10C3.9 10 4.8 9 4.8 7.3C4.8 5.7 3.9 4.6 2.5 4.6Z"/><path transform="translate(794.5 717) scale(0.800)" d="M.6 5.8L4.4 5.8"/><path transform="translate(801 717) scale(0.800)" d="M.4 1.6C.8 .6 1.6 0 2.5 0C3.8 0 4.6 .9 4.6 2.3C4.6 3.7 3.7 4.6 2.3 4.6C3.9 4.6 4.8 5.7 4.8 7.3C4.8 8.9 3.9 10 2.5 10C1.3 10 .5 9.3 .2 8.2"/></g>
<g stroke-width="0.71" vector-effect="non-scaling-stroke"><path transform="translate(910.5 553.5) scale(1.900)" d="M1.3 2.1L3.3 0L3.3 10"/><path transform="translate(919 553.5) scale(1.900)" d="M4.4 .8C3.9 .3 3.3 0 2.7 0C1 0 .2 2 .2 5.5C.2 8.6 1 10 2.5 10C3.9 10 4.8 8.7 4.8 6.9C4.8 5.1 3.9 3.9 2.6 3.9C1.4 3.9 .5 4.9 .2 6.3"/></g>
<g stroke-width="0.63" vector-effect="non-scaling-stroke"><path transform="translate(889 596) scale(2.150)" d="M1.3 2.1L3.3 0L3.3 10"/><path transform="translate(901.8 596) scale(2.150)" d="M.2 1L.2 0L4.8 0L2 10M1.9 5L4.3 5"/></g>
<g stroke-width="0.63" vector-effect="non-scaling-stroke"><path transform="translate(889 647) scale(2.150)" d="M1.3 2.1L3.3 0L3.3 10"/><path transform="translate(901.8 647) scale(2.150)" d="M2.5 4.6C1.3 4.6 .6 3.7 .6 2.4C.6 1 1.4 0 2.5 0C3.6 0 4.4 1 4.4 2.4C4.4 3.7 3.7 4.6 2.5 4.6C1.1 4.6 .2 5.7 .2 7.3C.2 9 1.1 10 2.5 10C3.9 10 4.8 9 4.8 7.3C4.8 5.7 3.9 4.6 2.5 4.6Z"/></g>
<g stroke-width="0.63" vector-effect="non-scaling-stroke"><path transform="translate(898.5 703.5) scale(2.150)" d="M1.3 2.1L3.3 0L3.3 10"/><path transform="translate(911.2 703.5) scale(2.150)" d="M4.8 3C4.8 1.2 3.9 0 2.5 0C1.1 0 .2 1.2 .2 3C.2 4.8 1.1 6 2.5 6C3.9 6 4.8 4.8 4.8 3L4.8 4.2L1.6 10"/></g>
<g stroke-width="2.17" vector-effect="non-scaling-stroke"><path transform="translate(965 582.5) scale(0.600)" d="M.4 1.6C.8 .6 1.6 0 2.5 0C3.8 0 4.6 .9 4.6 2.3C4.6 3.7 3.7 4.6 2.3 4.6C3.9 4.6 4.8 5.7 4.8 7.3C4.8 8.9 3.9 10 2.5 10C1.3 10 .5 9.3 .2 8.2"/><path transform="translate(969.2 582.5) scale(0.600)" d="M4.6 0L.9 0L.5 4.5C1.1 3.9 1.8 3.6 2.6 3.6C4 3.6 4.8 4.9 4.8 6.7C4.8 8.7 3.9 10 2.5 10C1.3 10 .5 9.3 .2 8.2"/><path transform="translate(973.3 582.5) scale(0.600)" d="M.6 5.8L4.4 5.8"/><path transform="translate(977.5 582.5) scale(0.600)" d="M.3 2.4C.3 .9 1.2 0 2.5 0C3.9 0 4.7 .9 4.7 2.3C4.7 3.8 3.7 5 .2 10L5 10"/></g>
<g stroke-width="1.62" vector-effect="non-scaling-stroke"><path transform="translate(951 686) scale(0.800)" d="M.4 1.6C.8 .6 1.6 0 2.5 0C3.8 0 4.6 .9 4.6 2.3C4.6 3.7 3.7 4.6 2.3 4.6C3.9 4.6 4.8 5.7 4.8 7.3C4.8 8.9 3.9 10 2.5 10C1.3 10 .5 9.3 .2 8.2"/><path transform="translate(957.8 686) scale(0.800)" d="M3.8 10L3.8 0L.1 7.2L5 7.2"/><path transform="translate(964.7 686) scale(0.800)" d="M.6 5.8L4.4 5.8"/><path transform="translate(971.5 686) scale(0.800)" d="M.3 2.4C.3 .9 1.2 0 2.5 0C3.9 0 4.7 .9 4.7 2.3C4.7 3.8 3.7 5 .2 10L5 10"/></g>
<path d="M910.5 728.5H921.5" stroke-width="1.3"/>
<path d="M708 650.3H712.5" stroke-width="1.3"/>
<g transform="translate(1045 690.5) rotate(-90)"><g stroke-width="1.33" vector-effect="non-scaling-stroke"><path transform="translate(0 0) scale(1.200)" d="M1.3 2.1L3.3 0L3.3 10"/><path transform="translate(7.8 0) scale(1.200)" d="M3.8 10L3.8 0L.1 7.2L5 7.2"/><path transform="translate(15.7 0) scale(1.200)" d="M.6 5.8L4.4 5.8"/><path transform="translate(23.5 0) scale(1.200)" d="M1.3 2.1L3.3 0L3.3 10"/></g></g>
<g transform="translate(1093 670.5) rotate(-90)"><g stroke-width="0.82" vector-effect="non-scaling-stroke"><path transform="translate(0 0) scale(1.650)" d="M1.3 2.1L3.3 0L3.3 10"/><path transform="translate(9.2 0) scale(1.650)" d="M4.6 0L.9 0L.5 4.5C1.1 3.9 1.8 3.6 2.6 3.6C4 3.6 4.8 4.9 4.8 6.7C4.8 8.7 3.9 10 2.5 10C1.3 10 .5 9.3 .2 8.2"/></g></g>
</g>
<rect x="532.6" y="251.5" width="292" height="487.1" stroke="#ff0000" stroke-width="1.4"/>
<rect x="838.4" y="252.5" width="292" height="487" stroke="#ff2a2a" stroke-width="1.2" stroke-dasharray="2 3"/>
<rect x="839.5" y="251.5" width="292" height="487" stroke="#ffff00" stroke-width="1.5"/>
</g>
<circle cx="839.4" cy="251.6" r="2.7" fill="#fff" stroke="#f22" stroke-width="1.3"/>
<circle cx="1131.4" cy="251.6" r="2.7" fill="#fff" stroke="#f22" stroke-width="1.3"/>
<circle cx="839.4" cy="738.6" r="2.7" fill="#fff" stroke="#f22" stroke-width="1.3"/>
<circle cx="1131.4" cy="738.6" r="2.7" fill="#fff" stroke="#f22" stroke-width="1.3"/>
<path d="M196.5 854V891.5H233" fill="none" stroke="#595b60" stroke-width="1" shape-rendering="crispEdges"/>
</svg>
<span class="t" style="left:199.3px;top:840.9px;font-size:16px;line-height:16px;color:#595b60">y</span>
<span class="t" style="left:236px;top:879.9px;font-size:16px;line-height:16px;color:#595b60">x</span>
<div class="b" style="left:152px;top:167px;width:58px;height:23px;background:#6ba5fd;border-radius:0 0 4px 0"></div>
<span class="t" style="left:159.5px;top:170px;font-size:15px;line-height:15px;font-weight:bold;color:#1d1a16;letter-spacing:0.1px">Top</span>
<svg style="left:190px;top:167px" width="20" height="23"><path d="M6.5 2V22" stroke="#222" stroke-width="1.2"/><path d="M8.3 8.3h9l-4.5 5.2z" fill="#2b2b2b"/></svg>
<div class="b" style="left:152px;top:937px;width:1275px;height:26px;background:#d9dbe1;"></div>
<div class="b" style="left:151px;top:937px;width:50px;height:26px;background:#ebecf0;border-radius:0 0 6px 6px;border:1px solid #c5c8d0;border-top:none;box-sizing:border-box"></div>
<span class="t" style="left:165.0px;top:941.9px;font-size:15.5px;line-height:15.5px;letter-spacing:0.00px;color:#1a1a1a;">Top</span>
<span class="t" style="left:212.0px;top:941.9px;font-size:15.5px;line-height:15.5px;letter-spacing:-0.60px;color:#6e6f74;">Perspective</span>
<span class="t" style="left:309.0px;top:941.9px;font-size:15.5px;line-height:15.5px;letter-spacing:-0.29px;color:#6e6f74;">Front</span>
<span class="t" style="left:364.0px;top:941.9px;font-size:15.5px;line-height:15.5px;letter-spacing:-0.05px;color:#6e6f74;">Right</span>
<svg style="left:422px;top:944px" width="12" height="12"><path d="M4.5 1.5h3v3h3v3h-3v3h-3v-3h-3v-3h3z" fill="none" stroke="#777" stroke-width="1"/></svg>
<div class="b" style="left:0px;top:963px;width:1917px;height:24px;background:#ebecf0;"></div>
<svg style="left:8px;top:968px" width="18" height="18"><rect x="1" y="1" width="15" height="15" fill="#fff" stroke="#222" stroke-width="2"/><rect x="1" y="1" width="5" height="15" fill="#222"/></svg>
<svg style="left:1892px;top:968px" width="18" height="18"><rect x="1" y="1" width="15" height="15" fill="#fff" stroke="#222" stroke-width="2"/><rect x="11" y="1" width="5" height="15" fill="#222"/></svg>
<span class="t" style="left:51.0px;top:968.9px;font-size:15.5px;line-height:15.5px;letter-spacing:-1.17px;color:#333;">CPlane</span>
<span class="t" style="left:146.0px;top:968.9px;font-size:15.5px;line-height:15.5px;letter-spacing:-0.64px;color:#333;">x 604.78</span>
<span class="t" style="left:253.0px;top:968.9px;font-size:15.5px;line-height:15.5px;letter-spacing:-0.78px;color:#333;">y 950.41</span>
<span class="t" style="left:377.0px;top:968.9px;font-size:15.5px;line-height:15.5px;letter-spacing:-0.84px;color:#333;">z 0</span>
<span class="t" style="left:465.0px;top:968.9px;font-size:15.5px;line-height:15.5px;letter-spacing:-0.11px;color:#333;">Millimeters</span>
<div class="b" style="left:569px;top:967px;width:20px;height:20px;background:#ffff00;border:1.5px solid #444;box-sizing:border-box"></div>
<span class="t" style="left:596.0px;top:968.9px;font-size:15.5px;line-height:15.5px;letter-spacing:0.16px;color:#333;">cut</span>
<div class="b" style="left:804px;top:964px;width:88px;height:23px;background:#d4daf3;border-radius:4px 4px 0 0"></div>
<div class="b" style="left:895px;top:964px;width:62px;height:23px;background:#d4daf3;border-radius:4px 4px 0 0"></div>
<div class="b" style="left:1027px;top:964px;width:61px;height:23px;background:#d4daf3;border-radius:4px 4px 0 0"></div>
<div class="b" style="left:1655px;top:964px;width:55px;height:23px;background:#d4daf3;border-radius:4px 4px 0 0"></div>
<span class="t" style="left:815.0px;top:968.9px;font-size:15.5px;line-height:15.5px;letter-spacing:-0.63px;color:#222;font-weight:bold;">Grid Snap</span>
<span class="t" style="left:905.0px;top:968.9px;font-size:15.5px;line-height:15.5px;letter-spacing:-0.05px;color:#222;font-weight:bold;">Ortho</span>
<span class="t" style="left:971.0px;top:968.9px;font-size:15.5px;line-height:15.5px;letter-spacing:-0.76px;color:#333;">Planar</span>
<span class="t" style="left:1036.0px;top:968.9px;font-size:15.5px;line-height:15.5px;letter-spacing:-1.06px;color:#222;font-weight:bold;">Osnap</span>
<span class="t" style="left:1106.0px;top:968.9px;font-size:15.5px;line-height:15.5px;letter-spacing:-0.72px;color:#333;">SmartTrack</span>
<span class="t" style="left:1209.0px;top:968.9px;font-size:15.5px;line-height:15.5px;letter-spacing:-0.61px;color:#333;">Gumball (CPlane)</span>
<svg style="left:1346px;top:966px" width="14" height="18"><rect x="1.5" y="7.5" width="10" height="8" rx="1.5" fill="#f4f4f4" stroke="#aaa"/><path d="M3.5 7.5V4.5a3 3 0 0 1 6 0V7.5" fill="none" stroke="#aaa" stroke-width="1.3"/></svg>
<span class="t" style="left:1372.0px;top:968.9px;font-size:15.5px;line-height:15.5px;letter-spacing:-0.44px;color:#333;">Auto CPlane (Object)</span>
<span class="t" style="left:1541.0px;top:968.9px;font-size:15.5px;line-height:15.5px;letter-spacing:-0.42px;color:#333;">Record History</span>
<span class="t" style="left:1664.0px;top:968.9px;font-size:15.5px;line-height:15.5px;letter-spacing:-0.38px;color:#222;font-weight:bold;">Filter</span>
<div class="b" style="left:1726px;top:964px;width:118.5px;height:23px;overflow:hidden"><span class="t" style="left:0.0px;top:4.9px;font-size:15.5px;line-height:15.5px;letter-spacing:-0.46px;color:#333;">Absolute tolerance</span></div>
<div class="b" style="left:1431px;top:165px;width:486px;height:798px;background:#ebecf0;border-radius:8px 0 0 0"></div>
<div class="b" style="left:1431px;top:188px;width:456px;height:1px;background:#e1e3e8;"></div>
<span class="t" style="left:1432.5px;top:168.9px;font-size:15.5px;line-height:15.5px;letter-spacing:-1.20px;color:#6e6f74;">Layers</span>
<div class="b" style="left:1891px;top:233px;width:26px;height:730px;background:#d9dbe1;border-radius:7px 0 0 0"></div>
<div class="b" style="left:1431px;top:266px;width:456px;height:697px;background:#fff;"></div>
<div class="b" style="left:1432px;top:232px;width:455px;height:26px;background:#fff;border:1px solid #c3cbe0;border-radius:13px;box-sizing:border-box"></div>
<svg style="left:1436px;top:237px" width="18" height="18"><circle cx="7.3" cy="7.6" r="5" fill="none" stroke="#222" stroke-width="1.4"/><path d="M10.8 11.4L14 15" stroke="#222" stroke-width="1.5"/></svg>
<span class="t" style="left:1454.0px;top:236.4px;font-size:15.5px;line-height:15.5px;letter-spacing:-1.02px;color:#767b85;">Search</span>
<div class="b" style="left:1530px;top:266px;width:1px;height:28px;background:#e3e6ee;"></div>
<div class="b" style="left:1555px;top:266px;width:1px;height:28px;background:#e3e6ee;"></div>
<div class="b" style="left:1580px;top:266px;width:1px;height:28px;background:#e3e6ee;"></div>
<div class="b" style="left:1605px;top:266px;width:1px;height:28px;background:#e3e6ee;"></div>
<div class="b" style="left:1630px;top:266px;width:1px;height:28px;background:#e3e6ee;"></div>
<div class="b" style="left:1730px;top:266px;width:1px;height:28px;background:#e3e6ee;"></div>
<div class="b" style="left:1830px;top:266px;width:1px;height:28px;background:#e3e6ee;"></div>
<div class="b" style="left:1855px;top:266px;width:1px;height:28px;background:#e3e6ee;"></div>
<div class="b" style="left:1431px;top:294px;width:456px;height:1px;background:#dfe3ec;"></div>
<span class="t" style="left:1437.5px;top:272.4px;font-size:15.5px;line-height:15.5px;letter-spacing:-1.07px;color:#222;">Layer</span>
<span class="t" style="left:1637.5px;top:272.4px;font-size:15.5px;line-height:15.5px;letter-spacing:-0.23px;color:#222;">Material</span>
<span class="t" style="left:1737.0px;top:272.4px;font-size:15.5px;line-height:15.5px;letter-spacing:-0.37px;color:#222;">Linetype</span>
<div class="b" style="left:1862px;top:268px;width:25px;height:24px;overflow:hidden"><span class="t" style="left:0.0px;top:4.4px;font-size:15.5px;line-height:15.5px;letter-spacing:-0.85px;color:#222;">Prin</span></div>
<span class="t" style="left:1452.0px;top:298.9px;font-size:15.5px;line-height:15.5px;letter-spacing:-0.02px;color:#1a1a1a;">Default</span>
<svg style="left:1561px;top:296.5px" width="14" height="18"><path d="M7 1.5C3.9 1.5 2 3.7 2 6.3c0 1.9 1.2 3 1.9 4.3.4.8.5 1.5.5 2.4h5.2c0-.9.1-1.6.5-2.4.7-1.3 1.9-2.4 1.9-4.3C12 3.7 10.100 1.500 7 1.500z" fill="#f7d21e" stroke="#9b7a10" stroke-width=".9"/><path d="M4.600 13.500h4.800v2.200c0 .6-.5 1-1 1h-2.800c-.5 0-1-.4-1-1z" fill="#e08a1a" stroke="#9b5a10" stroke-width=".6"/><path d="M5 4.500c.5-.9 1.300-1.300 2.300-1.300" stroke="#fff7c0" stroke-width="1.100" fill="none"/></svg>
<svg style="left:1584.5px;top:295.5px" width="18" height="18"><path d="M9.500 8V4.700a2.600 2.600 0 0 1 5.200 0V6" fill="none" stroke="#6a6a6a" stroke-width="1.500"/><rect x="2.500" y="8" width="9.500" height="8" rx="1" fill="#f7d94e" stroke="#8f6d0e" stroke-width=".9"/><path d="M4 10h6.500M4 12h6.500M4 14h6.500" stroke="#d9a514" stroke-width=".7"/></svg>
<div class="b" style="left:1609.5px;top:297px;width:17.5px;height:17.5px;background:#000;border:1px solid #333;box-sizing:border-box"></div>
<svg style="left:1632px;top:295.5px" width="20" height="20"><circle cx="9.500" cy="10" r="7.700" fill="#fff" stroke="#333" stroke-width="1"/></svg>
<span class="t" style="left:1732.0px;top:298.9px;font-size:15.5px;line-height:15.5px;letter-spacing:-0.49px;color:#1a1a1a;">Continuous</span>
<svg style="left:1833px;top:295px" width="22" height="22"><path d="M11 2L20 11L11 20L2 11Z" fill="#000" stroke="#111" stroke-width="1"/><path d="M20 11L11 20" stroke="#111" stroke-width="2"/></svg>
<div class="b" style="left:1857.500px;top:294.5px;width:29.500px;height:24px;overflow:hidden"><span class="t" style="left:0.0px;top:4.4px;font-size:15.5px;line-height:15.5px;letter-spacing:-0.02px;color:#1a1a1a;">Default</span></div>
<div class="b" style="left:1431px;top:318px;width:456px;height:0;border-top:1px dotted #cfd2da"></div>
<span class="t" style="left:1452.0px;top:322.9px;font-size:15.5px;line-height:15.5px;letter-spacing:-0.04px;color:#1a1a1a;">annotation</span>
<svg style="left:1561px;top:320.5px" width="14" height="18"><path d="M7 1.5C3.9 1.5 2 3.7 2 6.3c0 1.9 1.2 3 1.9 4.3.4.8.5 1.5.5 2.4h5.2c0-.9.1-1.6.5-2.4.7-1.3 1.9-2.4 1.9-4.3C12 3.7 10.100 1.500 7 1.500z" fill="#f7d21e" stroke="#9b7a10" stroke-width=".9"/><path d="M4.600 13.500h4.800v2.200c0 .6-.5 1-1 1h-2.800c-.5 0-1-.4-1-1z" fill="#e08a1a" stroke="#9b5a10" stroke-width=".6"/><path d="M5 4.500c.5-.9 1.300-1.300 2.300-1.300" stroke="#fff7c0" stroke-width="1.100" fill="none"/></svg>
<svg style="left:1584.5px;top:319.5px" width="18" height="18"><path d="M9.500 8V4.700a2.600 2.600 0 0 1 5.200 0V6" fill="none" stroke="#6a6a6a" stroke-width="1.500"/><rect x="2.500" y="8" width="9.500" height="8" rx="1" fill="#f7d94e" stroke="#8f6d0e" stroke-width=".9"/><path d="M4 10h6.500M4 12h6.500M4 14h6.500" stroke="#d9a514" stroke-width=".7"/></svg>
<div class="b" style="left:1609.5px;top:321px;width:17.5px;height:17.5px;background:#000;border:1px solid #333;box-sizing:border-box"></div>
<svg style="left:1632px;top:319.5px" width="20" height="20"><circle cx="9.500" cy="10" r="7.700" fill="#fff" stroke="#333" stroke-width="1"/></svg>
<span class="t" style="left:1732.0px;top:322.9px;font-size:15.5px;line-height:15.5px;letter-spacing:-0.49px;color:#1a1a1a;">Continuous</span>
<svg style="left:1833px;top:319px" width="22" height="22"><path d="M11 2L20 11L11 20L2 11Z" fill="#000" stroke="#111" stroke-width="1"/><path d="M20 11L11 20" stroke="#111" stroke-width="2"/></svg>
<div class="b" style="left:1857.500px;top:318.5px;width:29.500px;height:24px;overflow:hidden"><span class="t" style="left:0.0px;top:4.4px;font-size:15.5px;line-height:15.5px;letter-spacing:-0.02px;color:#1a1a1a;">Default</span></div>
<div class="b" style="left:1431px;top:342px;width:456px;height:0;border-top:1px dotted #cfd2da"></div>
<span class="t" style="left:1452.0px;top:346.9px;font-size:15.5px;line-height:15.5px;letter-spacing:-0.15px;color:#1a1a1a;">frame</span>
<svg style="left:1561px;top:344.5px" width="14" height="18"><path d="M7 1.5C3.9 1.5 2 3.7 2 6.3c0 1.9 1.2 3 1.9 4.3.4.8.5 1.5.5 2.4h5.2c0-.9.1-1.6.5-2.4.7-1.3 1.9-2.4 1.9-4.3C12 3.7 10.100 1.500 7 1.500z" fill="#f7d21e" stroke="#9b7a10" stroke-width=".9"/><path d="M4.600 13.500h4.800v2.200c0 .6-.5 1-1 1h-2.800c-.5 0-1-.4-1-1z" fill="#e08a1a" stroke="#9b5a10" stroke-width=".6"/><path d="M5 4.500c.5-.9 1.300-1.300 2.300-1.300" stroke="#fff7c0" stroke-width="1.100" fill="none"/></svg>
<svg style="left:1584.5px;top:343.5px" width="18" height="18"><path d="M9.500 8V4.700a2.600 2.600 0 0 1 5.200 0V6" fill="none" stroke="#6a6a6a" stroke-width="1.500"/><rect x="2.500" y="8" width="9.500" height="8" rx="1" fill="#f7d94e" stroke="#8f6d0e" stroke-width=".9"/><path d="M4 10h6.500M4 12h6.500M4 14h6.500" stroke="#d9a514" stroke-width=".7"/></svg>
<div class="b" style="left:1609.5px;top:345px;width:17.5px;height:17.5px;background:#000;border:1px solid #333;box-sizing:border-box"></div>
<svg style="left:1632px;top:343.5px" width="20" height="20"><circle cx="9.500" cy="10" r="7.700" fill="#fff" stroke="#333" stroke-width="1"/></svg>
<span class="t" style="left:1732.0px;top:346.9px;font-size:15.5px;line-height:15.5px;letter-spacing:-0.49px;color:#1a1a1a;">Continuous</span>
<svg style="left:1833px;top:343px" width="22" height="22"><path d="M11 2L20 11L11 20L2 11Z" fill="#000" stroke="#111" stroke-width="1"/><path d="M20 11L11 20" stroke="#111" stroke-width="2"/></svg>
<div class="b" style="left:1857.500px;top:342.5px;width:29.500px;height:24px;overflow:hidden"><span class="t" style="left:0.0px;top:4.4px;font-size:15.5px;line-height:15.5px;letter-spacing:-0.02px;color:#1a1a1a;">Default</span></div>
<div class="b" style="left:1431px;top:366px;width:456px;height:0;border-top:1px dotted #cfd2da"></div>
<span class="t" style="left:1452.0px;top:370.9px;font-size:15.5px;line-height:15.5px;letter-spacing:0.00px;color:#1a1a1a;">0</span>
<svg style="left:1561px;top:368.5px" width="14" height="18"><path d="M7 1.5C3.9 1.5 2 3.7 2 6.3c0 1.9 1.2 3 1.9 4.3.4.8.5 1.5.5 2.4h5.2c0-.9.1-1.6.5-2.4.7-1.3 1.9-2.4 1.9-4.3C12 3.7 10.100 1.500 7 1.500z" fill="#f7d21e" stroke="#9b7a10" stroke-width=".9"/><path d="M4.600 13.500h4.800v2.200c0 .6-.5 1-1 1h-2.800c-.5 0-1-.4-1-1z" fill="#e08a1a" stroke="#9b5a10" stroke-width=".6"/><path d="M5 4.500c.5-.9 1.300-1.300 2.300-1.300" stroke="#fff7c0" stroke-width="1.100" fill="none"/></svg>
<svg style="left:1584.5px;top:367.5px" width="18" height="18"><path d="M9.500 8V4.700a2.600 2.600 0 0 1 5.200 0V6" fill="none" stroke="#6a6a6a" stroke-width="1.500"/><rect x="2.500" y="8" width="9.500" height="8" rx="1" fill="#f7d94e" stroke="#8f6d0e" stroke-width=".9"/><path d="M4 10h6.500M4 12h6.500M4 14h6.500" stroke="#d9a514" stroke-width=".7"/></svg>
<div class="b" style="left:1609.5px;top:369px;width:17.5px;height:17.5px;background:#000;border:1px solid #333;box-sizing:border-box"></div>
<svg style="left:1632px;top:367.5px" width="20" height="20"><circle cx="9.500" cy="10" r="7.700" fill="#fff" stroke="#333" stroke-width="1"/></svg>
<span class="t" style="left:1732.0px;top:370.9px;font-size:15.5px;line-height:15.5px;letter-spacing:-0.49px;color:#1a1a1a;">Continuous</span>
<svg style="left:1833px;top:367px" width="22" height="22"><path d="M11 2L20 11L11 20L2 11Z" fill="#000" stroke="#111" stroke-width="1"/><path d="M20 11L11 20" stroke="#111" stroke-width="2"/></svg>
<div class="b" style="left:1857.500px;top:366.5px;width:29.500px;height:24px;overflow:hidden"><span class="t" style="left:0.0px;top:4.4px;font-size:15.5px;line-height:15.5px;letter-spacing:-0.02px;color:#1a1a1a;">Default</span></div>
<div class="b" style="left:1431px;top:390px;width:456px;height:0;border-top:1px dotted #cfd2da"></div>
<span class="t" style="left:1452.0px;top:393.9px;font-size:15.5px;line-height:15.5px;letter-spacing:-0.34px;color:#1a1a1a;">cut</span>
<svg style="left:1561px;top:391.5px" width="14" height="18"><path d="M7 1.5C3.9 1.5 2 3.7 2 6.3c0 1.9 1.2 3 1.9 4.3.4.8.5 1.5.5 2.4h5.2c0-.9.1-1.6.5-2.4.7-1.3 1.9-2.4 1.9-4.3C12 3.7 10.100 1.500 7 1.500z" fill="#f7d21e" stroke="#9b7a10" stroke-width=".9"/><path d="M4.600 13.500h4.800v2.200c0 .6-.5 1-1 1h-2.800c-.5 0-1-.4-1-1z" fill="#e08a1a" stroke="#9b5a10" stroke-width=".6"/><path d="M5 4.500c.5-.9 1.300-1.300 2.300-1.300" stroke="#fff7c0" stroke-width="1.100" fill="none"/></svg>
<svg style="left:1584.5px;top:390.5px" width="18" height="18"><path d="M9.500 8V4.700a2.600 2.600 0 0 1 5.200 0V6" fill="none" stroke="#6a6a6a" stroke-width="1.500"/><rect x="2.500" y="8" width="9.500" height="8" rx="1" fill="#f7d94e" stroke="#8f6d0e" stroke-width=".9"/><path d="M4 10h6.500M4 12h6.500M4 14h6.500" stroke="#d9a514" stroke-width=".7"/></svg>
<div class="b" style="left:1609.5px;top:392px;width:17.5px;height:17.5px;background:#ffff00;border:1px solid #333;box-sizing:border-box"></div>
<svg style="left:1632px;top:390.5px" width="20" height="20"><circle cx="9.500" cy="10" r="7.700" fill="#fff" stroke="#333" stroke-width="1"/></svg>
<span class="t" style="left:1732.0px;top:393.9px;font-size:15.5px;line-height:15.5px;letter-spacing:-0.49px;color:#1a1a1a;">Continuous</span>
<svg style="left:1833px;top:390px" width="22" height="22"><path d="M11 2L20 11L11 20L2 11Z" fill="#ffff00" stroke="#111" stroke-width="1"/><path d="M20 11L11 20" stroke="#111" stroke-width="2"/></svg>
<div class="b" style="left:1857.500px;top:389.5px;width:29.500px;height:24px;overflow:hidden"><span class="t" style="left:0.0px;top:4.4px;font-size:15.5px;line-height:15.5px;letter-spacing:-0.02px;color:#1a1a1a;">Default</span></div>
<div class="b" style="left:1431px;top:413px;width:456px;height:0;border-top:1px dotted #cfd2da"></div>
<span class="t" style="left:1452.0px;top:417.9px;font-size:15.5px;line-height:15.5px;letter-spacing:-0.59px;color:#1a1a1a;font-weight:bold;">grave</span>
<svg style="left:1534px;top:417.5px" width="20" height="16"><path d="M2 8.500L7 13.500L17.500 2" fill="none" stroke="#222" stroke-width="1.700"/></svg>
<div class="b" style="left:1609.5px;top:416px;width:17.5px;height:17.5px;background:#0000ff;border:1px solid #333;box-sizing:border-box"></div>
<svg style="left:1632px;top:414.5px" width="20" height="20"><circle cx="9.500" cy="10" r="7.700" fill="#fff" stroke="#333" stroke-width="1"/></svg>
<span class="t" style="left:1732.0px;top:417.9px;font-size:15.5px;line-height:15.5px;letter-spacing:-0.68px;color:#1a1a1a;font-weight:bold;">Continuous</span>
<svg style="left:1833px;top:414px" width="22" height="22"><path d="M11 2L20 11L11 20L2 11Z" fill="#0000ff" stroke="#111" stroke-width="1"/><path d="M20 11L11 20" stroke="#111" stroke-width="2"/></svg>
<div class="b" style="left:1857.500px;top:413.5px;width:29.500px;height:24px;overflow:hidden"><span class="t" style="left:0.0px;top:4.4px;font-size:15.5px;line-height:15.5px;letter-spacing:0.24px;color:#1a1a1a;font-weight:bold;">Default</span></div>
<div class="b" style="left:1431px;top:437px;width:456px;height:0;border-top:1px dotted #cfd2da"></div>
<div class="b" style="left:1440px;top:948px;width:293px;height:10px;background:#c2c2c2;border-radius:5px"></div>
<div class="b" style="left:1395px;top:367px;width:517.500px;height:111.500px;border:15px solid #000;box-sizing:border-box"></div>
<svg style="left:1600px;top:480px" width="100" height="185"><path d="M45.300 7.500L82.800 81H53V178.700H38V81H8.300Z" fill="#000"/></svg>
<svg style="left:1896px;top:169px" width="16" height="16" viewBox="-8 -8 16 16"><g fill="#c4c6cc"><rect x="-1.600" y="-7.300" width="3.200" height="14.600" rx=".8" transform="rotate(0)"/><rect x="-1.600" y="-7.300" width="3.200" height="14.600" rx=".8" transform="rotate(45)"/><rect x="-1.600" y="-7.300" width="3.200" height="14.600" rx=".8" transform="rotate(90)"/><rect x="-1.600" y="-7.300" width="3.200" height="14.600" rx=".8" transform="rotate(135)"/><circle r="5"/></g><circle r="2.200" fill="#ebecf0"/></svg>
<svg width="0" height="0" style="left:0;top:0"><defs><linearGradient id="gfun" x1="0" x2="1"><stop offset="0" stop-color="#1f3fb5"/><stop offset=".5" stop-color="#8db0ff"/><stop offset="1" stop-color="#1f3fb5"/></linearGradient><radialGradient id="ghelp" cx=".4" cy=".3" r=".8"><stop offset="0" stop-color="#6f8df0"/><stop offset="1" stop-color="#1b2fa0"/></radialGradient><linearGradient id="gmon" x1="0" y1="0" x2="1" y2="1"><stop offset="0" stop-color="#fdfdfd"/><stop offset="1" stop-color="#8a8a8a"/></linearGradient></defs></svg>
<svg style="left:1434.2px;top:199.8px" width="20" height="20" viewBox="0 0 20 20"><path d="M1.500 3L17 4.800L17 8.500L5.500 11.500Z" fill="#f26a2e"/><path d="M5.500 11.500L17 8.500L16.500 11.500L8 15Z" fill="#fff"/><path d="M8 15L16.500 11.500L15 14L10 17.500Z" fill="#3656c0"/><path d="M1.500 3L17 4.800L17 9L15 14L10 17.500Z" fill="none" stroke="#111" stroke-width="1.100" stroke-linejoin="round"/><path d="M15 11.500v7M11.500 15h7" stroke="#fff" stroke-width="4"/><path d="M15 11.800v6.400M11.800 15h6.400" stroke="#111" stroke-width="2.200"/></svg>
<svg style="left:1462px;top:199.8px" width="20" height="20" viewBox="0 0 20 20"><path d="M2 2.500l4-1.500 4 2-1 5-3.500 3-3-3z" fill="#d6d7db" stroke="#b9babf"/><path d="M9 9.500l4-1.500 5 2-1 6-4 2.500-4-3z" fill="#d6d7db" stroke="#b9babf"/><path d="M3.500 11v6h4M6 15l2 2-2 2" fill="none" stroke="#b9babf" stroke-width="1.200"/></svg>
<svg style="left:1489.3px;top:199.8px" width="20" height="20" viewBox="0 0 20 20"><path d="M2 2L18 18M18 2L2 18" stroke="#b9babf" stroke-width="3.200"/><path d="M2 2L18 18M18 2L2 18" stroke="#d6d7db" stroke-width="1.400"/></svg>
<svg style="left:1516.3px;top:199.8px" width="20" height="20" viewBox="0 0 20 20"><path d="M13 4.500A7.500 7.500 0 1 0 9 18" fill="none" stroke="#b9babf" stroke-width="1.300"/><path d="M10 1.500l4 3-4.500 2" fill="none" stroke="#b9babf" stroke-width="1.300"/><path d="M5 8l7-2 6 2.500-1 6.500-5 3-5.500-3.500z" fill="#d6d7db" stroke="#b9babf"/></svg>
<svg style="left:1544px;top:199.8px" width="20" height="20" viewBox="0 0 20 20"><path d="M2 13.500L10 3.500L18 13.500Z" fill="#d6d7db" stroke="#b9babf" stroke-linejoin="round"/></svg>
<svg style="left:1572px;top:199.8px" width="20" height="20" viewBox="0 0 20 20"><path d="M2 6L10 16L18 6Z" fill="#d6d7db" stroke="#b9babf" stroke-linejoin="round"/></svg>
<svg style="left:1598.8px;top:199.8px" width="20" height="20" viewBox="0 0 20 20"><path d="M14.500 2L4.500 10L14.500 18Z" fill="#d6d7db" stroke="#b9babf" stroke-linejoin="round"/></svg>
<svg style="left:1625.8px;top:199.8px" width="20" height="20" viewBox="0 0 20 20"><path d="M2 3.500L8 11V17.500L12 19V11L18 3.500Z" fill="url(#gfun)" stroke="#17298a" stroke-width=".9" stroke-linejoin="round"/><ellipse cx="10" cy="3.300" rx="8" ry="1.700" fill="#3b5fd0" stroke="#17298a" stroke-width=".8"/></svg>
<svg style="left:1653.8px;top:199.8px" width="20" height="20" viewBox="0 0 20 20"><rect x="3" y="1.500" width="14" height="17" fill="#fdfdfd" stroke="#555" stroke-width="1"/><rect x="3" y="1.500" width="14" height="3" fill="#555"/><path d="M3 9h14M3 13.800h14M7.700 2v16.500M12.300 2v16.500" stroke="#555" stroke-width="1"/></svg>
<svg style="left:1682px;top:199.8px" width="20" height="20" viewBox="0 0 20 20"><path d="M2.500 4h15M2.500 10h15M2.500 16h15" stroke="#111" stroke-width="2.600"/></svg>
<svg style="left:1709px;top:199.8px" width="20" height="20" viewBox="0 0 20 20"><circle cx="10" cy="10" r="9" fill="url(#ghelp)" stroke="#1b2a8c" stroke-width=".6"/><text x="10" y="15.500" text-anchor="middle" style="font-family:'Liberation Serif',serif" font-weight="bold" font-size="15.500" fill="#fff">?</text></svg>
<svg style="left:1894px;top:201px" width="20" height="20" viewBox="0 0 20 20"><path d="M2.500 5.500L17 3L17 8L7 12Z" fill="#f26a2e"/><path d="M7 12L17 8L17 11L9 15Z" fill="#fff"/><path d="M9 15L17 11L17 13L10.500 18Z" fill="#3656c0"/><path d="M2.500 5.500L17 3L17 13L10.500 18Z" fill="none" stroke="#111" stroke-width="1.100" stroke-linejoin="round"/></svg>
<div class="b" style="left:1896px;top:248px;width:16px;height:16px;border-radius:50%;background:conic-gradient(#ff2a2a,#ffe92a,#2aff3c,#2affea,#2a4bff,#ff2af0,#ff2a2a);border:1px solid #333;box-sizing:border-box"></div><div class="b" style="left:1900.500px;top:252.500px;width:7px;height:7px;border-radius:50%;background:#ebecf0;border:1px solid #333;box-sizing:border-box"></div>
<svg style="left:1893px;top:290px" width="22" height="22" viewBox="0 0 22 22"><rect x="1.500" y="2" width="19" height="14" fill="url(#gmon)" stroke="#222" stroke-width="1.600"/><path d="M8 16h6v2.500h3v1.500H5v-1.500h3z" fill="#222"/></svg>
<svg style="left:1893px;top:335px" width="22" height="22" viewBox="0 0 22 22"><rect x="1.500" y="2.500" width="19" height="17" fill="#3a55d8" stroke="#444" stroke-width="1"/><rect x="1.500" y="2.500" width="19" height="3" fill="#e8e8f5" stroke="#444" stroke-width="1"/><text x="11" y="17.500" text-anchor="middle" style="font-family:'Liberation Serif',serif" font-weight="bold" font-size="13" fill="#fff">?</text></svg>
</body></html>
